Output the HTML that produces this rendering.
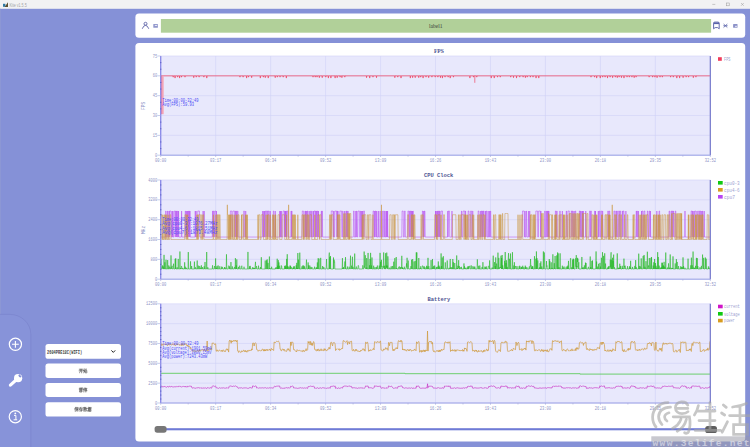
<!DOCTYPE html>
<html><head><meta charset="utf-8"><style>
html,body{margin:0;padding:0;width:750px;height:447px;overflow:hidden;background:#8591d7;}
svg{position:absolute;left:0;top:0;}
</style></head><body>
<svg width="750" height="447" viewBox="0 0 750 447">
<!-- title bar -->
<rect x="0" y="0" width="750" height="8.8" fill="#f2f2f3"/>
<rect x="3" y="3.8" width="2.4" height="3" fill="#2f78a0"/>
<path d="M4.6,6.9 L8,2.2 L8,6.9 Z" fill="#5c5030"/>
<text x="9.4" y="6.6" font-family="Liberation Sans" font-size="5" fill="#a4a4a4" textLength="17.3" lengthAdjust="spacingAndGlyphs">Kite v1.5.5</text>
<rect x="0" y="8.8" width="0.8" height="438.2" fill="#8e99d4"/>
<line x1="712.3" y1="4.4" x2="715.3" y2="4.4" stroke="#999" stroke-width="0.5"/>
<rect x="726.4" y="3" width="2.8" height="2.8" fill="none" stroke="#999" stroke-width="0.5"/>
<path d="M741,3 L743.8,5.8 M743.8,3 L741,5.8" stroke="#999" stroke-width="0.5"/>
<!-- left sidebar strip -->
<path d="M0,314.4 H10 C21,314.4 30.8,323 30.8,334 V447 H0 Z" fill="#8793d9"/>
<path d="M0,314.4 H10 C21,314.4 30.8,323 30.8,334 V447" fill="none" stroke="#7a85cd" stroke-width="0.9" stroke-opacity="0.8"/>
<!-- sidebar icons -->
<circle cx="15.4" cy="344.3" r="6.1" fill="none" stroke="#fff" stroke-width="1.2"/>
<path d="M15.4,340.9 V347.7 M12,344.3 H18.8" stroke="#fff" stroke-width="1.1"/>
<path d="M10.4,385.2 L17.2,379" stroke="#fff" stroke-width="3.1" stroke-linecap="round"/>
<circle cx="18.1" cy="378.2" r="4.1" fill="#fff"/>
<path d="M19.2,374 L21.6,376.4 L20.8,377.4 L19,377 L18.6,375.2 Z" fill="#8893d9"/>
<circle cx="15.3" cy="416.7" r="6.1" fill="none" stroke="#fff" stroke-width="1.2"/>
<circle cx="15.3" cy="413.4" r="0.9" fill="#fff"/>
<path d="M14,415.4 H15.9 V419.6 M13.6,419.8 H17.2" stroke="#fff" stroke-width="1" fill="none"/>
<!-- control panel -->
<rect x="45.5" y="344" width="75.5" height="14.8" rx="2.6" fill="#fff"/>
<text x="47" y="354.2" font-family="Liberation Mono" font-size="5.9" fill="#3c3c3c" font-weight="bold" textLength="35.2" lengthAdjust="spacingAndGlyphs">2604PRE18C(WIFI)</text>
<path d="M111.4,350.4 L113.3,352.4 L115.2,350.4" fill="none" stroke="#222" stroke-width="1"/>
<rect x="45.5" y="363.6" width="75.5" height="14.3" rx="2.6" fill="#fff"/>
<rect x="45.5" y="383.1" width="75.5" height="13.8" rx="2.6" fill="#fff"/>
<rect x="45.5" y="402.3" width="75.5" height="14.3" rx="2.6" fill="#fff"/>
<g stroke="#555" stroke-width="0.62" fill="none" stroke-linecap="round">
<path d="M 79.28 369.24 H 82.61 M 79.10 370.80 H 82.80 M 80.32 369.24 V 371.21 Q 80.21 372.44 79.47 372.85 M 81.62 369.24 V 372.85"/>
<path d="M 84.14 368.75 L 83.58 371.00 H 85.06 M 84.69 369.77 L 83.77 372.85 M 83.58 370.19 L 84.95 372.03 M 85.99 368.75 L 85.43 370.39 H 86.91 L 86.54 369.77 M 85.55 371.21 H 86.91 V 372.85 H 85.55 Z"/>
<path d="M 79.28 388.36 H 80.95 M 80.10 387.95 V 390.00 M 79.28 389.38 H 80.95 M 81.13 388.15 L 82.61 387.95 M 81.32 388.15 V 390.00 M 81.32 388.97 H 82.61 M 82.06 388.97 V 390.00 M 80.02 390.41 H 81.88 V 392.05 H 80.02 Z M 80.02 391.23 H 81.88"/>
<path d="M 84.14 387.95 L 83.40 389.80 M 83.84 389.18 V 392.05 M 85.69 387.95 V 388.36 M 84.69 388.44 H 86.91 M 85.06 388.97 H 86.54 V 389.67 H 85.06 Z M 84.69 390.20 H 86.91 V 390.74 M 85.06 390.82 H 86.54 M 85.80 390.82 V 392.05"/>
<path d="M 75.54 407.25 L 74.80 409.10 M 75.24 408.48 V 411.35 M 76.28 407.45 H 78.13 V 408.69 H 76.28 Z M 76.09 409.30 H 78.31 M 77.20 408.89 V 411.35 M 77.09 409.50 L 76.09 410.94 M 77.32 409.50 L 78.31 410.94"/>
<path d="M 79.10 408.07 H 82.80 M 80.77 407.25 L 79.47 409.71 M 80.02 409.10 V 411.35 M 80.95 408.89 H 82.24 L 81.50 409.71 V 411.35 Q 81.32 411.35 80.95 411.14 M 80.77 410.12 H 82.61"/>
<path d="M 84.32 407.25 V 408.89 M 83.58 408.07 H 85.06 M 83.70 407.45 L 84.07 407.87 M 84.95 407.45 L 84.58 407.87 M 83.58 409.30 H 85.06 M 84.51 409.10 L 83.77 411.14 M 83.77 410.12 L 84.88 411.35 M 85.69 407.25 L 85.25 408.89 M 85.43 408.27 H 86.91 M 86.54 408.27 Q 86.36 410.12 85.25 411.35 M 85.62 409.30 L 86.91 411.35"/>
<path d="M 87.70 408.48 H 88.99 M 88.44 407.25 V 411.14 Q 88.25 411.35 87.88 411.14 M 87.70 410.32 L 88.99 409.50 M 89.36 407.45 H 91.21 V 408.27 H 89.36 M 89.36 407.45 V 409.71 L 88.99 411.35 M 89.55 409.10 H 91.21 M 90.29 408.48 V 410.12 M 89.55 410.12 H 91.03 V 411.35 H 89.55 Z"/>
</g>
<!-- header card -->
<rect x="135.4" y="13.6" width="609.8" height="24.2" rx="3.6" fill="#fff"/>
<rect x="160.9" y="19" width="550.2" height="13.7" fill="#b1d099"/>
<text x="429" y="28" font-family="Liberation Serif" font-size="5.4" fill="#3a4038" textLength="13.4" lengthAdjust="spacingAndGlyphs">label1</text>
<circle cx="145.5" cy="23.8" r="1.5" fill="none" stroke="#5d62a6" stroke-width="0.9"/>
<path d="M142.4,28.4 Q143.6,25.4 145.5,25.3 Q147.4,25.4 148.6,28.4" fill="none" stroke="#5d62a6" stroke-width="0.9" stroke-linecap="round"/>
<rect x="153.3" y="24.1" width="4.6" height="3.6" rx="0.5" fill="#9096cc"/>
<rect x="154.8" y="24.9" width="2.4" height="1.1" fill="#e8e8f4"/>
<path d="M713.6,28.8 V23.3 Q713.6,22.1 714.8,22.1 H718 Q719.2,22.1 719.2,23.3 V28.8 L717.7,27.6 H715.1 Z" fill="none" stroke="#5a63aa" stroke-width="0.95" stroke-linejoin="round"/>
<rect x="713.6" y="22.5" width="5.6" height="1.6" fill="#5a63aa"/>
<path d="M723.6,24 L727.3,27.5 M727.3,24 L723.6,27.5 M723.3,25.75 H727.6" stroke="#5a63aa" stroke-width="0.8"/>
<rect x="733.1" y="24" width="4.4" height="3.7" rx="0.5" fill="#8c92c8"/>
<rect x="735.2" y="25.8" width="1.6" height="1.3" fill="#e8e8f4"/>
<!-- main card -->
<rect x="135.4" y="42.9" width="609.8" height="398.7" rx="3.6" fill="#fff"/>
<rect x="160.7" y="56" width="549.65" height="99.2" fill="#e8e8fc"/>
<line x1="160.7" y1="56" x2="710.35" y2="56" stroke="#d0d1f6" stroke-width="0.6"/>
<line x1="160.7" y1="75.84" x2="710.35" y2="75.84" stroke="#d0d1f6" stroke-width="0.6"/>
<line x1="160.7" y1="95.68" x2="710.35" y2="95.68" stroke="#d0d1f6" stroke-width="0.6"/>
<line x1="160.7" y1="115.52" x2="710.35" y2="115.52" stroke="#d0d1f6" stroke-width="0.6"/>
<line x1="160.7" y1="135.36" x2="710.35" y2="135.36" stroke="#d0d1f6" stroke-width="0.6"/>
<line x1="160.7" y1="155.2" x2="710.35" y2="155.2" stroke="#d0d1f6" stroke-width="0.6"/>
<line x1="160.7" y1="56" x2="160.7" y2="155.2" stroke="#d0d1f6" stroke-width="0.6"/>
<line x1="215.66" y1="56" x2="215.66" y2="155.2" stroke="#d0d1f6" stroke-width="0.6"/>
<line x1="270.63" y1="56" x2="270.63" y2="155.2" stroke="#d0d1f6" stroke-width="0.6"/>
<line x1="325.6" y1="56" x2="325.6" y2="155.2" stroke="#d0d1f6" stroke-width="0.6"/>
<line x1="380.56" y1="56" x2="380.56" y2="155.2" stroke="#d0d1f6" stroke-width="0.6"/>
<line x1="435.53" y1="56" x2="435.53" y2="155.2" stroke="#d0d1f6" stroke-width="0.6"/>
<line x1="490.49" y1="56" x2="490.49" y2="155.2" stroke="#d0d1f6" stroke-width="0.6"/>
<line x1="545.46" y1="56" x2="545.46" y2="155.2" stroke="#d0d1f6" stroke-width="0.6"/>
<line x1="600.42" y1="56" x2="600.42" y2="155.2" stroke="#d0d1f6" stroke-width="0.6"/>
<line x1="655.38" y1="56" x2="655.38" y2="155.2" stroke="#d0d1f6" stroke-width="0.6"/>
<line x1="710.35" y1="56" x2="710.35" y2="155.2" stroke="#d0d1f6" stroke-width="0.6"/>
<path d="M160.7,75.84 L173.06,75.84 L173.21,77.16 L173.36,75.84 L174.92,75.84 L175.07,78.09 L175.22,75.84 L177.48,75.84 L177.63,77.16 L177.78,75.84 L179.44,75.84 L179.59,78.09 L179.74,75.84 L181.35,75.84 L181.5,77.16 L181.65,75.84 L184.85,75.84 L185,77.16 L185.15,75.84 L193.59,75.84 L193.74,77.69 L193.89,75.84 L196.15,75.84 L196.3,77.16 L196.45,75.84 L198.98,75.84 L199.13,77.16 L199.28,75.84 L203.71,75.84 L203.86,77.16 L204.01,75.84 L206.63,75.84 L206.78,78.09 L206.93,75.84 L239.82,75.84 L239.97,77.16 L240.12,75.84 L242.98,75.84 L243.13,77.16 L243.28,75.84 L246.46,75.84 L246.61,78.09 L246.76,75.84 L248.33,75.84 L248.48,77.16 L248.63,75.84 L251.51,75.84 L251.66,77.69 L251.81,75.84 L260.18,75.84 L260.33,78.09 L260.48,75.84 L263.23,75.84 L263.38,77.16 L263.53,75.84 L265.14,75.84 L265.29,77.69 L265.44,75.84 L268.11,75.84 L268.26,78.09 L268.41,75.84 L275.09,75.84 L275.24,77.69 L275.39,75.84 L277.2,75.84 L277.35,77.16 L277.5,75.84 L279.89,75.84 L280.04,77.16 L280.19,75.84 L283.07,75.84 L283.22,77.16 L283.37,75.84 L286.2,75.84 L286.35,78.09 L286.5,75.84 L312.88,75.84 L313.03,77.16 L313.18,75.84 L315.1,75.84 L315.25,77.16 L315.4,75.84 L316.92,75.84 L317.07,77.16 L317.22,75.84 L319.19,75.84 L319.34,77.69 L319.49,75.84 L322.09,75.84 L322.24,77.69 L322.39,75.84 L325.6,75.84 L325.75,77.16 L325.9,75.84 L328.23,75.84 L328.38,78.09 L328.53,75.84 L330.74,75.84 L330.89,78.09 L331.04,75.84 L334.98,75.84 L335.13,78.09 L335.28,75.84 L337.07,75.84 L337.22,77.69 L337.37,75.84 L339.95,75.84 L340.1,77.16 L340.25,75.84 L341.75,75.84 L341.9,77.69 L342.05,75.84 L344.66,75.84 L344.81,77.16 L344.96,75.84 L366.41,75.84 L366.56,77.69 L366.71,75.84 L369.55,75.84 L369.7,78.09 L369.85,75.84 L372.84,75.84 L372.99,77.16 L373.14,75.84 L376.35,75.84 L376.5,77.69 L376.65,75.84 L394.69,75.84 L394.84,77.69 L394.99,75.84 L397.63,75.84 L397.78,77.16 L397.93,75.84 L400.88,75.84 L401.03,78.09 L401.18,75.84 L410.2,75.84 L410.35,78.09 L410.5,75.84 L412.47,75.84 L412.62,77.69 L412.77,75.84 L415.07,75.84 L415.22,77.69 L415.37,75.84 L418.59,75.84 L418.74,77.69 L418.89,75.84 L420.54,75.84 L420.69,77.16 L420.84,75.84 L422.94,75.84 L423.09,78.09 L423.24,75.84 L425.87,75.84 L426.02,77.16 L426.17,75.84 L428.53,75.84 L428.68,77.69 L428.83,75.84 L431.77,75.84 L431.92,77.16 L432.07,75.84 L435.07,75.84 L435.22,77.16 L435.37,75.84 L437.73,75.84 L437.88,77.16 L438.03,75.84 L440.31,75.84 L440.46,77.69 L440.61,75.84 L442.27,75.84 L442.42,78.09 L442.57,75.84 L444.9,75.84 L445.05,77.16 L445.2,75.84 L448.01,75.84 L448.16,77.16 L448.31,75.84 L450.08,75.84 L450.23,78.09 L450.38,75.84 L453.33,75.84 L453.48,77.16 L453.63,75.84 L469.75,75.84 L469.9,78.09 L470.05,75.84 L473.32,75.84 L473.47,77.16 L473.62,75.84 L476.61,75.84 L476.76,77.16 L476.91,75.84 L491.1,75.84 L491.25,78.09 L491.4,75.84 L494.1,75.84 L494.25,78.09 L494.4,75.84 L497.39,75.84 L497.54,77.16 L497.69,75.84 L500.14,75.84 L500.29,77.16 L500.44,75.84 L510.55,75.84 L510.7,77.16 L510.85,75.84 L513.35,75.84 L513.5,77.69 L513.65,75.84 L516.38,75.84 L516.53,78.09 L516.68,75.84 L519.59,75.84 L519.74,77.16 L519.89,75.84 L522.98,75.84 L523.13,77.16 L523.28,75.84 L525.23,75.84 L525.38,77.69 L525.53,75.84 L527.1,75.84 L527.25,77.16 L527.4,75.84 L530.27,75.84 L530.42,77.16 L530.57,75.84 L532.87,75.84 L533.02,77.16 L533.17,75.84 L535.91,75.84 L536.06,78.09 L536.21,75.84 L538.63,75.84 L538.78,78.09 L538.93,75.84 L590.86,75.84 L591.01,77.16 L591.16,75.84 L594.44,75.84 L594.59,77.16 L594.74,75.84 L596.53,75.84 L596.68,78.09 L596.83,75.84 L600.12,75.84 L600.27,78.09 L600.42,75.84 L602.53,75.84 L602.68,77.16 L602.83,75.84 L604.98,75.84 L605.13,77.16 L605.28,75.84 L607.38,75.84 L607.53,78.09 L607.68,75.84 L609.98,75.84 L610.13,77.16 L610.28,75.84 L612.47,75.84 L612.62,77.69 L612.77,75.84 L615.19,75.84 L615.34,77.16 L615.49,75.84 L617.14,75.84 L617.29,77.69 L617.44,75.84 L619.01,75.84 L619.16,77.16 L619.31,75.84 L621.3,75.84 L621.45,77.69 L621.6,75.84 L623.83,75.84 L623.98,78.09 L624.13,75.84 L626.89,75.84 L627.04,77.16 L627.19,75.84 L629.19,75.84 L629.34,77.16 L629.49,75.84 L631.76,75.84 L631.91,77.16 L632.06,75.84 L634.04,75.84 L634.19,77.69 L634.34,75.84 L635.99,75.84 L636.14,77.16 L636.29,75.84 L649.01,75.84 L649.16,77.16 L649.31,75.84 L652.5,75.84 L652.65,77.16 L652.8,75.84 L654.77,75.84 L654.92,77.16 L655.07,75.84 L656.94,75.84 L657.09,77.69 L657.24,75.84 L659.87,75.84 L660.02,77.16 L660.17,75.84 L662.19,75.84 L662.34,77.16 L662.49,75.84 L670.45,75.84 L670.6,77.16 L670.75,75.84 L673.18,75.84 L673.33,77.16 L673.48,75.84 L676.66,75.84 L676.81,78.09 L676.96,75.84 L679.45,75.84 L679.6,78.09 L679.75,75.84 L682.99,75.84 L683.14,77.69 L683.29,75.84 L686.03,75.84 L686.18,77.16 L686.33,75.84 L688.45,75.84 L688.6,77.16 L688.75,75.84 L693.19,75.84 L693.34,77.69 L693.49,75.84 L695.77,75.84 L695.92,77.16 L696.07,75.84 L710.35,75.84" fill="none" stroke="#f04866" stroke-width="0.75"/>
<line x1="474.8" y1="75.84" x2="474.8" y2="82.8" stroke="#f04866" stroke-width="0.7"/>
<rect x="161.3" y="75.84" width="2.4" height="38.36" fill="#f4a8ba"/>
<line x1="161.6" y1="75.84" x2="161.6" y2="114.2" stroke="#f06080" stroke-width="0.6"/>
<line x1="160.7" y1="56" x2="160.7" y2="155.2" stroke="#8686e8" stroke-width="1.25"/>
<line x1="710.35" y1="56" x2="710.35" y2="155.2" stroke="#7f82cf" stroke-width="1.3"/>
<line x1="160.7" y1="155.2" x2="710.35" y2="155.2" stroke="#9ca2e6" stroke-width="1"/>
<line x1="157.4" y1="155.2" x2="160.7" y2="155.2" stroke="#a4a8dc" stroke-width="0.6"/>
<text x="157.1" y="156.8" font-family="Liberation Mono" font-size="4.85" fill="#8d92c6" text-anchor="end" font-weight="normal" textLength="2.2" lengthAdjust="spacingAndGlyphs">0</text>
<line x1="160" y1="148.59" x2="161.4" y2="148.59" stroke="#5a5ec0" stroke-width="0.8"/>
<line x1="160" y1="141.97" x2="161.4" y2="141.97" stroke="#5a5ec0" stroke-width="0.8"/>
<line x1="157.4" y1="135.36" x2="160.7" y2="135.36" stroke="#a4a8dc" stroke-width="0.6"/>
<text x="157.1" y="136.96" font-family="Liberation Mono" font-size="4.85" fill="#8d92c6" text-anchor="end" font-weight="normal" textLength="4.4" lengthAdjust="spacingAndGlyphs">15</text>
<line x1="160" y1="128.75" x2="161.4" y2="128.75" stroke="#5a5ec0" stroke-width="0.8"/>
<line x1="160" y1="122.13" x2="161.4" y2="122.13" stroke="#5a5ec0" stroke-width="0.8"/>
<line x1="157.4" y1="115.52" x2="160.7" y2="115.52" stroke="#a4a8dc" stroke-width="0.6"/>
<text x="157.1" y="117.12" font-family="Liberation Mono" font-size="4.85" fill="#8d92c6" text-anchor="end" font-weight="normal" textLength="4.4" lengthAdjust="spacingAndGlyphs">30</text>
<line x1="160" y1="108.91" x2="161.4" y2="108.91" stroke="#5a5ec0" stroke-width="0.8"/>
<line x1="160" y1="102.29" x2="161.4" y2="102.29" stroke="#5a5ec0" stroke-width="0.8"/>
<line x1="157.4" y1="95.68" x2="160.7" y2="95.68" stroke="#a4a8dc" stroke-width="0.6"/>
<text x="157.1" y="97.28" font-family="Liberation Mono" font-size="4.85" fill="#8d92c6" text-anchor="end" font-weight="normal" textLength="4.4" lengthAdjust="spacingAndGlyphs">45</text>
<line x1="160" y1="89.07" x2="161.4" y2="89.07" stroke="#5a5ec0" stroke-width="0.8"/>
<line x1="160" y1="82.45" x2="161.4" y2="82.45" stroke="#5a5ec0" stroke-width="0.8"/>
<line x1="157.4" y1="75.84" x2="160.7" y2="75.84" stroke="#a4a8dc" stroke-width="0.6"/>
<text x="157.1" y="77.44" font-family="Liberation Mono" font-size="4.85" fill="#8d92c6" text-anchor="end" font-weight="normal" textLength="4.4" lengthAdjust="spacingAndGlyphs">60</text>
<line x1="160" y1="69.23" x2="161.4" y2="69.23" stroke="#5a5ec0" stroke-width="0.8"/>
<line x1="160" y1="62.61" x2="161.4" y2="62.61" stroke="#5a5ec0" stroke-width="0.8"/>
<line x1="157.4" y1="56" x2="160.7" y2="56" stroke="#a4a8dc" stroke-width="0.6"/>
<text x="157.1" y="57.6" font-family="Liberation Mono" font-size="4.85" fill="#8d92c6" text-anchor="end" font-weight="normal" textLength="4.4" lengthAdjust="spacingAndGlyphs">75</text>
<line x1="160.7" y1="155.2" x2="160.7" y2="157" stroke="#a4a8dc" stroke-width="0.6"/>
<line x1="188.18" y1="155.2" x2="188.18" y2="156.7" stroke="#a4a8dc" stroke-width="0.6"/>
<text x="160.7" y="161.8" font-family="Liberation Mono" font-size="4.85" fill="#8d92c6" text-anchor="middle" font-weight="normal" textLength="11.4" lengthAdjust="spacingAndGlyphs">00:00</text>
<line x1="215.66" y1="155.2" x2="215.66" y2="157" stroke="#a4a8dc" stroke-width="0.6"/>
<line x1="243.15" y1="155.2" x2="243.15" y2="156.7" stroke="#a4a8dc" stroke-width="0.6"/>
<text x="215.66" y="161.8" font-family="Liberation Mono" font-size="4.85" fill="#8d92c6" text-anchor="middle" font-weight="normal" textLength="11.4" lengthAdjust="spacingAndGlyphs">03:17</text>
<line x1="270.63" y1="155.2" x2="270.63" y2="157" stroke="#a4a8dc" stroke-width="0.6"/>
<line x1="298.11" y1="155.2" x2="298.11" y2="156.7" stroke="#a4a8dc" stroke-width="0.6"/>
<text x="270.63" y="161.8" font-family="Liberation Mono" font-size="4.85" fill="#8d92c6" text-anchor="middle" font-weight="normal" textLength="11.4" lengthAdjust="spacingAndGlyphs">06:34</text>
<line x1="325.6" y1="155.2" x2="325.6" y2="157" stroke="#a4a8dc" stroke-width="0.6"/>
<line x1="353.08" y1="155.2" x2="353.08" y2="156.7" stroke="#a4a8dc" stroke-width="0.6"/>
<text x="325.6" y="161.8" font-family="Liberation Mono" font-size="4.85" fill="#8d92c6" text-anchor="middle" font-weight="normal" textLength="11.4" lengthAdjust="spacingAndGlyphs">09:52</text>
<line x1="380.56" y1="155.2" x2="380.56" y2="157" stroke="#a4a8dc" stroke-width="0.6"/>
<line x1="408.04" y1="155.2" x2="408.04" y2="156.7" stroke="#a4a8dc" stroke-width="0.6"/>
<text x="380.56" y="161.8" font-family="Liberation Mono" font-size="4.85" fill="#8d92c6" text-anchor="middle" font-weight="normal" textLength="11.4" lengthAdjust="spacingAndGlyphs">13:09</text>
<line x1="435.53" y1="155.2" x2="435.53" y2="157" stroke="#a4a8dc" stroke-width="0.6"/>
<line x1="463.01" y1="155.2" x2="463.01" y2="156.7" stroke="#a4a8dc" stroke-width="0.6"/>
<text x="435.53" y="161.8" font-family="Liberation Mono" font-size="4.85" fill="#8d92c6" text-anchor="middle" font-weight="normal" textLength="11.4" lengthAdjust="spacingAndGlyphs">16:26</text>
<line x1="490.49" y1="155.2" x2="490.49" y2="157" stroke="#a4a8dc" stroke-width="0.6"/>
<line x1="517.97" y1="155.2" x2="517.97" y2="156.7" stroke="#a4a8dc" stroke-width="0.6"/>
<text x="490.49" y="161.8" font-family="Liberation Mono" font-size="4.85" fill="#8d92c6" text-anchor="middle" font-weight="normal" textLength="11.4" lengthAdjust="spacingAndGlyphs">19:43</text>
<line x1="545.46" y1="155.2" x2="545.46" y2="157" stroke="#a4a8dc" stroke-width="0.6"/>
<line x1="572.94" y1="155.2" x2="572.94" y2="156.7" stroke="#a4a8dc" stroke-width="0.6"/>
<text x="545.46" y="161.8" font-family="Liberation Mono" font-size="4.85" fill="#8d92c6" text-anchor="middle" font-weight="normal" textLength="11.4" lengthAdjust="spacingAndGlyphs">23:00</text>
<line x1="600.42" y1="155.2" x2="600.42" y2="157" stroke="#a4a8dc" stroke-width="0.6"/>
<line x1="627.9" y1="155.2" x2="627.9" y2="156.7" stroke="#a4a8dc" stroke-width="0.6"/>
<text x="600.42" y="161.8" font-family="Liberation Mono" font-size="4.85" fill="#8d92c6" text-anchor="middle" font-weight="normal" textLength="11.4" lengthAdjust="spacingAndGlyphs">26:18</text>
<line x1="655.38" y1="155.2" x2="655.38" y2="157" stroke="#a4a8dc" stroke-width="0.6"/>
<line x1="682.87" y1="155.2" x2="682.87" y2="156.7" stroke="#a4a8dc" stroke-width="0.6"/>
<text x="655.38" y="161.8" font-family="Liberation Mono" font-size="4.85" fill="#8d92c6" text-anchor="middle" font-weight="normal" textLength="11.4" lengthAdjust="spacingAndGlyphs">29:35</text>
<line x1="710.35" y1="155.2" x2="710.35" y2="157" stroke="#a4a8dc" stroke-width="0.6"/>
<text x="710.35" y="161.8" font-family="Liberation Mono" font-size="4.85" fill="#8d92c6" text-anchor="middle" font-weight="normal" textLength="11.4" lengthAdjust="spacingAndGlyphs">32:52</text>
<text x="162.2" y="101.6" font-family="Liberation Mono" font-size="5" fill="#4a4af4" text-anchor="start" font-weight="normal" textLength="36.4" lengthAdjust="spacingAndGlyphs">Time:00:00-32:49</text>
<text x="162.2" y="105.9" font-family="Liberation Mono" font-size="5" fill="#4a4af4" text-anchor="start" font-weight="normal" textLength="31.8" lengthAdjust="spacingAndGlyphs">Avg(FPS):59.93</text>
<rect x="160.7" y="180" width="549.65" height="99.2" fill="#e8e8fc"/>
<line x1="160.7" y1="180" x2="710.35" y2="180" stroke="#d0d1f6" stroke-width="0.6"/>
<line x1="160.7" y1="199.84" x2="710.35" y2="199.84" stroke="#d0d1f6" stroke-width="0.6"/>
<line x1="160.7" y1="219.68" x2="710.35" y2="219.68" stroke="#d0d1f6" stroke-width="0.6"/>
<line x1="160.7" y1="239.52" x2="710.35" y2="239.52" stroke="#d0d1f6" stroke-width="0.6"/>
<line x1="160.7" y1="259.36" x2="710.35" y2="259.36" stroke="#d0d1f6" stroke-width="0.6"/>
<line x1="160.7" y1="279.2" x2="710.35" y2="279.2" stroke="#d0d1f6" stroke-width="0.6"/>
<line x1="160.7" y1="180" x2="160.7" y2="279.2" stroke="#d0d1f6" stroke-width="0.6"/>
<line x1="215.66" y1="180" x2="215.66" y2="279.2" stroke="#d0d1f6" stroke-width="0.6"/>
<line x1="270.63" y1="180" x2="270.63" y2="279.2" stroke="#d0d1f6" stroke-width="0.6"/>
<line x1="325.6" y1="180" x2="325.6" y2="279.2" stroke="#d0d1f6" stroke-width="0.6"/>
<line x1="380.56" y1="180" x2="380.56" y2="279.2" stroke="#d0d1f6" stroke-width="0.6"/>
<line x1="435.53" y1="180" x2="435.53" y2="279.2" stroke="#d0d1f6" stroke-width="0.6"/>
<line x1="490.49" y1="180" x2="490.49" y2="279.2" stroke="#d0d1f6" stroke-width="0.6"/>
<line x1="545.46" y1="180" x2="545.46" y2="279.2" stroke="#d0d1f6" stroke-width="0.6"/>
<line x1="600.42" y1="180" x2="600.42" y2="279.2" stroke="#d0d1f6" stroke-width="0.6"/>
<line x1="655.38" y1="180" x2="655.38" y2="279.2" stroke="#d0d1f6" stroke-width="0.6"/>
<line x1="710.35" y1="180" x2="710.35" y2="279.2" stroke="#d0d1f6" stroke-width="0.6"/>
<path d="M160.7,237.04 L160.98,237.04 L161.26,237.04 L161.54,237.04 L161.81,237.04 L162.09,237.04 L162.37,237.04 L162.65,237.04 L162.93,237.04 L163.21,237.04 L163.49,237.04 L163.77,237.04 L164.04,237.04 L164.32,237.04 L164.6,237.04 L164.88,237.04 L165.16,237.04 L165.44,237.04 L165.72,211 L166,211 L166.27,237.04 L166.55,237.04 L166.83,237.04 L167.11,237.04 L167.39,211 L167.67,211 L167.95,237.04 L168.23,237.04 L168.5,237.04 L168.78,237.04 L169.06,211 L169.34,237.04 L169.62,211 L169.9,211 L170.18,211 L170.46,211 L170.73,211 L171.01,211 L171.29,237.04 L171.57,237.04 L171.85,237.04 L172.13,211 L172.41,237.04 L172.69,237.04 L172.96,211 L173.24,237.04 L173.52,237.04 L173.8,237.04 L174.08,237.04 L174.36,211 L174.64,211 L174.92,211 L175.19,211 L175.47,211 L175.75,237.04 L176.03,211 L176.31,237.04 L176.59,211 L176.87,211 L177.14,237.04 L177.42,237.04 L177.7,211 L177.98,211 L178.26,237.04 L178.54,211 L178.82,237.04 L179.1,237.04 L179.37,237.04 L179.65,237.04 L179.93,237.04 L180.21,237.04 L180.49,237.04 L180.77,237.04 L181.05,237.04 L181.33,237.04 L181.6,211 L181.88,237.04 L182.16,237.04 L182.44,237.04 L182.72,237.04 L183,237.04 L183.28,237.04 L183.56,237.04 L183.83,237.04 L184.11,237.04 L184.39,237.04 L184.67,237.04 L184.95,237.04 L185.23,211 L185.51,211 L185.79,237.04 L186.06,237.04 L186.34,237.04 L186.62,211 L186.9,237.04 L187.18,237.04 L187.46,211 L187.74,237.04 L188.02,237.04 L188.29,211 L188.57,211 L188.85,237.04 L189.13,211 L189.41,211 L189.69,237.04 L189.97,211 L190.25,237.04 L190.52,237.04 L190.8,237.04 L191.08,237.04 L191.36,237.04 L191.64,237.04 L191.92,237.04 L192.2,237.04 L192.47,237.04 L192.75,237.04 L193.03,237.04 L193.31,237.04 L193.59,237.04 L193.87,237.04 L194.15,237.04 L194.43,237.04 L194.7,237.04 L194.98,237.04 L195.26,211 L195.54,237.04 L195.82,237.04 L196.1,211 L196.38,237.04 L196.66,237.04 L196.93,237.04 L197.21,237.04 L197.49,237.04 L197.77,211 L198.05,211 L198.33,211 L198.61,211 L198.89,211 L199.16,211 L199.44,211 L199.72,237.04 L200,237.04 L200.28,237.04 L200.56,237.04 L200.84,237.04 L201.12,237.04 L201.39,237.04 L201.67,237.04 L201.95,237.04 L202.23,237.04 L202.51,237.04 L202.79,237.04 L203.07,211 L203.35,237.04 L203.62,237.04 L203.9,237.04 L204.18,211 L204.46,237.04 L204.74,237.04 L205.02,237.04 L205.3,237.04 L205.58,237.04 L205.85,237.04 L206.13,237.04 L206.41,237.04 L206.69,237.04 L206.97,237.04 L207.25,237.04 L207.53,237.04 L207.8,237.04 L208.08,237.04 L208.36,237.04 L208.64,237.04 L208.92,237.04 L209.2,237.04 L209.48,237.04 L209.76,237.04 L210.03,237.04 L210.31,237.04 L210.59,237.04 L210.87,237.04 L211.15,237.04 L211.43,237.04 L211.71,237.04 L211.99,237.04 L212.26,237.04 L212.54,211 L212.82,211 L213.1,237.04 L213.38,211 L213.66,211 L213.94,211 L214.22,237.04 L214.49,237.04 L214.77,211 L215.05,211 L215.33,211 L215.61,211 L215.89,211 L216.17,237.04 L216.45,211 L216.72,237.04 L217,237.04 L217.28,237.04 L217.56,237.04 L217.84,237.04 L218.12,237.04 L218.4,237.04 L218.68,237.04 L218.95,237.04 L219.23,237.04 L219.51,237.04 L219.79,237.04 L220.07,237.04 L220.35,237.04 L220.63,237.04 L220.91,237.04 L221.18,237.04 L221.46,237.04 L221.74,237.04 L222.02,237.04 L222.3,237.04 L222.58,237.04 L222.86,237.04 L223.13,237.04 L223.41,237.04 L223.69,237.04 L223.97,237.04 L224.25,237.04 L224.53,237.04 L224.81,237.04 L225.09,237.04 L225.36,237.04 L225.64,237.04 L225.92,237.04 L226.2,237.04 L226.48,237.04 L226.76,237.04 L227.04,237.04 L227.32,237.04 L227.59,237.04 L227.87,237.04 L228.15,237.04 L228.43,237.04 L228.71,237.04 L228.99,237.04 L229.27,237.04 L229.55,237.04 L229.82,237.04 L230.1,237.04 L230.38,211 L230.66,211 L230.94,211 L231.22,211 L231.5,211 L231.78,211 L232.05,237.04 L232.33,237.04 L232.61,237.04 L232.89,211 L233.17,211 L233.45,211 L233.73,211 L234.01,211 L234.28,211 L234.56,211 L234.84,237.04 L235.12,237.04 L235.4,211 L235.68,211 L235.96,237.04 L236.24,211 L236.51,211 L236.79,237.04 L237.07,237.04 L237.35,237.04 L237.63,211 L237.91,211 L238.19,237.04 L238.46,237.04 L238.74,237.04 L239.02,237.04 L239.3,237.04 L239.58,237.04 L239.86,237.04 L240.14,237.04 L240.42,237.04 L240.69,237.04 L240.97,237.04 L241.25,237.04 L241.53,237.04 L241.81,237.04 L242.09,237.04 L242.37,237.04 L242.65,237.04 L242.92,237.04 L243.2,237.04 L243.48,237.04 L243.76,211 L244.04,211 L244.32,211 L244.6,237.04 L244.88,237.04 L245.15,237.04 L245.43,237.04 L245.71,211 L245.99,237.04 L246.27,237.04 L246.55,237.04 L246.83,237.04 L247.11,237.04 L247.38,237.04 L247.66,237.04 L247.94,237.04 L248.22,237.04 L248.5,237.04 L248.78,237.04 L249.06,237.04 L249.34,237.04 L249.61,237.04 L249.89,237.04 L250.17,237.04 L250.45,237.04 L250.73,237.04 L251.01,237.04 L251.29,237.04 L251.57,237.04 L251.84,237.04 L252.12,237.04 L252.4,237.04 L252.68,237.04 L252.96,237.04 L253.24,237.04 L253.52,237.04 L253.79,237.04 L254.07,237.04 L254.35,237.04 L254.63,237.04 L254.91,237.04 L255.19,237.04 L255.47,237.04 L255.75,237.04 L256.02,237.04 L256.3,237.04 L256.58,237.04 L256.86,237.04 L257.14,237.04 L257.42,237.04 L257.7,237.04 L257.98,237.04 L258.25,237.04 L258.53,237.04 L258.81,237.04 L259.09,237.04 L259.37,237.04 L259.65,237.04 L259.93,237.04 L260.21,237.04 L260.48,237.04 L260.76,237.04 L261.04,237.04 L261.32,237.04 L261.6,237.04 L261.88,237.04 L262.16,237.04 L262.44,237.04 L262.71,211 L262.99,237.04 L263.27,237.04 L263.55,237.04 L263.83,211 L264.11,237.04 L264.39,237.04 L264.67,211 L264.94,237.04 L265.22,237.04 L265.5,211 L265.78,211 L266.06,211 L266.34,211 L266.62,211 L266.9,237.04 L267.17,211 L267.45,211 L267.73,211 L268.01,237.04 L268.29,211 L268.57,211 L268.85,211 L269.12,211 L269.4,237.04 L269.68,237.04 L269.96,237.04 L270.24,211 L270.52,237.04 L270.8,237.04 L271.08,237.04 L271.35,237.04 L271.63,237.04 L271.91,237.04 L272.19,237.04 L272.47,237.04 L272.75,237.04 L273.03,237.04 L273.31,211 L273.58,211 L273.86,211 L274.14,237.04 L274.42,237.04 L274.7,237.04 L274.98,237.04 L275.26,211 L275.54,237.04 L275.81,237.04 L276.09,237.04 L276.37,237.04 L276.65,237.04 L276.93,237.04 L277.21,237.04 L277.49,237.04 L277.77,237.04 L278.04,237.04 L278.32,237.04 L278.6,237.04 L278.88,237.04 L279.16,237.04 L279.44,237.04 L279.72,211 L280,237.04 L280.27,237.04 L280.55,211 L280.83,237.04 L281.11,237.04 L281.39,211 L281.67,237.04 L281.95,237.04 L282.23,237.04 L282.5,237.04 L282.78,237.04 L283.06,211 L283.34,211 L283.62,211 L283.9,211 L284.18,211 L284.45,211 L284.73,237.04 L285.01,211 L285.29,237.04 L285.57,211 L285.85,237.04 L286.13,211 L286.41,211 L286.68,237.04 L286.96,237.04 L287.24,211 L287.52,211 L287.8,211 L288.08,211 L288.36,237.04 L288.64,237.04 L288.91,237.04 L289.19,237.04 L289.47,237.04 L289.75,237.04 L290.03,237.04 L290.31,237.04 L290.59,237.04 L290.87,237.04 L291.14,211 L291.42,237.04 L291.7,211 L291.98,211 L292.26,237.04 L292.54,237.04 L292.82,237.04 L293.1,237.04 L293.37,237.04 L293.65,237.04 L293.93,237.04 L294.21,237.04 L294.49,237.04 L294.77,237.04 L295.05,237.04 L295.33,237.04 L295.6,237.04 L295.88,237.04 L296.16,237.04 L296.44,237.04 L296.72,237.04 L297,237.04 L297.28,237.04 L297.56,237.04 L297.83,237.04 L298.11,237.04 L298.39,237.04 L298.67,237.04 L298.95,237.04 L299.23,237.04 L299.51,237.04 L299.78,237.04 L300.06,237.04 L300.34,237.04 L300.62,237.04 L300.9,237.04 L301.18,237.04 L301.46,237.04 L301.74,237.04 L302.01,237.04 L302.29,211 L302.57,211 L302.85,211 L303.13,211 L303.41,211 L303.69,237.04 L303.97,237.04 L304.24,237.04 L304.52,237.04 L304.8,237.04 L305.08,211 L305.36,237.04 L305.64,211 L305.92,211 L306.2,237.04 L306.47,237.04 L306.75,211 L307.03,237.04 L307.31,211 L307.59,211 L307.87,211 L308.15,237.04 L308.43,237.04 L308.7,237.04 L308.98,237.04 L309.26,211 L309.54,237.04 L309.82,237.04 L310.1,237.04 L310.38,237.04 L310.66,211 L310.93,211 L311.21,237.04 L311.49,237.04 L311.77,211 L312.05,211 L312.33,237.04 L312.61,237.04 L312.89,237.04 L313.16,237.04 L313.44,211 L313.72,237.04 L314,211 L314.28,211 L314.56,211 L314.84,211 L315.11,211 L315.39,237.04 L315.67,211 L315.95,211 L316.23,237.04 L316.51,211 L316.79,211 L317.07,237.04 L317.34,211 L317.62,211 L317.9,211 L318.18,237.04 L318.46,211 L318.74,237.04 L319.02,237.04 L319.3,237.04 L319.57,237.04 L319.85,237.04 L320.13,237.04 L320.41,237.04 L320.69,237.04 L320.97,237.04 L321.25,211 L321.53,211 L321.8,237.04 L322.08,211 L322.36,211 L322.64,237.04 L322.92,237.04 L323.2,237.04 L323.48,237.04 L323.76,237.04 L324.03,237.04 L324.31,237.04 L324.59,237.04 L324.87,237.04 L325.15,237.04 L325.43,237.04 L325.71,237.04 L325.99,237.04 L326.26,237.04 L326.54,237.04 L326.82,237.04 L327.1,237.04 L327.38,237.04 L327.66,237.04 L327.94,237.04 L328.22,237.04 L328.49,237.04 L328.77,237.04 L329.05,237.04 L329.33,237.04 L329.61,237.04 L329.89,237.04 L330.17,237.04 L330.44,237.04 L330.72,237.04 L331,237.04 L331.28,211 L331.56,211 L331.84,211 L332.12,211 L332.4,211 L332.67,211 L332.95,211 L333.23,237.04 L333.51,237.04 L333.79,211 L334.07,237.04 L334.35,237.04 L334.63,237.04 L334.9,211 L335.18,211 L335.46,211 L335.74,211 L336.02,211 L336.3,211 L336.58,211 L336.86,237.04 L337.13,211 L337.41,211 L337.69,237.04 L337.97,211 L338.25,237.04 L338.53,237.04 L338.81,237.04 L339.09,237.04 L339.36,237.04 L339.64,237.04 L339.92,211 L340.2,211 L340.48,211 L340.76,211 L341.04,211 L341.32,211 L341.59,211 L341.87,237.04 L342.15,237.04 L342.43,237.04 L342.71,211 L342.99,211 L343.27,237.04 L343.55,237.04 L343.82,237.04 L344.1,237.04 L344.38,237.04 L344.66,211 L344.94,237.04 L345.22,237.04 L345.5,237.04 L345.77,237.04 L346.05,211 L346.33,211 L346.61,237.04 L346.89,211 L347.17,211 L347.45,237.04 L347.73,237.04 L348,211 L348.28,237.04 L348.56,237.04 L348.84,237.04 L349.12,237.04 L349.4,237.04 L349.68,237.04 L349.96,237.04 L350.23,237.04 L350.51,237.04 L350.79,237.04 L351.07,237.04 L351.35,237.04 L351.63,237.04 L351.91,237.04 L352.19,237.04 L352.46,237.04 L352.74,237.04 L353.02,237.04 L353.3,237.04 L353.58,211 L353.86,211 L354.14,211 L354.42,237.04 L354.69,237.04 L354.97,237.04 L355.25,237.04 L355.53,237.04 L355.81,211 L356.09,237.04 L356.37,237.04 L356.65,211 L356.92,211 L357.2,237.04 L357.48,237.04 L357.76,237.04 L358.04,211 L358.32,211 L358.6,211 L358.88,211 L359.15,211 L359.43,211 L359.71,237.04 L359.99,237.04 L360.27,237.04 L360.55,211 L360.83,211 L361.1,237.04 L361.38,237.04 L361.66,211 L361.94,237.04 L362.22,237.04 L362.5,211 L362.78,237.04 L363.06,237.04 L363.33,237.04 L363.61,211 L363.89,211 L364.17,211 L364.45,211 L364.73,237.04 L365.01,237.04 L365.29,237.04 L365.56,237.04 L365.84,237.04 L366.12,237.04 L366.4,237.04 L366.68,237.04 L366.96,237.04 L367.24,237.04 L367.52,237.04 L367.79,237.04 L368.07,237.04 L368.35,237.04 L368.63,237.04 L368.91,237.04 L369.19,237.04 L369.47,237.04 L369.75,237.04 L370.02,237.04 L370.3,237.04 L370.58,237.04 L370.86,237.04 L371.14,237.04 L371.42,237.04 L371.7,237.04 L371.98,237.04 L372.25,237.04 L372.53,237.04 L372.81,237.04 L373.09,211 L373.37,211 L373.65,211 L373.93,211 L374.21,237.04 L374.48,237.04 L374.76,211 L375.04,237.04 L375.32,211 L375.6,211 L375.88,211 L376.16,237.04 L376.43,237.04 L376.71,211 L376.99,237.04 L377.27,237.04 L377.55,237.04 L377.83,237.04 L378.11,237.04 L378.39,211 L378.66,237.04 L378.94,237.04 L379.22,237.04 L379.5,237.04 L379.78,237.04 L380.06,211 L380.34,211 L380.62,237.04 L380.89,237.04 L381.17,237.04 L381.45,237.04 L381.73,237.04 L382.01,211 L382.29,211 L382.57,237.04 L382.85,237.04 L383.12,237.04 L383.4,237.04 L383.68,211 L383.96,211 L384.24,211 L384.52,237.04 L384.8,237.04 L385.08,211 L385.35,237.04 L385.63,237.04 L385.91,237.04 L386.19,237.04 L386.47,211 L386.75,237.04 L387.03,211 L387.31,237.04 L387.58,211 L387.86,237.04 L388.14,237.04 L388.42,237.04 L388.7,237.04 L388.98,237.04 L389.26,237.04 L389.54,237.04 L389.81,237.04 L390.09,237.04 L390.37,237.04 L390.65,237.04 L390.93,237.04 L391.21,237.04 L391.49,237.04 L391.76,237.04 L392.04,237.04 L392.32,237.04 L392.6,237.04 L392.88,237.04 L393.16,237.04 L393.44,237.04 L393.72,237.04 L393.99,237.04 L394.27,237.04 L394.55,237.04 L394.83,237.04 L395.11,237.04 L395.39,237.04 L395.67,237.04 L395.95,237.04 L396.22,237.04 L396.5,237.04 L396.78,237.04 L397.06,237.04 L397.34,237.04 L397.62,237.04 L397.9,237.04 L398.18,237.04 L398.45,237.04 L398.73,237.04 L399.01,237.04 L399.29,237.04 L399.57,237.04 L399.85,237.04 L400.13,237.04 L400.41,237.04 L400.68,237.04 L400.96,237.04 L401.24,237.04 L401.52,237.04 L401.8,237.04 L402.08,211 L402.36,211 L402.64,211 L402.91,211 L403.19,211 L403.47,237.04 L403.75,237.04 L404.03,237.04 L404.31,237.04 L404.59,211 L404.87,211 L405.14,211 L405.42,237.04 L405.7,237.04 L405.98,237.04 L406.26,237.04 L406.54,237.04 L406.82,237.04 L407.09,237.04 L407.37,237.04 L407.65,237.04 L407.93,211 L408.21,211 L408.49,211 L408.77,211 L409.05,237.04 L409.32,237.04 L409.6,211 L409.88,211 L410.16,237.04 L410.44,211 L410.72,211 L411,211 L411.28,237.04 L411.55,211 L411.83,211 L412.11,237.04 L412.39,211 L412.67,237.04 L412.95,211 L413.23,211 L413.51,237.04 L413.78,237.04 L414.06,237.04 L414.34,237.04 L414.62,237.04 L414.9,237.04 L415.18,237.04 L415.46,237.04 L415.74,237.04 L416.01,237.04 L416.29,237.04 L416.57,237.04 L416.85,237.04 L417.13,237.04 L417.41,237.04 L417.69,237.04 L417.97,237.04 L418.24,237.04 L418.52,237.04 L418.8,237.04 L419.08,237.04 L419.36,237.04 L419.64,237.04 L419.92,237.04 L420.2,237.04 L420.47,237.04 L420.75,237.04 L421.03,237.04 L421.31,237.04 L421.59,237.04 L421.87,237.04 L422.15,237.04 L422.42,211 L422.7,211 L422.98,211 L423.26,237.04 L423.54,237.04 L423.82,211 L424.1,237.04 L424.38,211 L424.65,211 L424.93,211 L425.21,237.04 L425.49,237.04 L425.77,237.04 L426.05,237.04 L426.33,237.04 L426.61,237.04 L426.88,237.04 L427.16,237.04 L427.44,237.04 L427.72,237.04 L428,237.04 L428.28,237.04 L428.56,237.04 L428.84,237.04 L429.11,237.04 L429.39,237.04 L429.67,237.04 L429.95,237.04 L430.23,237.04 L430.51,237.04 L430.79,237.04 L431.07,237.04 L431.34,237.04 L431.62,237.04 L431.9,237.04 L432.18,237.04 L432.46,237.04 L432.74,237.04 L433.02,237.04 L433.3,237.04 L433.57,237.04 L433.85,237.04 L434.13,237.04 L434.41,237.04 L434.69,237.04 L434.97,237.04 L435.25,237.04 L435.53,211 L435.8,237.04 L436.08,211 L436.36,237.04 L436.64,237.04 L436.92,237.04 L437.2,211 L437.48,237.04 L437.75,211 L438.03,211 L438.31,211 L438.59,237.04 L438.87,211 L439.15,211 L439.43,237.04 L439.71,211 L439.98,211 L440.26,237.04 L440.54,237.04 L440.82,237.04 L441.1,211 L441.38,211 L441.66,211 L441.94,211 L442.21,211 L442.49,211 L442.77,237.04 L443.05,237.04 L443.33,237.04 L443.61,237.04 L443.89,237.04 L444.17,237.04 L444.44,237.04 L444.72,237.04 L445,237.04 L445.28,237.04 L445.56,237.04 L445.84,237.04 L446.12,237.04 L446.4,237.04 L446.67,237.04 L446.95,237.04 L447.23,237.04 L447.51,237.04 L447.79,211 L448.07,237.04 L448.35,211 L448.63,211 L448.9,211 L449.18,211 L449.46,211 L449.74,237.04 L450.02,237.04 L450.3,237.04 L450.58,237.04 L450.85,237.04 L451.13,237.04 L451.41,237.04 L451.69,237.04 L451.97,211 L452.25,237.04 L452.53,237.04 L452.81,237.04 L453.08,237.04 L453.36,237.04 L453.64,237.04 L453.92,237.04 L454.2,237.04 L454.48,237.04 L454.76,237.04 L455.04,237.04 L455.31,237.04 L455.59,237.04 L455.87,237.04 L456.15,237.04 L456.43,237.04 L456.71,237.04 L456.99,237.04 L457.27,237.04 L457.54,237.04 L457.82,237.04 L458.1,237.04 L458.38,237.04 L458.66,237.04 L458.94,237.04 L459.22,237.04 L459.5,237.04 L459.77,237.04 L460.05,237.04 L460.33,237.04 L460.61,237.04 L460.89,237.04 L461.17,237.04 L461.45,211 L461.73,211 L462,237.04 L462.28,237.04 L462.56,237.04 L462.84,237.04 L463.12,211 L463.4,211 L463.68,211 L463.96,211 L464.23,211 L464.51,211 L464.79,211 L465.07,237.04 L465.35,211 L465.63,211 L465.91,237.04 L466.18,237.04 L466.46,237.04 L466.74,237.04 L467.02,237.04 L467.3,237.04 L467.58,237.04 L467.86,237.04 L468.14,211 L468.41,211 L468.69,211 L468.97,211 L469.25,237.04 L469.53,237.04 L469.81,237.04 L470.09,237.04 L470.37,237.04 L470.64,211 L470.92,211 L471.2,211 L471.48,211 L471.76,237.04 L472.04,237.04 L472.32,237.04 L472.6,211 L472.87,211 L473.15,237.04 L473.43,237.04 L473.71,237.04 L473.99,237.04 L474.27,237.04 L474.55,237.04 L474.83,237.04 L475.1,237.04 L475.38,237.04 L475.66,237.04 L475.94,237.04 L476.22,237.04 L476.5,237.04 L476.78,237.04 L477.06,237.04 L477.33,237.04 L477.61,237.04 L477.89,237.04 L478.17,211 L478.45,211 L478.73,211 L479.01,211 L479.29,237.04 L479.56,237.04 L479.84,237.04 L480.12,237.04 L480.4,237.04 L480.68,211 L480.96,237.04 L481.24,237.04 L481.51,211 L481.79,211 L482.07,211 L482.35,237.04 L482.63,211 L482.91,211 L483.19,237.04 L483.47,211 L483.74,211 L484.02,211 L484.3,237.04 L484.58,237.04 L484.86,237.04 L485.14,237.04 L485.42,211 L485.7,237.04 L485.97,237.04 L486.25,211 L486.53,211 L486.81,211 L487.09,237.04 L487.37,237.04 L487.65,237.04 L487.93,237.04 L488.2,211 L488.48,237.04 L488.76,237.04 L489.04,237.04 L489.32,237.04 L489.6,211 L489.88,237.04 L490.16,237.04 L490.43,211 L490.71,211 L490.99,237.04 L491.27,237.04 L491.55,237.04 L491.83,237.04 L492.11,237.04 L492.39,237.04 L492.66,237.04 L492.94,237.04 L493.22,237.04 L493.5,237.04 L493.78,237.04 L494.06,237.04 L494.34,237.04 L494.62,237.04 L494.89,237.04 L495.17,237.04 L495.45,237.04 L495.73,237.04 L496.01,237.04 L496.29,237.04 L496.57,237.04 L496.84,237.04 L497.12,237.04 L497.4,237.04 L497.68,237.04 L497.96,237.04 L498.24,237.04 L498.52,237.04 L498.8,237.04 L499.07,237.04 L499.35,237.04 L499.63,237.04 L499.91,237.04 L500.19,237.04 L500.47,237.04 L500.75,237.04 L501.03,237.04 L501.3,237.04 L501.58,237.04 L501.86,237.04 L502.14,237.04 L502.42,237.04 L502.7,237.04 L502.98,237.04 L503.26,237.04 L503.53,237.04 L503.81,237.04 L504.09,237.04 L504.37,237.04 L504.65,237.04 L504.93,237.04 L505.21,237.04 L505.49,237.04 L505.76,237.04 L506.04,237.04 L506.32,237.04 L506.6,237.04 L506.88,237.04 L507.16,237.04 L507.44,237.04 L507.72,237.04 L507.99,237.04 L508.27,237.04 L508.55,237.04 L508.83,237.04 L509.11,237.04 L509.39,237.04 L509.67,237.04 L509.95,237.04 L510.22,237.04 L510.5,237.04 L510.78,237.04 L511.06,237.04 L511.34,237.04 L511.62,237.04 L511.9,237.04 L512.17,237.04 L512.45,237.04 L512.73,237.04 L513.01,237.04 L513.29,237.04 L513.57,237.04 L513.85,237.04 L514.13,237.04 L514.4,237.04 L514.68,237.04 L514.96,237.04 L515.24,237.04 L515.52,237.04 L515.8,237.04 L516.08,237.04 L516.36,237.04 L516.63,237.04 L516.91,237.04 L517.19,237.04 L517.47,237.04 L517.75,237.04 L518.03,237.04 L518.31,237.04 L518.59,237.04 L518.86,237.04 L519.14,237.04 L519.42,237.04 L519.7,237.04 L519.98,237.04 L520.26,237.04 L520.54,237.04 L520.82,237.04 L521.09,237.04 L521.37,237.04 L521.65,237.04 L521.93,237.04 L522.21,237.04 L522.49,211 L522.77,211 L523.05,211 L523.32,211 L523.6,211 L523.88,211 L524.16,211 L524.44,237.04 L524.72,237.04 L525,211 L525.28,237.04 L525.55,237.04 L525.83,237.04 L526.11,237.04 L526.39,211 L526.67,211 L526.95,237.04 L527.23,237.04 L527.5,237.04 L527.78,237.04 L528.06,237.04 L528.34,237.04 L528.62,211 L528.9,237.04 L529.18,237.04 L529.46,237.04 L529.73,211 L530.01,237.04 L530.29,237.04 L530.57,237.04 L530.85,237.04 L531.13,237.04 L531.41,237.04 L531.69,237.04 L531.96,237.04 L532.24,237.04 L532.52,237.04 L532.8,237.04 L533.08,237.04 L533.36,237.04 L533.64,237.04 L533.92,237.04 L534.19,237.04 L534.47,237.04 L534.75,237.04 L535.03,237.04 L535.31,237.04 L535.59,237.04 L535.87,211 L536.15,211 L536.42,211 L536.7,211 L536.98,211 L537.26,211 L537.54,211 L537.82,237.04 L538.1,237.04 L538.38,237.04 L538.65,211 L538.93,211 L539.21,211 L539.49,211 L539.77,211 L540.05,211 L540.33,211 L540.61,237.04 L540.88,211 L541.16,237.04 L541.44,237.04 L541.72,237.04 L542,237.04 L542.28,237.04 L542.56,237.04 L542.83,237.04 L543.11,237.04 L543.39,237.04 L543.67,237.04 L543.95,237.04 L544.23,237.04 L544.51,237.04 L544.79,211 L545.06,211 L545.34,237.04 L545.62,237.04 L545.9,237.04 L546.18,211 L546.46,211 L546.74,237.04 L547.02,237.04 L547.29,211 L547.57,211 L547.85,237.04 L548.13,211 L548.41,237.04 L548.69,211 L548.97,211 L549.25,237.04 L549.52,237.04 L549.8,237.04 L550.08,237.04 L550.36,237.04 L550.64,237.04 L550.92,237.04 L551.2,237.04 L551.48,237.04 L551.75,237.04 L552.03,237.04 L552.31,237.04 L552.59,237.04 L552.87,237.04 L553.15,237.04 L553.43,237.04 L553.71,237.04 L553.98,237.04 L554.26,237.04 L554.54,237.04 L554.82,237.04 L555.1,237.04 L555.38,211 L555.66,211 L555.94,211 L556.21,237.04 L556.49,237.04 L556.77,211 L557.05,211 L557.33,237.04 L557.61,237.04 L557.89,237.04 L558.16,237.04 L558.44,237.04 L558.72,237.04 L559,237.04 L559.28,237.04 L559.56,237.04 L559.84,211 L560.12,211 L560.39,237.04 L560.67,237.04 L560.95,237.04 L561.23,237.04 L561.51,237.04 L561.79,237.04 L562.07,237.04 L562.35,211 L562.62,237.04 L562.9,237.04 L563.18,237.04 L563.46,237.04 L563.74,237.04 L564.02,237.04 L564.3,237.04 L564.58,237.04 L564.85,237.04 L565.13,237.04 L565.41,237.04 L565.69,237.04 L565.97,237.04 L566.25,211 L566.53,211 L566.81,237.04 L567.08,237.04 L567.36,237.04 L567.64,237.04 L567.92,211 L568.2,211 L568.48,211 L568.76,211 L569.04,211 L569.31,211 L569.59,237.04 L569.87,237.04 L570.15,237.04 L570.43,237.04 L570.71,237.04 L570.99,237.04 L571.27,211 L571.54,211 L571.82,211 L572.1,237.04 L572.38,211 L572.66,211 L572.94,211 L573.22,237.04 L573.49,237.04 L573.77,237.04 L574.05,211 L574.33,237.04 L574.61,237.04 L574.89,237.04 L575.17,211 L575.45,211 L575.72,211 L576,237.04 L576.28,237.04 L576.56,237.04 L576.84,237.04 L577.12,237.04 L577.4,237.04 L577.68,237.04 L577.95,237.04 L578.23,237.04 L578.51,237.04 L578.79,237.04 L579.07,237.04 L579.35,211 L579.63,211 L579.91,211 L580.18,237.04 L580.46,211 L580.74,211 L581.02,237.04 L581.3,237.04 L581.58,237.04 L581.86,211 L582.14,237.04 L582.41,237.04 L582.69,211 L582.97,237.04 L583.25,211 L583.53,237.04 L583.81,237.04 L584.09,237.04 L584.37,237.04 L584.64,237.04 L584.92,237.04 L585.2,237.04 L585.48,237.04 L585.76,211 L586.04,237.04 L586.32,237.04 L586.6,237.04 L586.87,237.04 L587.15,237.04 L587.43,237.04 L587.71,237.04 L587.99,237.04 L588.27,237.04 L588.55,237.04 L588.82,237.04 L589.1,237.04 L589.38,237.04 L589.66,211 L589.94,211 L590.22,211 L590.5,237.04 L590.78,211 L591.05,211 L591.33,211 L591.61,237.04 L591.89,237.04 L592.17,237.04 L592.45,237.04 L592.73,237.04 L593.01,237.04 L593.28,237.04 L593.56,237.04 L593.84,237.04 L594.12,237.04 L594.4,237.04 L594.68,211 L594.96,211 L595.24,237.04 L595.51,211 L595.79,237.04 L596.07,237.04 L596.35,237.04 L596.63,237.04 L596.91,237.04 L597.19,237.04 L597.47,237.04 L597.74,237.04 L598.02,237.04 L598.3,211 L598.58,237.04 L598.86,237.04 L599.14,211 L599.42,211 L599.7,211 L599.97,237.04 L600.25,237.04 L600.53,237.04 L600.81,211 L601.09,211 L601.37,211 L601.65,211 L601.93,237.04 L602.2,237.04 L602.48,211 L602.76,211 L603.04,237.04 L603.32,237.04 L603.6,237.04 L603.88,237.04 L604.15,237.04 L604.43,237.04 L604.71,237.04 L604.99,237.04 L605.27,237.04 L605.55,237.04 L605.83,237.04 L606.11,237.04 L606.38,237.04 L606.66,237.04 L606.94,237.04 L607.22,237.04 L607.5,237.04 L607.78,211 L608.06,211 L608.34,211 L608.61,237.04 L608.89,237.04 L609.17,211 L609.45,211 L609.73,211 L610.01,237.04 L610.29,237.04 L610.57,237.04 L610.84,237.04 L611.12,237.04 L611.4,237.04 L611.68,237.04 L611.96,237.04 L612.24,237.04 L612.52,237.04 L612.8,237.04 L613.07,237.04 L613.35,237.04 L613.63,237.04 L613.91,211 L614.19,211 L614.47,211 L614.75,211 L615.03,237.04 L615.3,237.04 L615.58,237.04 L615.86,211 L616.14,211 L616.42,211 L616.7,237.04 L616.98,211 L617.26,211 L617.53,237.04 L617.81,237.04 L618.09,237.04 L618.37,237.04 L618.65,211 L618.93,211 L619.21,211 L619.48,211 L619.76,237.04 L620.04,211 L620.32,211 L620.6,211 L620.88,237.04 L621.16,237.04 L621.44,237.04 L621.71,237.04 L621.99,237.04 L622.27,211 L622.55,211 L622.83,237.04 L623.11,211 L623.39,211 L623.67,211 L623.94,211 L624.22,237.04 L624.5,237.04 L624.78,237.04 L625.06,237.04 L625.34,237.04 L625.62,237.04 L625.9,211 L626.17,237.04 L626.45,237.04 L626.73,237.04 L627.01,237.04 L627.29,237.04 L627.57,237.04 L627.85,237.04 L628.13,237.04 L628.4,237.04 L628.68,237.04 L628.96,237.04 L629.24,237.04 L629.52,237.04 L629.8,237.04 L630.08,237.04 L630.36,237.04 L630.63,237.04 L630.91,237.04 L631.19,237.04 L631.47,237.04 L631.75,237.04 L632.03,237.04 L632.31,237.04 L632.59,237.04 L632.86,237.04 L633.14,237.04 L633.42,237.04 L633.7,237.04 L633.98,237.04 L634.26,237.04 L634.54,237.04 L634.81,237.04 L635.09,237.04 L635.37,237.04 L635.65,237.04 L635.93,237.04 L636.21,211 L636.49,211 L636.77,237.04 L637.04,211 L637.32,211 L637.6,237.04 L637.88,237.04 L638.16,237.04 L638.44,211 L638.72,237.04 L639,237.04 L639.27,237.04 L639.55,237.04 L639.83,237.04 L640.11,237.04 L640.39,237.04 L640.67,237.04 L640.95,237.04 L641.23,237.04 L641.5,211 L641.78,237.04 L642.06,211 L642.34,211 L642.62,211 L642.9,211 L643.18,237.04 L643.46,237.04 L643.73,237.04 L644.01,211 L644.29,211 L644.57,211 L644.85,211 L645.13,237.04 L645.41,237.04 L645.69,237.04 L645.96,237.04 L646.24,237.04 L646.52,237.04 L646.8,237.04 L647.08,237.04 L647.36,211 L647.64,211 L647.92,211 L648.19,237.04 L648.47,237.04 L648.75,237.04 L649.03,237.04 L649.31,211 L649.59,211 L649.87,211 L650.14,237.04 L650.42,211 L650.7,237.04 L650.98,237.04 L651.26,237.04 L651.54,237.04 L651.82,237.04 L652.1,237.04 L652.37,237.04 L652.65,237.04 L652.93,237.04 L653.21,237.04 L653.49,237.04 L653.77,237.04 L654.05,237.04 L654.33,237.04 L654.6,237.04 L654.88,237.04 L655.16,237.04 L655.44,237.04 L655.72,237.04 L656,237.04 L656.28,237.04 L656.56,237.04 L656.83,211 L657.11,237.04 L657.39,237.04 L657.67,237.04 L657.95,237.04 L658.23,237.04 L658.51,237.04 L658.79,237.04 L659.06,211 L659.34,211 L659.62,211 L659.9,237.04 L660.18,237.04 L660.46,237.04 L660.74,237.04 L661.02,237.04 L661.29,237.04 L661.57,237.04 L661.85,237.04 L662.13,237.04 L662.41,237.04 L662.69,237.04 L662.97,237.04 L663.25,237.04 L663.52,237.04 L663.8,237.04 L664.08,237.04 L664.36,237.04 L664.64,237.04 L664.92,237.04 L665.2,237.04 L665.47,237.04 L665.75,237.04 L666.03,237.04 L666.31,237.04 L666.59,237.04 L666.87,237.04 L667.15,237.04 L667.43,237.04 L667.7,237.04 L667.98,237.04 L668.26,237.04 L668.54,237.04 L668.82,237.04 L669.1,211 L669.38,211 L669.66,211 L669.93,237.04 L670.21,237.04 L670.49,237.04 L670.77,237.04 L671.05,211 L671.33,211 L671.61,211 L671.89,237.04 L672.16,211 L672.44,211 L672.72,211 L673,237.04 L673.28,211 L673.56,211 L673.84,237.04 L674.12,237.04 L674.39,237.04 L674.67,237.04 L674.95,237.04 L675.23,211 L675.51,211 L675.79,211 L676.07,237.04 L676.35,237.04 L676.62,237.04 L676.9,237.04 L677.18,237.04 L677.46,237.04 L677.74,237.04 L678.02,237.04 L678.3,237.04 L678.58,237.04 L678.85,237.04 L679.13,237.04 L679.41,237.04 L679.69,237.04 L679.97,237.04 L680.25,237.04 L680.53,237.04 L680.8,237.04 L681.08,237.04 L681.36,237.04 L681.64,237.04 L681.92,237.04 L682.2,237.04 L682.48,237.04 L682.76,237.04 L683.03,237.04 L683.31,237.04 L683.59,237.04 L683.87,237.04 L684.15,237.04 L684.43,237.04 L684.71,237.04 L684.99,211 L685.26,237.04 L685.54,237.04 L685.82,237.04 L686.1,237.04 L686.38,237.04 L686.66,237.04 L686.94,237.04 L687.22,237.04 L687.49,237.04 L687.77,237.04 L688.05,237.04 L688.33,237.04 L688.61,237.04 L688.89,237.04 L689.17,237.04 L689.45,237.04 L689.72,237.04 L690,237.04 L690.28,237.04 L690.56,237.04 L690.84,237.04 L691.12,211 L691.4,211 L691.68,211 L691.95,211 L692.23,237.04 L692.51,211 L692.79,211 L693.07,237.04 L693.35,237.04 L693.63,237.04 L693.91,211 L694.18,237.04 L694.46,237.04 L694.74,211 L695.02,211 L695.3,211 L695.58,211 L695.86,211 L696.13,237.04 L696.41,237.04 L696.69,237.04 L696.97,211 L697.25,211 L697.53,237.04 L697.81,237.04 L698.09,237.04 L698.36,237.04 L698.64,211 L698.92,211 L699.2,211 L699.48,211 L699.76,237.04 L700.04,211 L700.32,211 L700.59,211 L700.87,237.04 L701.15,237.04 L701.43,237.04 L701.71,211 L701.99,237.04 L702.27,237.04 L702.55,211 L702.82,211 L703.1,237.04 L703.38,237.04 L703.66,237.04 L703.94,237.04 L704.22,211 L704.5,237.04 L704.78,237.04 L705.05,237.04 L705.33,237.04 L705.61,237.04 L705.89,237.04 L706.17,237.04 L706.45,237.04 L706.73,237.04 L707.01,237.04 L707.28,237.04 L707.56,237.04 L707.84,237.04 L708.12,237.04 L708.4,237.04 L708.68,237.04 L708.96,237.04 L709.24,237.04 L709.51,237.04 L709.79,237.04 L710.07,237.04" fill="none" stroke="#b84ff0" stroke-width="0.55"/>
<path d="M160.7,239.52 L160.98,239.52 L161.26,214.72 L161.54,214.72 L161.81,214.72 L162.09,214.72 L162.37,239.52 L162.65,239.52 L162.93,214.72 L163.21,239.52 L163.49,239.52 L163.77,239.52 L164.04,239.52 L164.32,214.72 L164.6,214.72 L164.88,239.52 L165.16,239.52 L165.44,214.72 L165.72,239.52 L166,239.52 L166.27,239.52 L166.55,214.72 L166.83,214.72 L167.11,239.52 L167.39,239.52 L167.67,239.52 L167.95,239.52 L168.23,214.72 L168.5,239.52 L168.78,239.52 L169.06,239.52 L169.34,239.52 L169.62,239.52 L169.9,214.72 L170.18,214.72 L170.46,214.72 L170.73,214.72 L171.01,239.52 L171.29,239.52 L171.57,239.52 L171.85,239.52 L172.13,239.52 L172.41,239.52 L172.69,239.52 L172.96,239.52 L173.24,239.52 L173.52,239.52 L173.8,239.52 L174.08,239.52 L174.36,239.52 L174.64,239.52 L174.92,239.52 L175.19,239.52 L175.47,239.52 L175.75,239.52 L176.03,239.52 L176.31,239.52 L176.59,239.52 L176.87,239.52 L177.14,239.52 L177.42,239.52 L177.7,239.52 L177.98,239.52 L178.26,239.52 L178.54,239.52 L178.82,239.52 L179.1,239.52 L179.37,239.52 L179.65,239.52 L179.93,239.52 L180.21,239.52 L180.49,239.52 L180.77,239.52 L181.05,239.52 L181.33,239.52 L181.6,239.52 L181.88,239.52 L182.16,239.52 L182.44,239.52 L182.72,239.52 L183,239.52 L183.28,239.52 L183.56,239.52 L183.83,239.52 L184.11,239.52 L184.39,239.52 L184.67,239.52 L184.95,214.72 L185.23,214.72 L185.51,214.72 L185.79,214.72 L186.06,239.52 L186.34,239.52 L186.62,214.72 L186.9,214.72 L187.18,239.52 L187.46,239.52 L187.74,214.72 L188.02,239.52 L188.29,239.52 L188.57,239.52 L188.85,239.52 L189.13,239.52 L189.41,239.52 L189.69,239.52 L189.97,239.52 L190.25,239.52 L190.52,239.52 L190.8,239.52 L191.08,239.52 L191.36,239.52 L191.64,239.52 L191.92,239.52 L192.2,239.52 L192.47,239.52 L192.75,239.52 L193.03,239.52 L193.31,239.52 L193.59,239.52 L193.87,239.52 L194.15,239.52 L194.43,239.52 L194.7,239.52 L194.98,239.52 L195.26,239.52 L195.54,239.52 L195.82,239.52 L196.1,239.52 L196.38,239.52 L196.66,239.52 L196.93,214.72 L197.21,239.52 L197.49,239.52 L197.77,214.72 L198.05,214.72 L198.33,239.52 L198.61,214.72 L198.89,214.72 L199.16,214.72 L199.44,214.72 L199.72,214.72 L200,214.72 L200.28,214.72 L200.56,214.72 L200.84,239.52 L201.12,239.52 L201.39,239.52 L201.67,214.72 L201.95,214.72 L202.23,214.72 L202.51,239.52 L202.79,239.52 L203.07,214.72 L203.35,214.72 L203.62,214.72 L203.9,239.52 L204.18,239.52 L204.46,239.52 L204.74,239.52 L205.02,239.52 L205.3,239.52 L205.58,239.52 L205.85,239.52 L206.13,239.52 L206.41,239.52 L206.69,239.52 L206.97,239.52 L207.25,239.52 L207.53,239.52 L207.8,239.52 L208.08,239.52 L208.36,239.52 L208.64,239.52 L208.92,239.52 L209.2,239.52 L209.48,239.52 L209.76,239.52 L210.03,239.52 L210.31,239.52 L210.59,239.52 L210.87,239.52 L211.15,239.52 L211.43,239.52 L211.71,239.52 L211.99,239.52 L212.26,239.52 L212.54,239.52 L212.82,239.52 L213.1,239.52 L213.38,214.72 L213.66,239.52 L213.94,239.52 L214.22,239.52 L214.49,239.52 L214.77,239.52 L215.05,239.52 L215.33,239.52 L215.61,239.52 L215.89,214.72 L216.17,239.52 L216.45,239.52 L216.72,239.52 L217,214.72 L217.28,214.72 L217.56,214.72 L217.84,239.52 L218.12,214.72 L218.4,214.72 L218.68,214.72 L218.95,239.52 L219.23,239.52 L219.51,214.72 L219.79,214.72 L220.07,214.72 L220.35,239.52 L220.63,239.52 L220.91,239.52 L221.18,239.52 L221.46,239.52 L221.74,239.52 L222.02,239.52 L222.3,239.52 L222.58,239.52 L222.86,239.52 L223.13,239.52 L223.41,239.52 L223.69,239.52 L223.97,239.52 L224.25,239.52 L224.53,239.52 L224.81,239.52 L225.09,239.52 L225.36,239.52 L225.64,239.52 L225.92,239.52 L226.2,239.52 L226.48,239.52 L226.76,239.52 L227.04,239.52 L227.32,204.8 L227.59,214.72 L227.87,214.72 L228.15,239.52 L228.43,239.52 L228.71,214.72 L228.99,239.52 L229.27,239.52 L229.55,214.72 L229.82,239.52 L230.1,239.52 L230.38,214.72 L230.66,239.52 L230.94,214.72 L231.22,214.72 L231.5,214.72 L231.78,239.52 L232.05,239.52 L232.33,239.52 L232.61,214.72 L232.89,214.72 L233.17,239.52 L233.45,239.52 L233.73,239.52 L234.01,239.52 L234.28,214.72 L234.56,239.52 L234.84,239.52 L235.12,239.52 L235.4,239.52 L235.68,239.52 L235.96,239.52 L236.24,214.72 L236.51,239.52 L236.79,239.52 L237.07,214.72 L237.35,239.52 L237.63,239.52 L237.91,239.52 L238.19,214.72 L238.46,214.72 L238.74,214.72 L239.02,214.72 L239.3,239.52 L239.58,239.52 L239.86,239.52 L240.14,239.52 L240.42,239.52 L240.69,239.52 L240.97,239.52 L241.25,239.52 L241.53,214.72 L241.81,239.52 L242.09,214.72 L242.37,214.72 L242.65,214.72 L242.92,214.72 L243.2,214.72 L243.48,239.52 L243.76,239.52 L244.04,239.52 L244.32,239.52 L244.6,239.52 L244.88,239.52 L245.15,239.52 L245.43,214.72 L245.71,239.52 L245.99,239.52 L246.27,239.52 L246.55,214.72 L246.83,239.52 L247.11,239.52 L247.38,214.72 L247.66,239.52 L247.94,239.52 L248.22,239.52 L248.5,239.52 L248.78,239.52 L249.06,239.52 L249.34,239.52 L249.61,239.52 L249.89,239.52 L250.17,239.52 L250.45,239.52 L250.73,239.52 L251.01,239.52 L251.29,239.52 L251.57,239.52 L251.84,239.52 L252.12,239.52 L252.4,239.52 L252.68,239.52 L252.96,239.52 L253.24,239.52 L253.52,239.52 L253.79,239.52 L254.07,239.52 L254.35,239.52 L254.63,239.52 L254.91,239.52 L255.19,239.52 L255.47,239.52 L255.75,239.52 L256.02,239.52 L256.3,239.52 L256.58,239.52 L256.86,239.52 L257.14,239.52 L257.42,239.52 L257.7,239.52 L257.98,214.72 L258.25,239.52 L258.53,239.52 L258.81,214.72 L259.09,214.72 L259.37,214.72 L259.65,214.72 L259.93,214.72 L260.21,239.52 L260.48,239.52 L260.76,239.52 L261.04,239.52 L261.32,214.72 L261.6,214.72 L261.88,214.72 L262.16,214.72 L262.44,214.72 L262.71,214.72 L262.99,214.72 L263.27,214.72 L263.55,239.52 L263.83,239.52 L264.11,239.52 L264.39,239.52 L264.67,239.52 L264.94,239.52 L265.22,239.52 L265.5,239.52 L265.78,239.52 L266.06,214.72 L266.34,239.52 L266.62,239.52 L266.9,239.52 L267.17,239.52 L267.45,214.72 L267.73,239.52 L268.01,214.72 L268.29,214.72 L268.57,214.72 L268.85,214.72 L269.12,239.52 L269.4,239.52 L269.68,239.52 L269.96,239.52 L270.24,214.72 L270.52,239.52 L270.8,239.52 L271.08,239.52 L271.35,239.52 L271.63,239.52 L271.91,239.52 L272.19,239.52 L272.47,214.72 L272.75,214.72 L273.03,239.52 L273.31,239.52 L273.58,214.72 L273.86,239.52 L274.14,239.52 L274.42,239.52 L274.7,239.52 L274.98,214.72 L275.26,239.52 L275.54,214.72 L275.81,214.72 L276.09,239.52 L276.37,239.52 L276.65,239.52 L276.93,239.52 L277.21,239.52 L277.49,239.52 L277.77,239.52 L278.04,214.72 L278.32,214.72 L278.6,214.72 L278.88,214.72 L279.16,214.72 L279.44,214.72 L279.72,239.52 L280,239.52 L280.27,239.52 L280.55,239.52 L280.83,239.52 L281.11,239.52 L281.39,239.52 L281.67,239.52 L281.95,239.52 L282.23,214.72 L282.5,214.72 L282.78,214.72 L283.06,214.72 L283.34,214.72 L283.62,214.72 L283.9,214.72 L284.18,214.72 L284.45,214.72 L284.73,239.52 L285.01,239.52 L285.29,239.52 L285.57,239.52 L285.85,239.52 L286.13,239.52 L286.41,239.52 L286.68,214.72 L286.96,239.52 L287.24,239.52 L287.52,239.52 L287.8,239.52 L288.08,239.52 L288.36,239.52 L288.64,204.8 L288.91,239.52 L289.19,239.52 L289.47,239.52 L289.75,239.52 L290.03,239.52 L290.31,239.52 L290.59,239.52 L290.87,239.52 L291.14,239.52 L291.42,239.52 L291.7,239.52 L291.98,239.52 L292.26,214.72 L292.54,214.72 L292.82,239.52 L293.1,239.52 L293.37,214.72 L293.65,214.72 L293.93,239.52 L294.21,214.72 L294.49,214.72 L294.77,239.52 L295.05,239.52 L295.33,214.72 L295.6,239.52 L295.88,239.52 L296.16,239.52 L296.44,239.52 L296.72,239.52 L297,239.52 L297.28,239.52 L297.56,239.52 L297.83,214.72 L298.11,239.52 L298.39,239.52 L298.67,239.52 L298.95,239.52 L299.23,239.52 L299.51,239.52 L299.78,239.52 L300.06,239.52 L300.34,239.52 L300.62,239.52 L300.9,239.52 L301.18,239.52 L301.46,239.52 L301.74,239.52 L302.01,214.72 L302.29,214.72 L302.57,214.72 L302.85,214.72 L303.13,239.52 L303.41,239.52 L303.69,214.72 L303.97,239.52 L304.24,239.52 L304.52,214.72 L304.8,214.72 L305.08,214.72 L305.36,214.72 L305.64,214.72 L305.92,239.52 L306.2,239.52 L306.47,239.52 L306.75,214.72 L307.03,214.72 L307.31,214.72 L307.59,214.72 L307.87,239.52 L308.15,214.72 L308.43,214.72 L308.7,239.52 L308.98,239.52 L309.26,239.52 L309.54,239.52 L309.82,214.72 L310.1,214.72 L310.38,214.72 L310.66,214.72 L310.93,214.72 L311.21,214.72 L311.49,214.72 L311.77,239.52 L312.05,239.52 L312.33,239.52 L312.61,239.52 L312.89,239.52 L313.16,239.52 L313.44,239.52 L313.72,239.52 L314,239.52 L314.28,239.52 L314.56,239.52 L314.84,214.72 L315.11,239.52 L315.39,239.52 L315.67,239.52 L315.95,239.52 L316.23,239.52 L316.51,239.52 L316.79,239.52 L317.07,239.52 L317.34,239.52 L317.62,239.52 L317.9,214.72 L318.18,214.72 L318.46,214.72 L318.74,214.72 L319.02,214.72 L319.3,214.72 L319.57,239.52 L319.85,214.72 L320.13,214.72 L320.41,214.72 L320.69,214.72 L320.97,214.72 L321.25,239.52 L321.53,239.52 L321.8,239.52 L322.08,239.52 L322.36,239.52 L322.64,239.52 L322.92,239.52 L323.2,239.52 L323.48,239.52 L323.76,239.52 L324.03,239.52 L324.31,239.52 L324.59,239.52 L324.87,239.52 L325.15,239.52 L325.43,239.52 L325.71,239.52 L325.99,239.52 L326.26,239.52 L326.54,239.52 L326.82,239.52 L327.1,239.52 L327.38,239.52 L327.66,239.52 L327.94,239.52 L328.22,239.52 L328.49,239.52 L328.77,239.52 L329.05,239.52 L329.33,239.52 L329.61,214.72 L329.89,214.72 L330.17,239.52 L330.44,239.52 L330.72,214.72 L331,214.72 L331.28,239.52 L331.56,214.72 L331.84,214.72 L332.12,214.72 L332.4,214.72 L332.67,214.72 L332.95,214.72 L333.23,239.52 L333.51,239.52 L333.79,239.52 L334.07,239.52 L334.35,239.52 L334.63,239.52 L334.9,239.52 L335.18,239.52 L335.46,239.52 L335.74,239.52 L336.02,239.52 L336.3,239.52 L336.58,239.52 L336.86,239.52 L337.13,239.52 L337.41,214.72 L337.69,214.72 L337.97,239.52 L338.25,214.72 L338.53,214.72 L338.81,214.72 L339.09,239.52 L339.36,214.72 L339.64,214.72 L339.92,214.72 L340.2,239.52 L340.48,239.52 L340.76,239.52 L341.04,239.52 L341.32,239.52 L341.59,239.52 L341.87,239.52 L342.15,239.52 L342.43,239.52 L342.71,239.52 L342.99,239.52 L343.27,239.52 L343.55,239.52 L343.82,213.48 L344.1,239.52 L344.38,239.52 L344.66,239.52 L344.94,213.48 L345.22,213.48 L345.5,239.52 L345.77,239.52 L346.05,239.52 L346.33,239.52 L346.61,239.52 L346.89,239.52 L347.17,213.48 L347.45,213.48 L347.73,213.48 L348,239.52 L348.28,239.52 L348.56,213.48 L348.84,213.48 L349.12,239.52 L349.4,213.48 L349.68,239.52 L349.96,213.48 L350.23,213.48 L350.51,213.48 L350.79,213.48 L351.07,239.52 L351.35,239.52 L351.63,239.52 L351.91,239.52 L352.19,239.52 L352.46,239.52 L352.74,239.52 L353.02,239.52 L353.3,239.52 L353.58,239.52 L353.86,239.52 L354.14,239.52 L354.42,239.52 L354.69,239.52 L354.97,239.52 L355.25,239.52 L355.53,239.52 L355.81,239.52 L356.09,239.52 L356.37,239.52 L356.65,239.52 L356.92,239.52 L357.2,239.52 L357.48,239.52 L357.76,239.52 L358.04,239.52 L358.32,239.52 L358.6,239.52 L358.88,239.52 L359.15,239.52 L359.43,239.52 L359.71,239.52 L359.99,239.52 L360.27,239.52 L360.55,239.52 L360.83,239.52 L361.1,239.52 L361.38,239.52 L361.66,239.52 L361.94,239.52 L362.22,214.72 L362.5,239.52 L362.78,239.52 L363.06,214.72 L363.33,214.72 L363.61,214.72 L363.89,239.52 L364.17,214.72 L364.45,214.72 L364.73,214.72 L365.01,214.72 L365.29,214.72 L365.56,214.72 L365.84,214.72 L366.12,239.52 L366.4,239.52 L366.68,239.52 L366.96,239.52 L367.24,239.52 L367.52,214.72 L367.79,214.72 L368.07,214.72 L368.35,214.72 L368.63,239.52 L368.91,239.52 L369.19,214.72 L369.47,214.72 L369.75,214.72 L370.02,214.72 L370.3,214.72 L370.58,214.72 L370.86,214.72 L371.14,239.52 L371.42,239.52 L371.7,239.52 L371.98,239.52 L372.25,239.52 L372.53,239.52 L372.81,214.72 L373.09,214.72 L373.37,239.52 L373.65,239.52 L373.93,239.52 L374.21,239.52 L374.48,239.52 L374.76,239.52 L375.04,239.52 L375.32,239.52 L375.6,239.52 L375.88,239.52 L376.16,239.52 L376.43,239.52 L376.71,239.52 L376.99,239.52 L377.27,239.52 L377.55,239.52 L377.83,239.52 L378.11,239.52 L378.39,239.52 L378.66,239.52 L378.94,239.52 L379.22,239.52 L379.5,239.52 L379.78,239.52 L380.06,239.52 L380.34,239.52 L380.62,239.52 L380.89,239.52 L381.17,239.52 L381.45,204.8 L381.73,239.52 L382.01,239.52 L382.29,239.52 L382.57,239.52 L382.85,239.52 L383.12,239.52 L383.4,239.52 L383.68,239.52 L383.96,239.52 L384.24,239.52 L384.52,239.52 L384.8,239.52 L385.08,239.52 L385.35,239.52 L385.63,239.52 L385.91,239.52 L386.19,239.52 L386.47,239.52 L386.75,239.52 L387.03,239.52 L387.31,239.52 L387.58,239.52 L387.86,239.52 L388.14,239.52 L388.42,239.52 L388.7,239.52 L388.98,239.52 L389.26,239.52 L389.54,239.52 L389.81,214.72 L390.09,214.72 L390.37,214.72 L390.65,214.72 L390.93,214.72 L391.21,214.72 L391.49,239.52 L391.76,239.52 L392.04,239.52 L392.32,239.52 L392.6,214.72 L392.88,214.72 L393.16,214.72 L393.44,214.72 L393.72,214.72 L393.99,239.52 L394.27,214.72 L394.55,214.72 L394.83,239.52 L395.11,239.52 L395.39,214.72 L395.67,214.72 L395.95,214.72 L396.22,214.72 L396.5,214.72 L396.78,214.72 L397.06,214.72 L397.34,214.72 L397.62,214.72 L397.9,214.72 L398.18,239.52 L398.45,239.52 L398.73,239.52 L399.01,239.52 L399.29,239.52 L399.57,239.52 L399.85,239.52 L400.13,239.52 L400.41,239.52 L400.68,239.52 L400.96,239.52 L401.24,239.52 L401.52,239.52 L401.8,239.52 L402.08,239.52 L402.36,239.52 L402.64,239.52 L402.91,239.52 L403.19,239.52 L403.47,239.52 L403.75,239.52 L404.03,239.52 L404.31,239.52 L404.59,239.52 L404.87,239.52 L405.14,239.52 L405.42,239.52 L405.7,239.52 L405.98,239.52 L406.26,239.52 L406.54,239.52 L406.82,239.52 L407.09,239.52 L407.37,239.52 L407.65,214.72 L407.93,214.72 L408.21,214.72 L408.49,214.72 L408.77,239.52 L409.05,239.52 L409.32,239.52 L409.6,239.52 L409.88,239.52 L410.16,239.52 L410.44,239.52 L410.72,239.52 L411,239.52 L411.28,214.72 L411.55,214.72 L411.83,239.52 L412.11,239.52 L412.39,214.72 L412.67,214.72 L412.95,214.72 L413.23,239.52 L413.51,239.52 L413.78,214.72 L414.06,239.52 L414.34,214.72 L414.62,214.72 L414.9,214.72 L415.18,239.52 L415.46,239.52 L415.74,239.52 L416.01,239.52 L416.29,239.52 L416.57,239.52 L416.85,239.52 L417.13,239.52 L417.41,239.52 L417.69,239.52 L417.97,239.52 L418.24,239.52 L418.52,239.52 L418.8,239.52 L419.08,239.52 L419.36,239.52 L419.64,239.52 L419.92,239.52 L420.2,239.52 L420.47,239.52 L420.75,239.52 L421.03,214.72 L421.31,214.72 L421.59,239.52 L421.87,239.52 L422.15,239.52 L422.42,214.72 L422.7,214.72 L422.98,214.72 L423.26,214.72 L423.54,239.52 L423.82,239.52 L424.1,239.52 L424.38,239.52 L424.65,239.52 L424.93,239.52 L425.21,239.52 L425.49,239.52 L425.77,239.52 L426.05,239.52 L426.33,239.52 L426.61,239.52 L426.88,239.52 L427.16,239.52 L427.44,239.52 L427.72,239.52 L428,239.52 L428.28,239.52 L428.56,239.52 L428.84,239.52 L429.11,239.52 L429.39,239.52 L429.67,239.52 L429.95,239.52 L430.23,239.52 L430.51,239.52 L430.79,239.52 L431.07,239.52 L431.34,239.52 L431.62,239.52 L431.9,239.52 L432.18,239.52 L432.46,239.52 L432.74,239.52 L433.02,239.52 L433.3,239.52 L433.57,239.52 L433.85,239.52 L434.13,239.52 L434.41,239.52 L434.69,214.72 L434.97,214.72 L435.25,214.72 L435.53,214.72 L435.8,214.72 L436.08,214.72 L436.36,239.52 L436.64,214.72 L436.92,214.72 L437.2,239.52 L437.48,239.52 L437.75,239.52 L438.03,214.72 L438.31,214.72 L438.59,214.72 L438.87,214.72 L439.15,214.72 L439.43,214.72 L439.71,214.72 L439.98,214.72 L440.26,239.52 L440.54,239.52 L440.82,239.52 L441.1,214.72 L441.38,239.52 L441.66,239.52 L441.94,239.52 L442.21,239.52 L442.49,239.52 L442.77,239.52 L443.05,239.52 L443.33,239.52 L443.61,214.72 L443.89,214.72 L444.17,214.72 L444.44,214.72 L444.72,239.52 L445,239.52 L445.28,239.52 L445.56,239.52 L445.84,239.52 L446.12,239.52 L446.4,239.52 L446.67,239.52 L446.95,239.52 L447.23,239.52 L447.51,239.52 L447.79,239.52 L448.07,239.52 L448.35,239.52 L448.63,239.52 L448.9,239.52 L449.18,239.52 L449.46,239.52 L449.74,239.52 L450.02,239.52 L450.3,239.52 L450.58,239.52 L450.85,239.52 L451.13,239.52 L451.41,239.52 L451.69,239.52 L451.97,239.52 L452.25,239.52 L452.53,214.72 L452.81,214.72 L453.08,214.72 L453.36,214.72 L453.64,214.72 L453.92,214.72 L454.2,214.72 L454.48,214.72 L454.76,214.72 L455.04,214.72 L455.31,214.72 L455.59,214.72 L455.87,214.72 L456.15,239.52 L456.43,239.52 L456.71,239.52 L456.99,239.52 L457.27,239.52 L457.54,239.52 L457.82,239.52 L458.1,239.52 L458.38,214.72 L458.66,214.72 L458.94,239.52 L459.22,239.52 L459.5,239.52 L459.77,214.72 L460.05,214.72 L460.33,214.72 L460.61,239.52 L460.89,239.52 L461.17,239.52 L461.45,214.72 L461.73,214.72 L462,214.72 L462.28,214.72 L462.56,214.72 L462.84,214.72 L463.12,214.72 L463.4,214.72 L463.68,214.72 L463.96,239.52 L464.23,239.52 L464.51,214.72 L464.79,214.72 L465.07,214.72 L465.35,239.52 L465.63,214.72 L465.91,239.52 L466.18,214.72 L466.46,239.52 L466.74,239.52 L467.02,239.52 L467.3,239.52 L467.58,214.72 L467.86,239.52 L468.14,239.52 L468.41,239.52 L468.69,239.52 L468.97,214.72 L469.25,214.72 L469.53,214.72 L469.81,214.72 L470.09,214.72 L470.37,214.72 L470.64,214.72 L470.92,239.52 L471.2,239.52 L471.48,239.52 L471.76,239.52 L472.04,239.52 L472.32,214.72 L472.6,214.72 L472.87,239.52 L473.15,239.52 L473.43,239.52 L473.71,214.72 L473.99,239.52 L474.27,239.52 L474.55,239.52 L474.83,239.52 L475.1,239.52 L475.38,239.52 L475.66,239.52 L475.94,239.52 L476.22,239.52 L476.5,239.52 L476.78,239.52 L477.06,239.52 L477.33,239.52 L477.61,239.52 L477.89,214.72 L478.17,239.52 L478.45,239.52 L478.73,239.52 L479.01,214.72 L479.29,214.72 L479.56,214.72 L479.84,239.52 L480.12,239.52 L480.4,239.52 L480.68,214.72 L480.96,214.72 L481.24,214.72 L481.51,214.72 L481.79,239.52 L482.07,239.52 L482.35,239.52 L482.63,239.52 L482.91,214.72 L483.19,214.72 L483.47,214.72 L483.74,214.72 L484.02,214.72 L484.3,239.52 L484.58,239.52 L484.86,214.72 L485.14,214.72 L485.42,239.52 L485.7,239.52 L485.97,239.52 L486.25,239.52 L486.53,239.52 L486.81,239.52 L487.09,239.52 L487.37,239.52 L487.65,239.52 L487.93,239.52 L488.2,239.52 L488.48,239.52 L488.76,239.52 L489.04,239.52 L489.32,239.52 L489.6,239.52 L489.88,239.52 L490.16,239.52 L490.43,239.52 L490.71,239.52 L490.99,239.52 L491.27,239.52 L491.55,239.52 L491.83,239.52 L492.11,239.52 L492.39,239.52 L492.66,239.52 L492.94,239.52 L493.22,239.52 L493.5,214.72 L493.78,214.72 L494.06,239.52 L494.34,239.52 L494.62,239.52 L494.89,214.72 L495.17,214.72 L495.45,214.72 L495.73,214.72 L496.01,239.52 L496.29,239.52 L496.57,239.52 L496.84,239.52 L497.12,239.52 L497.4,239.52 L497.68,239.52 L497.96,239.52 L498.24,239.52 L498.52,239.52 L498.8,214.72 L499.07,214.72 L499.35,214.72 L499.63,239.52 L499.91,214.72 L500.19,214.72 L500.47,239.52 L500.75,214.72 L501.03,214.72 L501.3,239.52 L501.58,239.52 L501.86,239.52 L502.14,239.52 L502.42,213.48 L502.7,213.48 L502.98,239.52 L503.26,239.52 L503.53,239.52 L503.81,239.52 L504.09,239.52 L504.37,239.52 L504.65,239.52 L504.93,213.48 L505.21,213.48 L505.49,213.48 L505.76,213.48 L506.04,213.48 L506.32,213.48 L506.6,213.48 L506.88,213.48 L507.16,213.48 L507.44,213.48 L507.72,213.48 L507.99,213.48 L508.27,239.52 L508.55,239.52 L508.83,239.52 L509.11,239.52 L509.39,239.52 L509.67,239.52 L509.95,239.52 L510.22,239.52 L510.5,239.52 L510.78,239.52 L511.06,239.52 L511.34,239.52 L511.62,239.52 L511.9,239.52 L512.17,239.52 L512.45,239.52 L512.73,239.52 L513.01,239.52 L513.29,239.52 L513.57,239.52 L513.85,239.52 L514.13,239.52 L514.4,239.52 L514.68,239.52 L514.96,239.52 L515.24,239.52 L515.52,239.52 L515.8,239.52 L516.08,239.52 L516.36,239.52 L516.63,239.52 L516.91,239.52 L517.19,239.52 L517.47,239.52 L517.75,239.52 L518.03,214.72 L518.31,239.52 L518.59,239.52 L518.86,239.52 L519.14,239.52 L519.42,239.52 L519.7,239.52 L519.98,214.72 L520.26,239.52 L520.54,239.52 L520.82,239.52 L521.09,239.52 L521.37,239.52 L521.65,214.72 L521.93,214.72 L522.21,214.72 L522.49,214.72 L522.77,239.52 L523.05,239.52 L523.32,239.52 L523.6,239.52 L523.88,239.52 L524.16,239.52 L524.44,239.52 L524.72,239.52 L525,239.52 L525.28,239.52 L525.55,239.52 L525.83,239.52 L526.11,239.52 L526.39,239.52 L526.67,239.52 L526.95,239.52 L527.23,239.52 L527.5,239.52 L527.78,239.52 L528.06,239.52 L528.34,239.52 L528.62,239.52 L528.9,239.52 L529.18,239.52 L529.46,239.52 L529.73,239.52 L530.01,239.52 L530.29,214.72 L530.57,214.72 L530.85,239.52 L531.13,214.72 L531.41,214.72 L531.69,214.72 L531.96,214.72 L532.24,239.52 L532.52,239.52 L532.8,239.52 L533.08,214.72 L533.36,214.72 L533.64,239.52 L533.92,239.52 L534.19,214.72 L534.47,239.52 L534.75,214.72 L535.03,214.72 L535.31,214.72 L535.59,239.52 L535.87,239.52 L536.15,239.52 L536.42,239.52 L536.7,239.52 L536.98,239.52 L537.26,239.52 L537.54,239.52 L537.82,239.52 L538.1,239.52 L538.38,239.52 L538.65,239.52 L538.93,239.52 L539.21,239.52 L539.49,239.52 L539.77,239.52 L540.05,239.52 L540.33,239.52 L540.61,239.52 L540.88,239.52 L541.16,239.52 L541.44,213.48 L541.72,213.48 L542,239.52 L542.28,239.52 L542.56,213.48 L542.83,213.48 L543.11,213.48 L543.39,213.48 L543.67,239.52 L543.95,239.52 L544.23,239.52 L544.51,239.52 L544.79,239.52 L545.06,239.52 L545.34,239.52 L545.62,239.52 L545.9,239.52 L546.18,239.52 L546.46,239.52 L546.74,239.52 L547.02,239.52 L547.29,239.52 L547.57,239.52 L547.85,239.52 L548.13,239.52 L548.41,213.48 L548.69,213.48 L548.97,239.52 L549.25,239.52 L549.52,214.72 L549.8,214.72 L550.08,214.72 L550.36,214.72 L550.64,214.72 L550.92,214.72 L551.2,214.72 L551.48,214.72 L551.75,239.52 L552.03,239.52 L552.31,214.72 L552.59,214.72 L552.87,239.52 L553.15,239.52 L553.43,239.52 L553.71,239.52 L553.98,239.52 L554.26,239.52 L554.54,239.52 L554.82,214.72 L555.1,239.52 L555.38,239.52 L555.66,214.72 L555.94,239.52 L556.21,214.72 L556.49,214.72 L556.77,214.72 L557.05,239.52 L557.33,239.52 L557.61,239.52 L557.89,239.52 L558.16,239.52 L558.44,239.52 L558.72,239.52 L559,214.72 L559.28,214.72 L559.56,239.52 L559.84,239.52 L560.12,239.52 L560.39,214.72 L560.67,214.72 L560.95,214.72 L561.23,214.72 L561.51,214.72 L561.79,214.72 L562.07,239.52 L562.35,239.52 L562.62,239.52 L562.9,239.52 L563.18,239.52 L563.46,214.72 L563.74,239.52 L564.02,214.72 L564.3,239.52 L564.58,239.52 L564.85,214.72 L565.13,239.52 L565.41,239.52 L565.69,239.52 L565.97,239.52 L566.25,239.52 L566.53,239.52 L566.81,239.52 L567.08,214.72 L567.36,239.52 L567.64,239.52 L567.92,239.52 L568.2,239.52 L568.48,239.52 L568.76,239.52 L569.04,214.72 L569.31,213.48 L569.59,213.48 L569.87,239.52 L570.15,213.48 L570.43,213.48 L570.71,213.48 L570.99,213.48 L571.27,213.48 L571.54,239.52 L571.82,239.52 L572.1,239.52 L572.38,239.52 L572.66,239.52 L572.94,213.48 L573.22,239.52 L573.49,239.52 L573.77,239.52 L574.05,213.48 L574.33,213.48 L574.61,239.52 L574.89,239.52 L575.17,239.52 L575.45,239.52 L575.72,213.48 L576,239.52 L576.28,239.52 L576.56,239.52 L576.84,213.48 L577.12,213.48 L577.4,213.48 L577.68,213.48 L577.95,239.52 L578.23,213.48 L578.51,239.52 L578.79,239.52 L579.07,239.52 L579.35,213.48 L579.63,213.48 L579.91,239.52 L580.18,239.52 L580.46,239.52 L580.74,239.52 L581.02,239.52 L581.3,239.52 L581.58,239.52 L581.86,239.52 L582.14,239.52 L582.41,213.48 L582.69,213.48 L582.97,239.52 L583.25,239.52 L583.53,213.48 L583.81,213.48 L584.09,213.48 L584.37,213.48 L584.64,213.48 L584.92,213.48 L585.2,213.48 L585.48,213.48 L585.76,213.48 L586.04,213.48 L586.32,239.52 L586.6,239.52 L586.87,239.52 L587.15,213.48 L587.43,213.48 L587.71,213.48 L587.99,213.48 L588.27,239.52 L588.55,239.52 L588.82,239.52 L589.1,239.52 L589.38,239.52 L589.66,239.52 L589.94,239.52 L590.22,239.52 L590.5,239.52 L590.78,239.52 L591.05,239.52 L591.33,239.52 L591.61,239.52 L591.89,214.72 L592.17,214.72 L592.45,214.72 L592.73,214.72 L593.01,239.52 L593.28,239.52 L593.56,239.52 L593.84,214.72 L594.12,239.52 L594.4,239.52 L594.68,239.52 L594.96,214.72 L595.24,239.52 L595.51,239.52 L595.79,239.52 L596.07,239.52 L596.35,214.72 L596.63,239.52 L596.91,214.72 L597.19,239.52 L597.47,239.52 L597.74,239.52 L598.02,239.52 L598.3,239.52 L598.58,239.52 L598.86,239.52 L599.14,239.52 L599.42,239.52 L599.7,239.52 L599.97,239.52 L600.25,239.52 L600.53,239.52 L600.81,239.52 L601.09,239.52 L601.37,239.52 L601.65,214.72 L601.93,239.52 L602.2,214.72 L602.48,214.72 L602.76,239.52 L603.04,239.52 L603.32,239.52 L603.6,239.52 L603.88,239.52 L604.15,239.52 L604.43,239.52 L604.71,239.52 L604.99,214.72 L605.27,214.72 L605.55,214.72 L605.83,214.72 L606.11,239.52 L606.38,214.72 L606.66,214.72 L606.94,214.72 L607.22,214.72 L607.5,214.72 L607.78,214.72 L608.06,239.52 L608.34,239.52 L608.61,214.72 L608.89,239.52 L609.17,239.52 L609.45,214.72 L609.73,239.52 L610.01,214.72 L610.29,239.52 L610.57,239.52 L610.84,239.52 L611.12,239.52 L611.4,239.52 L611.68,239.52 L611.96,239.52 L612.24,204.8 L612.52,239.52 L612.8,239.52 L613.07,239.52 L613.35,239.52 L613.63,239.52 L613.91,239.52 L614.19,239.52 L614.47,214.72 L614.75,214.72 L615.03,214.72 L615.3,214.72 L615.58,239.52 L615.86,214.72 L616.14,214.72 L616.42,214.72 L616.7,239.52 L616.98,239.52 L617.26,239.52 L617.53,239.52 L617.81,239.52 L618.09,239.52 L618.37,239.52 L618.65,239.52 L618.93,214.72 L619.21,214.72 L619.48,214.72 L619.76,214.72 L620.04,239.52 L620.32,239.52 L620.6,239.52 L620.88,214.72 L621.16,214.72 L621.44,214.72 L621.71,239.52 L621.99,239.52 L622.27,239.52 L622.55,239.52 L622.83,239.52 L623.11,239.52 L623.39,239.52 L623.67,239.52 L623.94,239.52 L624.22,239.52 L624.5,214.72 L624.78,214.72 L625.06,239.52 L625.34,239.52 L625.62,239.52 L625.9,239.52 L626.17,239.52 L626.45,239.52 L626.73,239.52 L627.01,239.52 L627.29,214.72 L627.57,214.72 L627.85,214.72 L628.13,239.52 L628.4,239.52 L628.68,239.52 L628.96,239.52 L629.24,239.52 L629.52,239.52 L629.8,239.52 L630.08,239.52 L630.36,239.52 L630.63,239.52 L630.91,239.52 L631.19,239.52 L631.47,239.52 L631.75,239.52 L632.03,239.52 L632.31,239.52 L632.59,239.52 L632.86,239.52 L633.14,214.72 L633.42,239.52 L633.7,214.72 L633.98,214.72 L634.26,214.72 L634.54,214.72 L634.81,239.52 L635.09,239.52 L635.37,239.52 L635.65,239.52 L635.93,239.52 L636.21,239.52 L636.49,239.52 L636.77,239.52 L637.04,239.52 L637.32,239.52 L637.6,239.52 L637.88,239.52 L638.16,239.52 L638.44,239.52 L638.72,239.52 L639,214.72 L639.27,239.52 L639.55,239.52 L639.83,239.52 L640.11,239.52 L640.39,214.72 L640.67,239.52 L640.95,239.52 L641.23,239.52 L641.5,214.72 L641.78,214.72 L642.06,214.72 L642.34,239.52 L642.62,239.52 L642.9,239.52 L643.18,214.72 L643.46,214.72 L643.73,239.52 L644.01,239.52 L644.29,239.52 L644.57,214.72 L644.85,239.52 L645.13,239.52 L645.41,239.52 L645.69,214.72 L645.96,214.72 L646.24,239.52 L646.52,214.72 L646.8,214.72 L647.08,214.72 L647.36,214.72 L647.64,214.72 L647.92,214.72 L648.19,214.72 L648.47,239.52 L648.75,239.52 L649.03,239.52 L649.31,239.52 L649.59,239.52 L649.87,239.52 L650.14,239.52 L650.42,239.52 L650.7,239.52 L650.98,239.52 L651.26,239.52 L651.54,239.52 L651.82,239.52 L652.1,239.52 L652.37,239.52 L652.65,239.52 L652.93,239.52 L653.21,239.52 L653.49,214.72 L653.77,239.52 L654.05,239.52 L654.33,214.72 L654.6,214.72 L654.88,214.72 L655.16,239.52 L655.44,239.52 L655.72,239.52 L656,214.72 L656.28,239.52 L656.56,239.52 L656.83,214.72 L657.11,214.72 L657.39,239.52 L657.67,239.52 L657.95,239.52 L658.23,239.52 L658.51,214.72 L658.79,239.52 L659.06,214.72 L659.34,214.72 L659.62,239.52 L659.9,239.52 L660.18,214.72 L660.46,239.52 L660.74,239.52 L661.02,239.52 L661.29,239.52 L661.57,239.52 L661.85,214.72 L662.13,214.72 L662.41,214.72 L662.69,214.72 L662.97,239.52 L663.25,239.52 L663.52,239.52 L663.8,239.52 L664.08,214.72 L664.36,214.72 L664.64,214.72 L664.92,214.72 L665.2,214.72 L665.47,214.72 L665.75,239.52 L666.03,239.52 L666.31,239.52 L666.59,239.52 L666.87,239.52 L667.15,214.72 L667.43,214.72 L667.7,214.72 L667.98,239.52 L668.26,239.52 L668.54,214.72 L668.82,214.72 L669.1,214.72 L669.38,214.72 L669.66,214.72 L669.93,239.52 L670.21,239.52 L670.49,239.52 L670.77,239.52 L671.05,239.52 L671.33,239.52 L671.61,213.48 L671.89,239.52 L672.16,239.52 L672.44,239.52 L672.72,213.48 L673,213.48 L673.28,213.48 L673.56,213.48 L673.84,213.48 L674.12,213.48 L674.39,213.48 L674.67,213.48 L674.95,239.52 L675.23,239.52 L675.51,239.52 L675.79,239.52 L676.07,213.48 L676.35,239.52 L676.62,239.52 L676.9,239.52 L677.18,213.48 L677.46,213.48 L677.74,239.52 L678.02,239.52 L678.3,239.52 L678.58,213.48 L678.85,213.48 L679.13,213.48 L679.41,239.52 L679.69,213.48 L679.97,213.48 L680.25,213.48 L680.53,213.48 L680.8,239.52 L681.08,213.48 L681.36,239.52 L681.64,213.48 L681.92,239.52 L682.2,239.52 L682.48,239.52 L682.76,239.52 L683.03,239.52 L683.31,239.52 L683.59,239.52 L683.87,239.52 L684.15,239.52 L684.43,239.52 L684.71,239.52 L684.99,239.52 L685.26,239.52 L685.54,239.52 L685.82,239.52 L686.1,239.52 L686.38,239.52 L686.66,239.52 L686.94,239.52 L687.22,239.52 L687.49,239.52 L687.77,239.52 L688.05,239.52 L688.33,214.72 L688.61,239.52 L688.89,214.72 L689.17,239.52 L689.45,239.52 L689.72,239.52 L690,239.52 L690.28,239.52 L690.56,239.52 L690.84,214.72 L691.12,214.72 L691.4,214.72 L691.68,239.52 L691.95,239.52 L692.23,214.72 L692.51,214.72 L692.79,214.72 L693.07,239.52 L693.35,239.52 L693.63,214.72 L693.91,239.52 L694.18,239.52 L694.46,239.52 L694.74,239.52 L695.02,239.52 L695.3,239.52 L695.58,214.72 L695.86,239.52 L696.13,214.72 L696.41,239.52 L696.69,239.52 L696.97,214.72 L697.25,214.72 L697.53,214.72 L697.81,214.72 L698.09,239.52 L698.36,239.52 L698.64,214.72 L698.92,214.72 L699.2,239.52 L699.48,239.52 L699.76,214.72 L700.04,239.52 L700.32,239.52 L700.59,239.52 L700.87,214.72 L701.15,239.52 L701.43,239.52 L701.71,239.52 L701.99,214.72 L702.27,239.52 L702.55,214.72 L702.82,214.72 L703.1,214.72 L703.38,239.52 L703.66,239.52 L703.94,239.52 L704.22,239.52 L704.5,239.52 L704.78,239.52 L705.05,239.52 L705.33,239.52 L705.61,239.52 L705.89,239.52 L706.17,239.52 L706.45,239.52 L706.73,239.52 L707.01,239.52 L707.28,214.72 L707.56,214.72 L707.84,214.72 L708.12,214.72 L708.4,214.72 L708.68,239.52 L708.96,239.52 L709.24,239.52 L709.51,239.52 L709.79,239.52 L710.07,214.72" fill="none" stroke="#c99236" stroke-width="0.5"/>
<path d="M160.7,267.87 L160.98,258.77 L161.26,269.03 L161.54,269.03 L161.81,269.03 L162.09,266.81 L162.37,267.57 L162.65,265.35 L162.93,269.03 L163.21,266.47 L163.49,269.03 L163.77,269.03 L164.04,254.86 L164.32,269.03 L164.6,269.03 L164.88,262.29 L165.16,269.03 L165.44,269.03 L165.72,269.03 L166,259.73 L166.27,269.03 L166.55,269.03 L166.83,269.03 L167.11,269.03 L167.39,269.03 L167.67,260.06 L167.95,269.03 L168.23,269.03 L168.5,269.03 L168.78,265.45 L169.06,269.03 L169.34,269.03 L169.62,266.82 L169.9,266.87 L170.18,268.04 L170.46,269.03 L170.73,269.03 L171.01,255.35 L171.29,269.03 L171.57,267.02 L171.85,266.71 L172.13,265.83 L172.41,269.03 L172.69,269.03 L172.96,269.03 L173.24,267.84 L173.52,263.71 L173.8,269.03 L174.08,269.03 L174.36,269.03 L174.64,269.03 L174.92,269.03 L175.19,258.86 L175.47,269.03 L175.75,258.3 L176.03,269.03 L176.31,269.03 L176.59,269.03 L176.87,269.03 L177.14,267.26 L177.42,269.03 L177.7,269.03 L177.98,269.03 L178.26,258.91 L178.54,269.03 L178.82,269.03 L179.1,269.03 L179.37,269.03 L179.65,269.03 L179.93,251.51 L180.21,269.03 L180.49,269.03 L180.77,268 L181.05,269.03 L181.33,266.45 L181.6,265.96 L181.88,269.03 L182.16,269.03 L182.44,269.03 L182.72,267.86 L183,269.03 L183.28,269.03 L183.56,269.03 L183.83,269.03 L184.11,269.03 L184.39,269.03 L184.67,262.29 L184.95,269.03 L185.23,266.7 L185.51,269.03 L185.79,269.03 L186.06,269.03 L186.34,267.79 L186.62,269.03 L186.9,269.03 L187.18,269.03 L187.46,269.03 L187.74,269.03 L188.02,269.03 L188.29,252.08 L188.57,269.03 L188.85,269.03 L189.13,269.03 L189.41,269.03 L189.69,269.03 L189.97,269.03 L190.25,269.03 L190.52,261.37 L190.8,269.03 L191.08,269.03 L191.36,269.03 L191.64,266 L191.92,269.03 L192.2,269.03 L192.47,269.03 L192.75,269.03 L193.03,269.03 L193.31,269.03 L193.59,269.03 L193.87,269.03 L194.15,269.03 L194.43,261.61 L194.7,269.03 L194.98,269.03 L195.26,269.03 L195.54,267.27 L195.82,269.03 L196.1,269.03 L196.38,269.03 L196.66,269.03 L196.93,267.45 L197.21,260.5 L197.49,269.03 L197.77,269.03 L198.05,269.03 L198.33,265.61 L198.61,269.03 L198.89,269.03 L199.16,269.03 L199.44,269.03 L199.72,265.99 L200,269.03 L200.28,269.03 L200.56,267.79 L200.84,267.97 L201.12,269.03 L201.39,265.33 L201.67,269.03 L201.95,269.03 L202.23,269.03 L202.51,267.16 L202.79,269.03 L203.07,269.03 L203.35,269.03 L203.62,269.03 L203.9,269.03 L204.18,266.33 L204.46,269.03 L204.74,269.03 L205.02,261.97 L205.3,269.03 L205.58,269.03 L205.85,269.03 L206.13,269.03 L206.41,269.03 L206.69,252 L206.97,269.03 L207.25,269.03 L207.53,269.03 L207.8,267.26 L208.08,269.03 L208.36,269.03 L208.64,269.03 L208.92,269.03 L209.2,269.03 L209.48,269.03 L209.76,269.03 L210.03,269.03 L210.31,269.03 L210.59,269.03 L210.87,269.03 L211.15,269.03 L211.43,269.03 L211.71,269.03 L211.99,269.03 L212.26,269.03 L212.54,265.32 L212.82,269.03 L213.1,269.03 L213.38,269.03 L213.66,269.03 L213.94,269.03 L214.22,269.03 L214.49,266.06 L214.77,267.21 L215.05,269.03 L215.33,269.03 L215.61,258.41 L215.89,269.03 L216.17,269.03 L216.45,267.82 L216.72,269.03 L217,266.13 L217.28,269.03 L217.56,269.03 L217.84,269.03 L218.12,265.44 L218.4,269.03 L218.68,269.03 L218.95,269.03 L219.23,269.03 L219.51,269.03 L219.79,266.25 L220.07,269.03 L220.35,269.03 L220.63,269.03 L220.91,269.03 L221.18,269.03 L221.46,269.03 L221.74,266.59 L222.02,269.03 L222.3,267.19 L222.58,267.33 L222.86,269.03 L223.13,269.03 L223.41,269.03 L223.69,269.03 L223.97,269.03 L224.25,269.03 L224.53,267.11 L224.81,269.03 L225.09,267.56 L225.36,269.03 L225.64,269.03 L225.92,269.03 L226.2,269.03 L226.48,254.34 L226.76,269.03 L227.04,269.03 L227.32,269.03 L227.59,269.03 L227.87,269.03 L228.15,269.03 L228.43,266.49 L228.71,265.65 L228.99,265.95 L229.27,269.03 L229.55,266.45 L229.82,269.03 L230.1,269.03 L230.38,269.03 L230.66,269.03 L230.94,262.07 L231.22,269.03 L231.5,269.03 L231.78,269.03 L232.05,269.03 L232.33,266.43 L232.61,269.03 L232.89,269.03 L233.17,269.03 L233.45,269.03 L233.73,269.03 L234.01,269.03 L234.28,267.65 L234.56,266.93 L234.84,269.03 L235.12,269.03 L235.4,258.15 L235.68,269.03 L235.96,269.03 L236.24,265.34 L236.51,269.03 L236.79,259.36 L237.07,269.03 L237.35,269.03 L237.63,269.03 L237.91,269.03 L238.19,269.03 L238.46,266.86 L238.74,269.03 L239.02,269.03 L239.3,269.03 L239.58,265.73 L239.86,266.11 L240.14,269.03 L240.42,269.03 L240.69,269.03 L240.97,269.03 L241.25,269.03 L241.53,267.26 L241.81,265.71 L242.09,269.03 L242.37,269.03 L242.65,269.03 L242.92,269.03 L243.2,269.03 L243.48,269.03 L243.76,269.03 L244.04,266.73 L244.32,269.03 L244.6,269.03 L244.88,269.03 L245.15,269.03 L245.43,269.03 L245.71,269.03 L245.99,269.03 L246.27,269.03 L246.55,269.03 L246.83,269.03 L247.11,269.03 L247.38,269.03 L247.66,269.03 L247.94,251.93 L248.22,269.03 L248.5,269.03 L248.78,269.03 L249.06,269.03 L249.34,269.03 L249.61,266.32 L249.89,269.03 L250.17,265.88 L250.45,269.03 L250.73,269.03 L251.01,269.03 L251.29,269.03 L251.57,269.03 L251.84,269.03 L252.12,269.03 L252.4,269.03 L252.68,267.19 L252.96,269.03 L253.24,269.03 L253.52,267.82 L253.79,269.03 L254.07,269.03 L254.35,267.97 L254.63,269.03 L254.91,269.03 L255.19,265.53 L255.47,261.83 L255.75,269.03 L256.02,269.03 L256.3,267.18 L256.58,266.08 L256.86,269.03 L257.14,269.03 L257.42,269.03 L257.7,269.03 L257.98,269.03 L258.25,269.03 L258.53,265.67 L258.81,269.03 L259.09,269.03 L259.37,269.03 L259.65,269.03 L259.93,269.03 L260.21,269.03 L260.48,267.13 L260.76,269.03 L261.04,269.03 L261.32,257.22 L261.6,269.03 L261.88,269.03 L262.16,269.03 L262.44,269.03 L262.71,269.03 L262.99,269.03 L263.27,269.03 L263.55,269.03 L263.83,269.03 L264.11,269.03 L264.39,269.03 L264.67,269.03 L264.94,269.03 L265.22,260.53 L265.5,269.03 L265.78,269.03 L266.06,269.03 L266.34,269.03 L266.62,260.31 L266.9,269.03 L267.17,259.36 L267.45,269.03 L267.73,269.03 L268.01,262.9 L268.29,269.03 L268.57,269.03 L268.85,269.03 L269.12,269.03 L269.4,256.52 L269.68,269.03 L269.96,267.99 L270.24,269.03 L270.52,269.03 L270.8,269.03 L271.08,269.03 L271.35,269.03 L271.63,266.72 L271.91,269.03 L272.19,269.03 L272.47,269.03 L272.75,269.03 L273.03,269.03 L273.31,269.03 L273.58,269.03 L273.86,269.03 L274.14,269.03 L274.42,269.03 L274.7,269.03 L274.98,269.03 L275.26,269.03 L275.54,267.59 L275.81,269.03 L276.09,269.03 L276.37,267.54 L276.65,267.49 L276.93,269.03 L277.21,258.73 L277.49,269.03 L277.77,265.72 L278.04,269.03 L278.32,260.18 L278.6,269.03 L278.88,262.41 L279.16,269.03 L279.44,266.74 L279.72,265.75 L280,269.03 L280.27,269.03 L280.55,269.03 L280.83,269.03 L281.11,269.03 L281.39,265.5 L281.67,266.09 L281.95,269.03 L282.23,269.03 L282.5,269.03 L282.78,269.03 L283.06,269.03 L283.34,269.03 L283.62,269.03 L283.9,269.03 L284.18,269.03 L284.45,269.03 L284.73,265.96 L285.01,269.03 L285.29,265.49 L285.57,269.03 L285.85,266.67 L286.13,269.03 L286.41,269.03 L286.68,258.92 L286.96,269.03 L287.24,254.24 L287.52,269.03 L287.8,266.1 L288.08,269.03 L288.36,269.03 L288.64,269.03 L288.91,266.84 L289.19,269.03 L289.47,269.03 L289.75,269.03 L290.03,265.56 L290.31,269.03 L290.59,265.88 L290.87,269.03 L291.14,269.03 L291.42,267.38 L291.7,267.14 L291.98,269.03 L292.26,269.03 L292.54,269.03 L292.82,269.03 L293.1,267.84 L293.37,269.03 L293.65,266.4 L293.93,269.03 L294.21,269.03 L294.49,266.43 L294.77,269.03 L295.05,269.03 L295.33,269.03 L295.6,269.03 L295.88,269.03 L296.16,265.37 L296.44,269.03 L296.72,262.85 L297,269.03 L297.28,268.02 L297.56,269.03 L297.83,253.05 L298.11,269.03 L298.39,259.6 L298.67,266.07 L298.95,269.03 L299.23,269.03 L299.51,269.03 L299.78,252.65 L300.06,269.03 L300.34,269.03 L300.62,269.03 L300.9,269.03 L301.18,269.03 L301.46,269.03 L301.74,267.24 L302.01,266.35 L302.29,269.03 L302.57,269.03 L302.85,265.44 L303.13,269.03 L303.41,269.03 L303.69,265.59 L303.97,269.03 L304.24,269.03 L304.52,266.42 L304.8,269.03 L305.08,269.03 L305.36,269.03 L305.64,269.03 L305.92,269.03 L306.2,265.32 L306.47,259.6 L306.75,269.03 L307.03,269.03 L307.31,269.03 L307.59,269.03 L307.87,269.03 L308.15,262.44 L308.43,269.03 L308.7,265.34 L308.98,269.03 L309.26,269.03 L309.54,269.03 L309.82,265.54 L310.1,269.03 L310.38,269.03 L310.66,269.03 L310.93,266.88 L311.21,269.03 L311.49,269.03 L311.77,267.64 L312.05,267.19 L312.33,269.03 L312.61,269.03 L312.89,269.03 L313.16,269.03 L313.44,269.03 L313.72,269.03 L314,269.03 L314.28,269.03 L314.56,266.69 L314.84,269.03 L315.11,269.03 L315.39,269.03 L315.67,269.03 L315.95,269.03 L316.23,267.38 L316.51,269.03 L316.79,267.66 L317.07,269.03 L317.34,262.43 L317.62,269.03 L317.9,265.73 L318.18,258.22 L318.46,269.03 L318.74,269.03 L319.02,258.6 L319.3,269.03 L319.57,269.03 L319.85,269.03 L320.13,269.03 L320.41,269.03 L320.69,257.85 L320.97,269.03 L321.25,269.03 L321.53,269.03 L321.8,269.03 L322.08,269.03 L322.36,269.03 L322.64,266.02 L322.92,269.03 L323.2,269.03 L323.48,269.03 L323.76,266.97 L324.03,267.88 L324.31,269.03 L324.59,269.03 L324.87,269.03 L325.15,269.03 L325.43,269.03 L325.71,269.03 L325.99,269.03 L326.26,267.22 L326.54,259.05 L326.82,266.8 L327.1,269.03 L327.38,269.03 L327.66,269.03 L327.94,269.03 L328.22,269.03 L328.49,269.03 L328.77,269.03 L329.05,255.8 L329.33,252.6 L329.61,269.03 L329.89,257.13 L330.17,269.03 L330.44,255.99 L330.72,269.03 L331,269.03 L331.28,269.03 L331.56,269.03 L331.84,269.03 L332.12,269.03 L332.4,269.03 L332.67,269.03 L332.95,269.03 L333.23,269.03 L333.51,257.52 L333.79,269.03 L334.07,259.68 L334.35,262.21 L334.63,261.87 L334.9,269.03 L335.18,269.03 L335.46,269.03 L335.74,269.03 L336.02,269.03 L336.3,269.03 L336.58,269.03 L336.86,269.03 L337.13,269.03 L337.41,269.03 L337.69,269.03 L337.97,269.03 L338.25,269.03 L338.53,269.03 L338.81,269.03 L339.09,269.03 L339.36,269.03 L339.64,269.03 L339.92,269.03 L340.2,269.03 L340.48,269.03 L340.76,269.03 L341.04,269.03 L341.32,269.03 L341.59,269.03 L341.87,269.03 L342.15,269.03 L342.43,258.09 L342.71,269.03 L342.99,267.85 L343.27,269.03 L343.55,267.23 L343.82,269.03 L344.1,269.03 L344.38,266.85 L344.66,266.03 L344.94,261.44 L345.22,269.03 L345.5,257.16 L345.77,269.03 L346.05,269.03 L346.33,269.03 L346.61,269.03 L346.89,269.03 L347.17,269.03 L347.45,266.54 L347.73,269.03 L348,269.03 L348.28,269.03 L348.56,269.03 L348.84,269.03 L349.12,266.72 L349.4,267.58 L349.68,269.03 L349.96,269.03 L350.23,265.46 L350.51,255.66 L350.79,269.03 L351.07,269.03 L351.35,267.97 L351.63,265.68 L351.91,269.03 L352.19,267.01 L352.46,256.78 L352.74,269.03 L353.02,266.83 L353.3,269.03 L353.58,269.03 L353.86,269.03 L354.14,269.03 L354.42,269.03 L354.69,253.57 L354.97,269.03 L355.25,269.03 L355.53,269.03 L355.81,269.03 L356.09,267.58 L356.37,266.56 L356.65,269.03 L356.92,269.03 L357.2,269.03 L357.48,269.03 L357.76,269.03 L358.04,266.86 L358.32,265.36 L358.6,266.17 L358.88,269.03 L359.15,269.03 L359.43,269.03 L359.71,269.03 L359.99,269.03 L360.27,269.03 L360.55,269.03 L360.83,269.03 L361.1,269.03 L361.38,269.03 L361.66,269.03 L361.94,269.03 L362.22,269.03 L362.5,269.03 L362.78,265.32 L363.06,266.98 L363.33,269.03 L363.61,269.03 L363.89,269.03 L364.17,251.55 L364.45,267.7 L364.73,265.72 L365.01,265.34 L365.29,255.21 L365.56,267.91 L365.84,269.03 L366.12,267.38 L366.4,269.03 L366.68,258.09 L366.96,269.03 L367.24,269.03 L367.52,269.03 L367.79,266.56 L368.07,252.93 L368.35,269.03 L368.63,269.03 L368.91,269.03 L369.19,269.03 L369.47,265.33 L369.75,269.03 L370.02,258.94 L370.3,269.03 L370.58,252.87 L370.86,261.14 L371.14,269.03 L371.42,265.51 L371.7,269.03 L371.98,257.5 L372.25,269.03 L372.53,269.03 L372.81,269.03 L373.09,269.03 L373.37,269.03 L373.65,265.69 L373.93,269.03 L374.21,269.03 L374.48,269.03 L374.76,269.03 L375.04,267.04 L375.32,269.03 L375.6,269.03 L375.88,269.03 L376.16,269.03 L376.43,269.03 L376.71,266.99 L376.99,269.03 L377.27,265.62 L377.55,265.71 L377.83,269.03 L378.11,269.03 L378.39,269.03 L378.66,269.03 L378.94,269.03 L379.22,265.63 L379.5,266.52 L379.78,269.03 L380.06,252.89 L380.34,269.03 L380.62,261.78 L380.89,265.53 L381.17,267.15 L381.45,259.82 L381.73,269.03 L382.01,269.03 L382.29,269.03 L382.57,269.03 L382.85,266.09 L383.12,266.09 L383.4,267.65 L383.68,252.45 L383.96,263.65 L384.24,269.03 L384.52,265.81 L384.8,269.03 L385.08,269.03 L385.35,269.03 L385.63,253.21 L385.91,269.03 L386.19,265.55 L386.47,267.43 L386.75,252.6 L387.03,267.83 L387.31,265.61 L387.58,269.03 L387.86,256.34 L388.14,261.76 L388.42,269.03 L388.7,269.03 L388.98,269.03 L389.26,269.03 L389.54,269.03 L389.81,267.61 L390.09,269.03 L390.37,269.03 L390.65,269.03 L390.93,269.03 L391.21,266.31 L391.49,269.03 L391.76,269.03 L392.04,269.03 L392.32,269.03 L392.6,265.97 L392.88,269.03 L393.16,269.03 L393.44,269.03 L393.72,261.69 L393.99,269.03 L394.27,269.03 L394.55,269.03 L394.83,258.08 L395.11,267.97 L395.39,269.03 L395.67,269.03 L395.95,265.66 L396.22,257.04 L396.5,269.03 L396.78,267.94 L397.06,269.03 L397.34,269.03 L397.62,269.03 L397.9,269.03 L398.18,269.03 L398.45,269.03 L398.73,267.34 L399.01,267.91 L399.29,266.39 L399.57,269.03 L399.85,269.03 L400.13,269.03 L400.41,269.03 L400.68,267.11 L400.96,269.03 L401.24,266.92 L401.52,267.55 L401.8,255.82 L402.08,269.03 L402.36,267.31 L402.64,269.03 L402.91,267.98 L403.19,269.03 L403.47,269.03 L403.75,269.03 L404.03,269.03 L404.31,266.68 L404.59,269.03 L404.87,269.03 L405.14,269.03 L405.42,269.03 L405.7,269.03 L405.98,269.03 L406.26,266.54 L406.54,263.37 L406.82,267.44 L407.09,257.79 L407.37,269.03 L407.65,269.03 L407.93,269.03 L408.21,260.57 L408.49,267.3 L408.77,269.03 L409.05,269.03 L409.32,269.03 L409.6,269.03 L409.88,269.03 L410.16,269.03 L410.44,269.03 L410.72,269.03 L411,266.17 L411.28,269.03 L411.55,259.67 L411.83,266.44 L412.11,269.03 L412.39,269.03 L412.67,259.06 L412.95,269.03 L413.23,269.03 L413.51,269.03 L413.78,269.03 L414.06,261.51 L414.34,269.03 L414.62,269.03 L414.9,269.03 L415.18,260.9 L415.46,269.03 L415.74,269.03 L416.01,269.03 L416.29,252.36 L416.57,269.03 L416.85,252.48 L417.13,269.03 L417.41,269.03 L417.69,269.03 L417.97,269.03 L418.24,269.03 L418.52,269.03 L418.8,257.99 L419.08,269.03 L419.36,269.03 L419.64,269.03 L419.92,269.03 L420.2,267.91 L420.47,269.03 L420.75,266.23 L421.03,267.93 L421.31,269.03 L421.59,269.03 L421.87,269.03 L422.15,269.03 L422.42,265.75 L422.7,265.68 L422.98,266.66 L423.26,267.36 L423.54,267.39 L423.82,269.03 L424.1,266.13 L424.38,269.03 L424.65,269.03 L424.93,267.21 L425.21,269.03 L425.49,269.03 L425.77,269.03 L426.05,269.03 L426.33,269.03 L426.61,265.81 L426.88,269.03 L427.16,266.43 L427.44,269.03 L427.72,269.03 L428,257.85 L428.28,269.03 L428.56,269.03 L428.84,266.15 L429.11,269.03 L429.39,269.03 L429.67,269.03 L429.95,269.03 L430.23,269.03 L430.51,269.03 L430.79,269.03 L431.07,260.1 L431.34,269.03 L431.62,269.03 L431.9,269.03 L432.18,269.03 L432.46,258.97 L432.74,269.03 L433.02,267.29 L433.3,269.03 L433.57,266.04 L433.85,266.08 L434.13,269.03 L434.41,269.03 L434.69,265.53 L434.97,269.03 L435.25,269.03 L435.53,269.03 L435.8,269.03 L436.08,269.03 L436.36,266.91 L436.64,269.03 L436.92,269.03 L437.2,267.57 L437.48,266.77 L437.75,269.03 L438.03,269.03 L438.31,261.46 L438.59,269.03 L438.87,265.51 L439.15,269.03 L439.43,269.03 L439.71,266.54 L439.98,269.03 L440.26,269.03 L440.54,269.03 L440.82,269.03 L441.1,253.41 L441.38,269.03 L441.66,266.01 L441.94,269.03 L442.21,257.52 L442.49,266.22 L442.77,269.03 L443.05,269.03 L443.33,256.22 L443.61,269.03 L443.89,269.03 L444.17,269.03 L444.44,269.03 L444.72,269.03 L445,269.03 L445.28,262.37 L445.56,266.66 L445.84,269.03 L446.12,269.03 L446.4,269.03 L446.67,269.03 L446.95,269.03 L447.23,260.51 L447.51,266.91 L447.79,269.03 L448.07,269.03 L448.35,269.03 L448.63,269.03 L448.9,269.03 L449.18,267.85 L449.46,269.03 L449.74,269.03 L450.02,260.53 L450.3,258.98 L450.58,269.03 L450.85,267.29 L451.13,269.03 L451.41,269.03 L451.69,267.49 L451.97,267.4 L452.25,269.03 L452.53,269.03 L452.81,259.01 L453.08,269.03 L453.36,262.29 L453.64,269.03 L453.92,269.03 L454.2,269.03 L454.48,269.03 L454.76,263 L455.04,269.03 L455.31,269.03 L455.59,269.03 L455.87,269.03 L456.15,269.03 L456.43,269.03 L456.71,255.46 L456.99,269.03 L457.27,267.91 L457.54,269.03 L457.82,265.77 L458.1,266.52 L458.38,267.77 L458.66,260.2 L458.94,269.03 L459.22,265.99 L459.5,269.03 L459.77,269.03 L460.05,269.03 L460.33,267.7 L460.61,267.33 L460.89,269.03 L461.17,269.03 L461.45,266.84 L461.73,269.03 L462,269.03 L462.28,269.03 L462.56,269.03 L462.84,269.03 L463.12,269.03 L463.4,269.03 L463.68,269.03 L463.96,263.42 L464.23,269.03 L464.51,266.22 L464.79,269.03 L465.07,269.03 L465.35,267.78 L465.63,269.03 L465.91,269.03 L466.18,269.03 L466.46,269.03 L466.74,269.03 L467.02,267.61 L467.3,269.03 L467.58,269.03 L467.86,266.41 L468.14,269.03 L468.41,266.27 L468.69,269.03 L468.97,269.03 L469.25,267.05 L469.53,267.03 L469.81,265.85 L470.09,267.97 L470.37,269.03 L470.64,269.03 L470.92,269.03 L471.2,265.38 L471.48,267.19 L471.76,269.03 L472.04,269.03 L472.32,269.03 L472.6,267.71 L472.87,266.24 L473.15,268 L473.43,269.03 L473.71,269.03 L473.99,266.69 L474.27,269.03 L474.55,269.03 L474.83,266.6 L475.1,269.03 L475.38,269.03 L475.66,269.03 L475.94,269.03 L476.22,269.03 L476.5,269.03 L476.78,269.03 L477.06,269.03 L477.33,259.34 L477.61,265.72 L477.89,269.03 L478.17,269.03 L478.45,269.03 L478.73,265.82 L479.01,269.03 L479.29,269.03 L479.56,269.03 L479.84,265.52 L480.12,269.03 L480.4,269.03 L480.68,269.03 L480.96,269.03 L481.24,269.03 L481.51,269.03 L481.79,269.03 L482.07,266.95 L482.35,269.03 L482.63,269.03 L482.91,262.16 L483.19,269.03 L483.47,269.03 L483.74,269.03 L484.02,269.03 L484.3,269.03 L484.58,269.03 L484.86,266.64 L485.14,269.03 L485.42,269.03 L485.7,267.2 L485.97,269.03 L486.25,266.41 L486.53,269.03 L486.81,269.03 L487.09,269.03 L487.37,269.03 L487.65,269.03 L487.93,269.03 L488.2,266.64 L488.48,265.97 L488.76,265.91 L489.04,266.98 L489.32,269.03 L489.6,260.42 L489.88,269.03 L490.16,269.03 L490.43,269.03 L490.71,269.03 L490.99,269.03 L491.27,269.03 L491.55,269.03 L491.83,269.03 L492.11,267.55 L492.39,269.03 L492.66,269.03 L492.94,266.43 L493.22,255.67 L493.5,269.03 L493.78,269.03 L494.06,267.8 L494.34,266 L494.62,262.12 L494.89,269.03 L495.17,266.07 L495.45,269.03 L495.73,257.45 L496.01,269.03 L496.29,269.03 L496.57,263.57 L496.84,265.55 L497.12,269.03 L497.4,269.03 L497.68,269.03 L497.96,252.62 L498.24,269.03 L498.52,269.03 L498.8,257.89 L499.07,267.48 L499.35,269.03 L499.63,267.41 L499.91,267.49 L500.19,266.98 L500.47,267.98 L500.75,259.64 L501.03,255.7 L501.3,269.03 L501.58,257.98 L501.86,269.03 L502.14,254.99 L502.42,269.03 L502.7,265.36 L502.98,269.03 L503.26,269.03 L503.53,269.03 L503.81,269.03 L504.09,269.03 L504.37,266.43 L504.65,260.82 L504.93,269.03 L505.21,252.02 L505.49,266.21 L505.76,269.03 L506.04,263.09 L506.32,269.03 L506.6,260.23 L506.88,269.03 L507.16,266.89 L507.44,269.03 L507.72,269.03 L507.99,269.03 L508.27,258.12 L508.55,253.12 L508.83,269.03 L509.11,269.03 L509.39,258.81 L509.67,261.66 L509.95,269.03 L510.22,269.03 L510.5,253.56 L510.78,269.03 L511.06,269.03 L511.34,269.03 L511.62,269.03 L511.9,269.03 L512.17,269.03 L512.45,252.19 L512.73,269.03 L513.01,269.03 L513.29,269.03 L513.57,269.03 L513.85,265.51 L514.13,269.03 L514.4,262.23 L514.68,269.03 L514.96,269.03 L515.24,267.24 L515.52,266.09 L515.8,267.38 L516.08,269.03 L516.36,269.03 L516.63,269.03 L516.91,266.1 L517.19,267.03 L517.47,269.03 L517.75,269.03 L518.03,269.03 L518.31,269.03 L518.59,269.03 L518.86,269.03 L519.14,266.24 L519.42,269.03 L519.7,265.74 L519.98,266.27 L520.26,266.79 L520.54,269.03 L520.82,269.03 L521.09,269.03 L521.37,267.15 L521.65,269.03 L521.93,266.71 L522.21,269.03 L522.49,267.82 L522.77,265.73 L523.05,269.03 L523.32,269.03 L523.6,269.03 L523.88,267.17 L524.16,269.03 L524.44,269.03 L524.72,269.03 L525,269.03 L525.28,265.65 L525.55,269.03 L525.83,266.8 L526.11,269.03 L526.39,269.03 L526.67,269.03 L526.95,267.28 L527.23,269.03 L527.5,269.03 L527.78,269.03 L528.06,269.03 L528.34,269.03 L528.62,269.03 L528.9,269.03 L529.18,266.71 L529.46,266.35 L529.73,269.03 L530.01,269.03 L530.29,266.03 L530.57,258.97 L530.85,266.43 L531.13,265.46 L531.41,269.03 L531.69,267.41 L531.96,269.03 L532.24,266.21 L532.52,269.03 L532.8,266.38 L533.08,269.03 L533.36,269.03 L533.64,269.03 L533.92,269.03 L534.19,269.03 L534.47,256.2 L534.75,269.03 L535.03,269.03 L535.31,269.03 L535.59,267.93 L535.87,258.78 L536.15,269.03 L536.42,251.45 L536.7,269.03 L536.98,258.19 L537.26,269.03 L537.54,266 L537.82,260.44 L538.1,269.03 L538.38,269.03 L538.65,269.03 L538.93,269.03 L539.21,269.03 L539.49,267.41 L539.77,269.03 L540.05,263.18 L540.33,266.14 L540.61,269.03 L540.88,261.38 L541.16,269.03 L541.44,269.03 L541.72,266.51 L542,269.03 L542.28,269.03 L542.56,269.03 L542.83,269.03 L543.11,265.33 L543.39,251.45 L543.67,269.03 L543.95,269.03 L544.23,252.44 L544.51,254.45 L544.79,269.03 L545.06,269.03 L545.34,269.03 L545.62,269.03 L545.9,269.03 L546.18,269.03 L546.46,261.07 L546.74,266.56 L547.02,265.65 L547.29,269.03 L547.57,269.03 L547.85,269.03 L548.13,269.03 L548.41,269.03 L548.69,269.03 L548.97,269.03 L549.25,259.07 L549.52,269.03 L549.8,260.86 L550.08,269.03 L550.36,269.03 L550.64,269.03 L550.92,269.03 L551.2,262.31 L551.48,269.03 L551.75,269.03 L552.03,267.84 L552.31,269.03 L552.59,269.03 L552.87,254.3 L553.15,269.03 L553.43,269.03 L553.71,269.03 L553.98,269.03 L554.26,263.21 L554.54,269.03 L554.82,266.38 L555.1,256.02 L555.38,269.03 L555.66,269.03 L555.94,269.03 L556.21,269.03 L556.49,267.34 L556.77,255.42 L557.05,269.03 L557.33,269.03 L557.61,252.43 L557.89,269.03 L558.16,253.4 L558.44,269.03 L558.72,269.03 L559,267.21 L559.28,269.03 L559.56,269.03 L559.84,269.03 L560.12,253.34 L560.39,269.03 L560.67,269.03 L560.95,269.03 L561.23,269.03 L561.51,269.03 L561.79,269.03 L562.07,269.03 L562.35,265.7 L562.62,269.03 L562.9,269.03 L563.18,267.39 L563.46,269.03 L563.74,269.03 L564.02,266.47 L564.3,267.65 L564.58,269.03 L564.85,269.03 L565.13,269.03 L565.41,269.03 L565.69,269.03 L565.97,267.51 L566.25,266.64 L566.53,269.03 L566.81,269.03 L567.08,269.03 L567.36,266.58 L567.64,269.03 L567.92,265.57 L568.2,269.03 L568.48,260.89 L568.76,269.03 L569.04,269.03 L569.31,269.03 L569.59,269.03 L569.87,269.03 L570.15,269.03 L570.43,258.12 L570.71,258.43 L570.99,269.03 L571.27,269.03 L571.54,269.03 L571.82,267.32 L572.1,269.03 L572.38,269.03 L572.66,259.67 L572.94,269.03 L573.22,258.61 L573.49,269.03 L573.77,259.23 L574.05,269.03 L574.33,269.03 L574.61,269.03 L574.89,269.03 L575.17,269.03 L575.45,259.5 L575.72,258.29 L576,266.73 L576.28,255.12 L576.56,269.03 L576.84,265.95 L577.12,267.25 L577.4,257.84 L577.68,261.99 L577.95,258.62 L578.23,269.03 L578.51,266.21 L578.79,262.19 L579.07,269.03 L579.35,269.03 L579.63,269.03 L579.91,269.03 L580.18,269.03 L580.46,269.03 L580.74,269.03 L581.02,269.03 L581.3,269.03 L581.58,265.69 L581.86,256.98 L582.14,269.03 L582.41,267.64 L582.69,269.03 L582.97,269.03 L583.25,267.26 L583.53,269.03 L583.81,269.03 L584.09,269.03 L584.37,265.38 L584.64,269.03 L584.92,269.03 L585.2,266.85 L585.48,262.61 L585.76,269.03 L586.04,262.98 L586.32,269.03 L586.6,269.03 L586.87,269.03 L587.15,269.03 L587.43,269.03 L587.71,269.03 L587.99,269.03 L588.27,267.01 L588.55,266.83 L588.82,269.03 L589.1,269.03 L589.38,269.03 L589.66,269.03 L589.94,269.03 L590.22,256.51 L590.5,269.03 L590.78,267.07 L591.05,269.03 L591.33,269.03 L591.61,269.03 L591.89,260.93 L592.17,269.03 L592.45,260.41 L592.73,269.03 L593.01,269.03 L593.28,269.03 L593.56,269.03 L593.84,269.03 L594.12,269.03 L594.4,269.03 L594.68,269.03 L594.96,269.03 L595.24,269.03 L595.51,269.03 L595.79,267.79 L596.07,251.44 L596.35,269.03 L596.63,261.54 L596.91,269.03 L597.19,269.03 L597.47,269.03 L597.74,266.61 L598.02,269.03 L598.3,269.03 L598.58,263.79 L598.86,269.03 L599.14,269.03 L599.42,269.03 L599.7,269.03 L599.97,262.88 L600.25,269.03 L600.53,266.58 L600.81,269.03 L601.09,269.03 L601.37,257.78 L601.65,259.99 L601.93,269.03 L602.2,269.03 L602.48,252.19 L602.76,260.18 L603.04,269.03 L603.32,269.03 L603.6,255.86 L603.88,269.03 L604.15,269.03 L604.43,269.03 L604.71,253.3 L604.99,269.03 L605.27,268.01 L605.55,263.57 L605.83,269.03 L606.11,269.03 L606.38,269.03 L606.66,269.03 L606.94,269.03 L607.22,269.03 L607.5,269.03 L607.78,267.49 L608.06,269.03 L608.34,266.66 L608.61,269.03 L608.89,265.98 L609.17,266.73 L609.45,266.69 L609.73,267.08 L610.01,269.03 L610.29,259.66 L610.57,267.4 L610.84,255.45 L611.12,252.28 L611.4,269.03 L611.68,259.74 L611.96,269.03 L612.24,269.03 L612.52,257.78 L612.8,269.03 L613.07,261.06 L613.35,267.34 L613.63,254.64 L613.91,269.03 L614.19,267.05 L614.47,269.03 L614.75,269.03 L615.03,269.03 L615.3,269.03 L615.58,269.03 L615.86,269.03 L616.14,269.03 L616.42,269.03 L616.7,269.03 L616.98,269.03 L617.26,253.39 L617.53,269.03 L617.81,269.03 L618.09,269.03 L618.37,269.03 L618.65,267.76 L618.93,269.03 L619.21,267.82 L619.48,269.03 L619.76,263.73 L620.04,266.09 L620.32,269.03 L620.6,266.04 L620.88,269.03 L621.16,269.03 L621.44,269.03 L621.71,269.03 L621.99,269.03 L622.27,265.82 L622.55,269.03 L622.83,267.76 L623.11,269.03 L623.39,269.03 L623.67,267.4 L623.94,258.63 L624.22,267.05 L624.5,266.33 L624.78,269.03 L625.06,265.65 L625.34,267.19 L625.62,269.03 L625.9,269.03 L626.17,269.03 L626.45,269.03 L626.73,269.03 L627.01,269.03 L627.29,269.03 L627.57,266.2 L627.85,269.03 L628.13,269.03 L628.4,269.03 L628.68,269.03 L628.96,269.03 L629.24,269.03 L629.52,266.28 L629.8,269.03 L630.08,267.22 L630.36,269.03 L630.63,260.81 L630.91,269.03 L631.19,269.03 L631.47,269.03 L631.75,269.03 L632.03,269.03 L632.31,269.03 L632.59,266.88 L632.86,269.03 L633.14,269.03 L633.42,269.03 L633.7,269.03 L633.98,269.03 L634.26,269.03 L634.54,269.03 L634.81,265.92 L635.09,269.03 L635.37,269.03 L635.65,260.08 L635.93,269.03 L636.21,267.22 L636.49,269.03 L636.77,269.03 L637.04,269.03 L637.32,269.03 L637.6,269.03 L637.88,269.03 L638.16,269.03 L638.44,269.03 L638.72,253.67 L639,269.03 L639.27,265.92 L639.55,269.03 L639.83,269.03 L640.11,269.03 L640.39,266.48 L640.67,267.12 L640.95,269.03 L641.23,258.42 L641.5,269.03 L641.78,269.03 L642.06,269.03 L642.34,269.03 L642.62,269.03 L642.9,266.85 L643.18,255.98 L643.46,266.7 L643.73,269.03 L644.01,254.97 L644.29,256.12 L644.57,269.03 L644.85,266.72 L645.13,267.54 L645.41,269.03 L645.69,269.03 L645.96,261.19 L646.24,269.03 L646.52,269.03 L646.8,269.03 L647.08,269.03 L647.36,251.72 L647.64,267.93 L647.92,269.03 L648.19,266.66 L648.47,266.98 L648.75,265.34 L649.03,269.03 L649.31,257.98 L649.59,265.42 L649.87,269.03 L650.14,269.03 L650.42,269.03 L650.7,261.95 L650.98,257.79 L651.26,269.03 L651.54,256.99 L651.82,267.42 L652.1,269.03 L652.37,269.03 L652.65,269.03 L652.93,269.03 L653.21,265.52 L653.49,269.03 L653.77,262.31 L654.05,265.67 L654.33,269.03 L654.6,258.98 L654.88,269.03 L655.16,269.03 L655.44,263.02 L655.72,269.03 L656,265.79 L656.28,269.03 L656.56,269.03 L656.83,267.72 L657.11,269.03 L657.39,269.03 L657.67,252.16 L657.95,269.03 L658.23,257.02 L658.51,269.03 L658.79,269.03 L659.06,265.6 L659.34,266.23 L659.62,269.03 L659.9,269.03 L660.18,269.03 L660.46,267.77 L660.74,269.03 L661.02,269.03 L661.29,267.24 L661.57,269.03 L661.85,262.73 L662.13,269.03 L662.41,262.79 L662.69,269.03 L662.97,265.84 L663.25,269.03 L663.52,265.47 L663.8,269.03 L664.08,261.85 L664.36,269.03 L664.64,266.76 L664.92,266.81 L665.2,269.03 L665.47,269.03 L665.75,252.55 L666.03,269.03 L666.31,269.03 L666.59,269.03 L666.87,269.03 L667.15,269.03 L667.43,269.03 L667.7,267.47 L667.98,269.03 L668.26,269.03 L668.54,263.36 L668.82,269.03 L669.1,269.03 L669.38,269.03 L669.66,267.68 L669.93,269.03 L670.21,254.47 L670.49,269.03 L670.77,269.03 L671.05,269.03 L671.33,269.03 L671.61,267.87 L671.89,269.03 L672.16,269.03 L672.44,268.02 L672.72,269.03 L673,256.36 L673.28,269.03 L673.56,269.03 L673.84,269.03 L674.12,269.03 L674.39,269.03 L674.67,269.03 L674.95,269.03 L675.23,263.42 L675.51,269.03 L675.79,269.03 L676.07,269.03 L676.35,259.1 L676.62,267.73 L676.9,269.03 L677.18,261.98 L677.46,269.03 L677.74,269.03 L678.02,269.03 L678.3,269.03 L678.58,266.09 L678.85,269.03 L679.13,269.03 L679.41,269.03 L679.69,269.03 L679.97,269.03 L680.25,269.03 L680.53,269.03 L680.8,266.2 L681.08,269.03 L681.36,267 L681.64,269.03 L681.92,269.03 L682.2,269.03 L682.48,267.31 L682.76,269.03 L683.03,257.39 L683.31,269.03 L683.59,266.19 L683.87,269.03 L684.15,269.03 L684.43,269.03 L684.71,269.03 L684.99,267.72 L685.26,269.03 L685.54,269.03 L685.82,269.03 L686.1,269.03 L686.38,269.03 L686.66,269.03 L686.94,269.03 L687.22,269.03 L687.49,269.03 L687.77,269.03 L688.05,258.64 L688.33,269.03 L688.61,269.03 L688.89,269.03 L689.17,269.03 L689.45,269.03 L689.72,269.03 L690,269.03 L690.28,269.03 L690.56,269.03 L690.84,265.33 L691.12,269.03 L691.4,257.67 L691.68,269.03 L691.95,269.03 L692.23,265.32 L692.51,269.03 L692.79,267.58 L693.07,251.56 L693.35,269.03 L693.63,269.03 L693.91,267.41 L694.18,269.03 L694.46,267.96 L694.74,269.03 L695.02,269.03 L695.3,269.03 L695.58,265.84 L695.86,269.03 L696.13,266.63 L696.41,257.86 L696.69,269.03 L696.97,269.03 L697.25,258.09 L697.53,269.03 L697.81,266.13 L698.09,269.03 L698.36,269.03 L698.64,269.03 L698.92,269.03 L699.2,269.03 L699.48,269.03 L699.76,269.03 L700.04,267.19 L700.32,269.03 L700.59,269.03 L700.87,269.03 L701.15,269.03 L701.43,265.89 L701.71,269.03 L701.99,269.03 L702.27,267.73 L702.55,254.59 L702.82,265.6 L703.1,265.63 L703.38,269.03 L703.66,257.87 L703.94,269.03 L704.22,269.03 L704.5,269.03 L704.78,269.03 L705.05,269.03 L705.33,257.49 L705.61,265.35 L705.89,269.03 L706.17,258.69 L706.45,269.03 L706.73,269.03 L707.01,269.03 L707.28,269.03 L707.56,269.03 L707.84,269.03 L708.12,269.03 L708.4,266.42 L708.68,269.03 L708.96,267.99 L709.24,269.03 L709.51,269.03 L709.79,269.03 L710.07,266.45" fill="none" stroke="#1fb81f" stroke-width="0.55"/>
<line x1="160.7" y1="180" x2="160.7" y2="279.2" stroke="#8686e8" stroke-width="1.25"/>
<line x1="710.35" y1="180" x2="710.35" y2="279.2" stroke="#7f82cf" stroke-width="1.3"/>
<line x1="160.7" y1="279.2" x2="710.35" y2="279.2" stroke="#9ca2e6" stroke-width="1"/>
<line x1="157.4" y1="279.2" x2="160.7" y2="279.2" stroke="#a4a8dc" stroke-width="0.6"/>
<text x="157.1" y="280.8" font-family="Liberation Mono" font-size="4.85" fill="#8d92c6" text-anchor="end" font-weight="normal" textLength="2.2" lengthAdjust="spacingAndGlyphs">0</text>
<line x1="160" y1="274.24" x2="161.4" y2="274.24" stroke="#5a5ec0" stroke-width="0.8"/>
<line x1="160" y1="269.28" x2="161.4" y2="269.28" stroke="#5a5ec0" stroke-width="0.8"/>
<line x1="160" y1="264.32" x2="161.4" y2="264.32" stroke="#5a5ec0" stroke-width="0.8"/>
<line x1="157.4" y1="259.36" x2="160.7" y2="259.36" stroke="#a4a8dc" stroke-width="0.6"/>
<text x="157.1" y="260.96" font-family="Liberation Mono" font-size="4.85" fill="#8d92c6" text-anchor="end" font-weight="normal" textLength="6.6" lengthAdjust="spacingAndGlyphs">800</text>
<line x1="160" y1="254.4" x2="161.4" y2="254.4" stroke="#5a5ec0" stroke-width="0.8"/>
<line x1="160" y1="249.44" x2="161.4" y2="249.44" stroke="#5a5ec0" stroke-width="0.8"/>
<line x1="160" y1="244.48" x2="161.4" y2="244.48" stroke="#5a5ec0" stroke-width="0.8"/>
<line x1="157.4" y1="239.52" x2="160.7" y2="239.52" stroke="#a4a8dc" stroke-width="0.6"/>
<text x="157.1" y="241.12" font-family="Liberation Mono" font-size="4.85" fill="#8d92c6" text-anchor="end" font-weight="normal" textLength="8.8" lengthAdjust="spacingAndGlyphs">1600</text>
<line x1="160" y1="234.56" x2="161.4" y2="234.56" stroke="#5a5ec0" stroke-width="0.8"/>
<line x1="160" y1="229.6" x2="161.4" y2="229.6" stroke="#5a5ec0" stroke-width="0.8"/>
<line x1="160" y1="224.64" x2="161.4" y2="224.64" stroke="#5a5ec0" stroke-width="0.8"/>
<line x1="157.4" y1="219.68" x2="160.7" y2="219.68" stroke="#a4a8dc" stroke-width="0.6"/>
<text x="157.1" y="221.28" font-family="Liberation Mono" font-size="4.85" fill="#8d92c6" text-anchor="end" font-weight="normal" textLength="8.8" lengthAdjust="spacingAndGlyphs">2400</text>
<line x1="160" y1="214.72" x2="161.4" y2="214.72" stroke="#5a5ec0" stroke-width="0.8"/>
<line x1="160" y1="209.76" x2="161.4" y2="209.76" stroke="#5a5ec0" stroke-width="0.8"/>
<line x1="160" y1="204.8" x2="161.4" y2="204.8" stroke="#5a5ec0" stroke-width="0.8"/>
<line x1="157.4" y1="199.84" x2="160.7" y2="199.84" stroke="#a4a8dc" stroke-width="0.6"/>
<text x="157.1" y="201.44" font-family="Liberation Mono" font-size="4.85" fill="#8d92c6" text-anchor="end" font-weight="normal" textLength="8.8" lengthAdjust="spacingAndGlyphs">3200</text>
<line x1="160" y1="194.88" x2="161.4" y2="194.88" stroke="#5a5ec0" stroke-width="0.8"/>
<line x1="160" y1="189.92" x2="161.4" y2="189.92" stroke="#5a5ec0" stroke-width="0.8"/>
<line x1="160" y1="184.96" x2="161.4" y2="184.96" stroke="#5a5ec0" stroke-width="0.8"/>
<line x1="157.4" y1="180" x2="160.7" y2="180" stroke="#a4a8dc" stroke-width="0.6"/>
<text x="157.1" y="181.6" font-family="Liberation Mono" font-size="4.85" fill="#8d92c6" text-anchor="end" font-weight="normal" textLength="8.8" lengthAdjust="spacingAndGlyphs">4000</text>
<line x1="160.7" y1="279.2" x2="160.7" y2="281" stroke="#a4a8dc" stroke-width="0.6"/>
<line x1="188.18" y1="279.2" x2="188.18" y2="280.7" stroke="#a4a8dc" stroke-width="0.6"/>
<text x="160.7" y="285.8" font-family="Liberation Mono" font-size="4.85" fill="#8d92c6" text-anchor="middle" font-weight="normal" textLength="11.4" lengthAdjust="spacingAndGlyphs">00:00</text>
<line x1="215.66" y1="279.2" x2="215.66" y2="281" stroke="#a4a8dc" stroke-width="0.6"/>
<line x1="243.15" y1="279.2" x2="243.15" y2="280.7" stroke="#a4a8dc" stroke-width="0.6"/>
<text x="215.66" y="285.8" font-family="Liberation Mono" font-size="4.85" fill="#8d92c6" text-anchor="middle" font-weight="normal" textLength="11.4" lengthAdjust="spacingAndGlyphs">03:17</text>
<line x1="270.63" y1="279.2" x2="270.63" y2="281" stroke="#a4a8dc" stroke-width="0.6"/>
<line x1="298.11" y1="279.2" x2="298.11" y2="280.7" stroke="#a4a8dc" stroke-width="0.6"/>
<text x="270.63" y="285.8" font-family="Liberation Mono" font-size="4.85" fill="#8d92c6" text-anchor="middle" font-weight="normal" textLength="11.4" lengthAdjust="spacingAndGlyphs">06:34</text>
<line x1="325.6" y1="279.2" x2="325.6" y2="281" stroke="#a4a8dc" stroke-width="0.6"/>
<line x1="353.08" y1="279.2" x2="353.08" y2="280.7" stroke="#a4a8dc" stroke-width="0.6"/>
<text x="325.6" y="285.8" font-family="Liberation Mono" font-size="4.85" fill="#8d92c6" text-anchor="middle" font-weight="normal" textLength="11.4" lengthAdjust="spacingAndGlyphs">09:52</text>
<line x1="380.56" y1="279.2" x2="380.56" y2="281" stroke="#a4a8dc" stroke-width="0.6"/>
<line x1="408.04" y1="279.2" x2="408.04" y2="280.7" stroke="#a4a8dc" stroke-width="0.6"/>
<text x="380.56" y="285.8" font-family="Liberation Mono" font-size="4.85" fill="#8d92c6" text-anchor="middle" font-weight="normal" textLength="11.4" lengthAdjust="spacingAndGlyphs">13:09</text>
<line x1="435.53" y1="279.2" x2="435.53" y2="281" stroke="#a4a8dc" stroke-width="0.6"/>
<line x1="463.01" y1="279.2" x2="463.01" y2="280.7" stroke="#a4a8dc" stroke-width="0.6"/>
<text x="435.53" y="285.8" font-family="Liberation Mono" font-size="4.85" fill="#8d92c6" text-anchor="middle" font-weight="normal" textLength="11.4" lengthAdjust="spacingAndGlyphs">16:26</text>
<line x1="490.49" y1="279.2" x2="490.49" y2="281" stroke="#a4a8dc" stroke-width="0.6"/>
<line x1="517.97" y1="279.2" x2="517.97" y2="280.7" stroke="#a4a8dc" stroke-width="0.6"/>
<text x="490.49" y="285.8" font-family="Liberation Mono" font-size="4.85" fill="#8d92c6" text-anchor="middle" font-weight="normal" textLength="11.4" lengthAdjust="spacingAndGlyphs">19:43</text>
<line x1="545.46" y1="279.2" x2="545.46" y2="281" stroke="#a4a8dc" stroke-width="0.6"/>
<line x1="572.94" y1="279.2" x2="572.94" y2="280.7" stroke="#a4a8dc" stroke-width="0.6"/>
<text x="545.46" y="285.8" font-family="Liberation Mono" font-size="4.85" fill="#8d92c6" text-anchor="middle" font-weight="normal" textLength="11.4" lengthAdjust="spacingAndGlyphs">23:00</text>
<line x1="600.42" y1="279.2" x2="600.42" y2="281" stroke="#a4a8dc" stroke-width="0.6"/>
<line x1="627.9" y1="279.2" x2="627.9" y2="280.7" stroke="#a4a8dc" stroke-width="0.6"/>
<text x="600.42" y="285.8" font-family="Liberation Mono" font-size="4.85" fill="#8d92c6" text-anchor="middle" font-weight="normal" textLength="11.4" lengthAdjust="spacingAndGlyphs">26:18</text>
<line x1="655.38" y1="279.2" x2="655.38" y2="281" stroke="#a4a8dc" stroke-width="0.6"/>
<line x1="682.87" y1="279.2" x2="682.87" y2="280.7" stroke="#a4a8dc" stroke-width="0.6"/>
<text x="655.38" y="285.8" font-family="Liberation Mono" font-size="4.85" fill="#8d92c6" text-anchor="middle" font-weight="normal" textLength="11.4" lengthAdjust="spacingAndGlyphs">29:35</text>
<line x1="710.35" y1="279.2" x2="710.35" y2="281" stroke="#a4a8dc" stroke-width="0.6"/>
<text x="710.35" y="285.8" font-family="Liberation Mono" font-size="4.85" fill="#8d92c6" text-anchor="middle" font-weight="normal" textLength="11.4" lengthAdjust="spacingAndGlyphs">32:52</text>
<text x="162.2" y="220.9" font-family="Liberation Mono" font-size="5" fill="#4a4af4" text-anchor="start" font-weight="normal" textLength="36.4" lengthAdjust="spacingAndGlyphs">Time:00:00-32:49</text>
<text x="162.2" y="225.2" font-family="Liberation Mono" font-size="5" fill="#4a4af4" text-anchor="start" font-weight="normal" textLength="55.4" lengthAdjust="spacingAndGlyphs">Avg(cpu0-3):1076.27MHz</text>
<text x="162.2" y="229.5" font-family="Liberation Mono" font-size="5" fill="#4a4af4" text-anchor="start" font-weight="normal" textLength="55.4" lengthAdjust="spacingAndGlyphs">Avg(cpu4-6):1815.51MHz</text>
<text x="162.2" y="233.8" font-family="Liberation Mono" font-size="5" fill="#4a4af4" text-anchor="start" font-weight="normal" textLength="55.4" lengthAdjust="spacingAndGlyphs">Avg(cpu7):1873.48MHz</text>
<rect x="160.7" y="303.8" width="549.65" height="99.2" fill="#e8e8fc"/>
<line x1="160.7" y1="303.8" x2="710.35" y2="303.8" stroke="#d0d1f6" stroke-width="0.6"/>
<line x1="160.7" y1="323.64" x2="710.35" y2="323.64" stroke="#d0d1f6" stroke-width="0.6"/>
<line x1="160.7" y1="343.48" x2="710.35" y2="343.48" stroke="#d0d1f6" stroke-width="0.6"/>
<line x1="160.7" y1="363.32" x2="710.35" y2="363.32" stroke="#d0d1f6" stroke-width="0.6"/>
<line x1="160.7" y1="383.16" x2="710.35" y2="383.16" stroke="#d0d1f6" stroke-width="0.6"/>
<line x1="160.7" y1="403" x2="710.35" y2="403" stroke="#d0d1f6" stroke-width="0.6"/>
<line x1="160.7" y1="303.8" x2="160.7" y2="403" stroke="#d0d1f6" stroke-width="0.6"/>
<line x1="215.66" y1="303.8" x2="215.66" y2="403" stroke="#d0d1f6" stroke-width="0.6"/>
<line x1="270.63" y1="303.8" x2="270.63" y2="403" stroke="#d0d1f6" stroke-width="0.6"/>
<line x1="325.6" y1="303.8" x2="325.6" y2="403" stroke="#d0d1f6" stroke-width="0.6"/>
<line x1="380.56" y1="303.8" x2="380.56" y2="403" stroke="#d0d1f6" stroke-width="0.6"/>
<line x1="435.53" y1="303.8" x2="435.53" y2="403" stroke="#d0d1f6" stroke-width="0.6"/>
<line x1="490.49" y1="303.8" x2="490.49" y2="403" stroke="#d0d1f6" stroke-width="0.6"/>
<line x1="545.46" y1="303.8" x2="545.46" y2="403" stroke="#d0d1f6" stroke-width="0.6"/>
<line x1="600.42" y1="303.8" x2="600.42" y2="403" stroke="#d0d1f6" stroke-width="0.6"/>
<line x1="655.38" y1="303.8" x2="655.38" y2="403" stroke="#d0d1f6" stroke-width="0.6"/>
<line x1="710.35" y1="303.8" x2="710.35" y2="403" stroke="#d0d1f6" stroke-width="0.6"/>
<path d="M160.7,344.19 L161.2,343.72 L161.7,345.61 L162.2,343.83 L162.7,344.88 L163.2,345.42 L163.7,344.58 L164.2,343.75 L164.7,344.62 L165.2,344.62 L165.7,343.87 L166.2,343.78 L166.7,344.38 L167.2,345.69 L167.7,345.58 L168.2,344.81 L168.69,343.48 L169.19,344.82 L169.69,345.1 L170.19,344.18 L170.69,344.47 L171.19,344.8 L171.69,345.07 L172.19,343.86 L172.69,343.84 L173.19,344.6 L173.69,345.17 L174.19,343.46 L174.69,345.04 L175.19,345.68 L175.69,345.56 L176.19,344.79 L176.69,343.73 L177.19,344.92 L177.69,344.54 L178.19,343.78 L178.69,344.43 L179.19,345.29 L179.69,345.19 L180.19,344.44 L180.69,344.92 L181.19,345.61 L181.69,343.5 L182.19,345.49 L182.69,343.59 L183.19,344.41 L183.69,345.4 L184.19,344.78 L184.68,343.55 L185.18,343.44 L185.68,344.43 L186.18,343.92 L186.68,345.65 L187.18,346.23 L187.68,345.04 L188.18,346.69 L188.68,345.7 L189.18,346.35 L189.68,346.34 L190.18,348.74 L190.68,347.7 L191.18,348.61 L191.68,349.68 L192.18,351.08 L192.68,351.37 L193.18,350.77 L193.68,350.69 L194.18,351.43 L194.68,350.62 L195.18,350.62 L195.68,351.66 L196.18,351.56 L196.68,351.04 L197.18,350.54 L197.68,351 L198.18,350.46 L198.68,351.49 L199.18,349.84 L199.68,350.67 L200.17,350.19 L200.67,351.23 L201.17,350.29 L201.67,349.95 L202.17,349.3 L202.67,349.15 L203.17,350.73 L203.67,349.93 L204.17,350.74 L204.67,349.33 L205.17,351.07 L205.67,350.99 L206.17,350.54 L206.67,350.34 L207.17,341 L207.67,351.04 L208.17,350.79 L208.67,349.47 L209.17,348.99 L209.67,348.39 L210.17,349.18 L210.67,349.87 L211.17,348.89 L211.67,349.52 L212.17,342.9 L212.67,343.23 L213.17,342.81 L213.67,343.23 L214.17,344.15 L214.67,344.57 L215.17,343.58 L215.66,344 L216.16,351.22 L216.66,351.15 L217.16,349.79 L217.66,350.88 L218.16,351.51 L218.66,350.8 L219.16,350.02 L219.66,349.95 L220.16,350.69 L220.66,351.26 L221.16,350.88 L221.66,350.21 L222.16,351.81 L222.66,350.16 L223.16,349.9 L223.66,350.02 L224.16,351.48 L224.66,350.89 L225.16,351.82 L225.66,350.57 L226.16,349.18 L226.66,348.83 L227.16,350.26 L227.66,348.87 L228.16,349.93 L228.66,352.1 L229.16,341.17 L229.66,340.19 L230.16,341.44 L230.66,340.59 L231.16,343.28 L231.65,340.67 L232.15,341.99 L232.65,341.07 L233.15,341.29 L233.65,340.34 L234.15,341.32 L234.65,340.49 L235.15,341.15 L235.65,340.17 L236.15,341.21 L236.65,341.97 L237.15,340.21 L237.65,350.94 L238.15,351.15 L238.65,352.5 L239.15,350.69 L239.65,351.28 L240.15,351.77 L240.65,352.54 L241.15,352.26 L241.65,350.74 L242.15,351.64 L242.65,351.48 L243.15,350.5 L243.65,350.08 L244.15,351.67 L244.65,351.56 L245.15,350.21 L245.65,351.77 L246.15,350.84 L246.65,352.11 L247.14,352.15 L247.64,350.38 L248.14,351.18 L248.64,351.05 L249.14,349.93 L249.64,350.65 L250.14,350.55 L250.64,350.23 L251.14,350.77 L251.64,348.85 L252.14,350 L252.64,343.15 L253.14,343 L253.64,343.03 L254.14,346.04 L254.64,343.32 L255.14,342.94 L255.64,343.01 L256.14,343.42 L256.64,349.45 L257.14,349.42 L257.64,350.16 L258.14,351.32 L258.64,350.43 L259.14,350.19 L259.64,350.37 L260.14,351.08 L260.64,350.82 L261.14,350.32 L261.64,350.78 L262.14,349.17 L262.64,348.97 L263.13,349.79 L263.63,351.11 L264.13,349.25 L264.63,351.07 L265.13,349.73 L265.63,351.03 L266.13,349.41 L266.63,350.31 L267.13,349.22 L267.63,350.64 L268.13,349.71 L268.63,350.24 L269.13,350.11 L269.63,348.96 L270.13,349.8 L270.63,351.06 L271.13,348.42 L271.63,348.65 L272.13,349.86 L272.63,349.52 L273.13,349.63 L273.63,350.52 L274.13,341.9 L274.63,342.36 L275.13,343.03 L275.63,342.27 L276.13,341.65 L276.63,341.29 L277.13,341.47 L277.63,341.53 L278.13,341.18 L278.62,341.2 L279.12,342.6 L279.62,343.06 L280.12,349.2 L280.62,349.1 L281.12,350.86 L281.62,350.75 L282.12,349.3 L282.62,349.04 L283.12,349.01 L283.62,350.39 L284.12,349.1 L284.62,350.69 L285.12,351.37 L285.62,350.67 L286.12,351.2 L286.62,351.43 L287.12,349.54 L287.62,348.69 L288.12,350.29 L288.62,348.67 L289.12,350.02 L289.62,350.22 L290.12,351.54 L290.62,341.94 L291.12,345.56 L291.62,342.1 L292.12,342.24 L292.62,342 L293.12,343.17 L293.62,349.67 L294.12,349.77 L294.61,349.66 L295.11,350.62 L295.61,351.25 L296.11,351.01 L296.61,351.94 L297.11,349.67 L297.61,350.31 L298.11,350.48 L298.61,350.56 L299.11,350.21 L299.61,350.46 L300.11,350.57 L300.61,351.22 L301.11,350.57 L301.61,351.15 L302.11,351.88 L302.61,351.55 L303.11,349.96 L303.61,351.13 L304.11,351.83 L304.61,351.47 L305.11,350.03 L305.61,350.38 L306.11,348.62 L306.61,350.56 L307.11,350.46 L307.61,349.81 L308.11,341.42 L308.61,343.16 L309.11,341.64 L309.61,341.86 L310.1,345.03 L310.6,341.39 L311.1,342.69 L311.6,345.29 L312.1,342.94 L312.6,345.49 L313.1,343.12 L313.6,341.54 L314.1,342.47 L314.6,349.27 L315.1,349.12 L315.6,350.41 L316.1,350.76 L316.6,350.93 L317.1,349.11 L317.6,350.77 L318.1,348.92 L318.6,349.3 L319.1,351.18 L319.6,349.99 L320.1,349.58 L320.6,350.51 L321.1,348.77 L321.6,350.57 L322.1,349.9 L322.6,349.9 L323.1,350.85 L323.6,350.63 L324.1,348.69 L324.6,350.4 L325.1,348.75 L325.6,350.24 L326.09,349.84 L326.59,350.73 L327.09,350.65 L327.59,349.23 L328.09,349.12 L328.59,349.19 L329.09,347.15 L329.59,348.88 L330.09,349.03 L330.59,342.85 L331.09,342.08 L331.59,342.23 L332.09,344.58 L332.59,345.89 L333.09,342.74 L333.59,342.65 L334.09,342.42 L334.59,342.72 L335.09,343.91 L335.59,350.57 L336.09,349.15 L336.59,349.21 L337.09,349.29 L337.59,348.78 L338.09,349.28 L338.59,349.55 L339.09,348.61 L339.59,350.4 L340.09,349.21 L340.59,349.52 L341.09,348.76 L341.58,348.93 L342.08,347.98 L342.58,348.56 L343.08,340.75 L343.58,340.49 L344.08,341.65 L344.58,341.36 L345.08,341.74 L345.58,342.23 L346.08,342.2 L346.58,341.23 L347.08,340.64 L347.58,344.6 L348.08,342.15 L348.58,341.95 L349.08,342.1 L349.58,344.06 L350.08,341.4 L350.58,341.92 L351.08,341.33 L351.58,341.19 L352.08,350.17 L352.58,350.89 L353.08,350.92 L353.58,349.3 L354.08,350.72 L354.58,350.97 L355.08,351.32 L355.58,349.36 L356.08,350.65 L356.58,349.41 L357.07,351.06 L357.57,351.12 L358.07,350.96 L358.57,350.94 L359.07,351.72 L359.57,351.05 L360.07,351.73 L360.57,350.38 L361.07,351.06 L361.57,350.16 L362.07,349.86 L362.57,349.95 L363.07,348.5 L363.57,349.66 L364.07,350.39 L364.57,349.39 L365.07,351.21 L365.57,342.15 L366.07,342.54 L366.57,343.45 L367.07,342.07 L367.57,342.22 L368.07,344.42 L368.57,351.22 L369.07,351.22 L369.57,349.92 L370.07,350.84 L370.57,349.72 L371.07,349.75 L371.57,350.41 L372.07,350.19 L372.57,349.61 L373.06,348.55 L373.56,348.43 L374.06,349.96 L374.56,341.69 L375.06,341.77 L375.56,342.15 L376.06,342.6 L376.56,342.91 L377.06,341.58 L377.56,341.58 L378.06,342.47 L378.56,342.06 L379.06,342.43 L379.56,342.49 L380.06,341.18 L380.56,340.98 L381.06,350.08 L381.56,349.91 L382.06,350.59 L382.56,351.09 L383.06,350.94 L383.56,348.87 L384.06,349.92 L384.56,349.59 L385.06,349.14 L385.56,347.61 L386.06,349.39 L386.56,348.61 L387.06,347.8 L387.56,348.86 L388.06,350.38 L388.55,342.42 L389.05,343.11 L389.55,345.72 L390.05,342.24 L390.55,342.41 L391.05,342.56 L391.55,342.39 L392.05,342.3 L392.55,349.71 L393.05,350.74 L393.55,349.33 L394.05,350.81 L394.55,349.07 L395.05,349.05 L395.55,349.22 L396.05,347.68 L396.55,348.56 L397.05,347.66 L397.55,348.89 L398.05,342.04 L398.55,340.57 L399.05,341.5 L399.55,341.36 L400.05,341.73 L400.55,340.46 L401.05,342.14 L401.55,340.48 L402.05,341.35 L402.55,349.88 L403.05,348.92 L403.55,349.89 L404.05,349.97 L404.54,349.11 L405.04,350.42 L405.54,349.7 L406.04,350.6 L406.54,351.19 L407.04,349.58 L407.54,349.6 L408.04,349.79 L408.54,350.82 L409.04,349.49 L409.54,350.71 L410.04,349.31 L410.54,349.63 L411.04,349.79 L411.54,351.18 L412.04,350.84 L412.54,350.24 L413.04,350.76 L413.54,350.19 L414.04,350.48 L414.54,348.95 L415.04,349.97 L415.54,350.02 L416.04,350.76 L416.54,341.8 L417.04,343.08 L417.54,343.38 L418.04,342.06 L418.54,341.55 L419.04,341.75 L419.54,352.17 L420.03,352.02 L420.53,350.87 L421.03,350.19 L421.53,352.28 L422.03,350.38 L422.53,351.66 L423.03,350.3 L423.53,349.97 L424.03,351.73 L424.53,350.15 L425.03,351.93 L425.53,349.88 L426.03,350.74 L426.53,350 L427.03,350.74 L427.53,331 L428.03,351.12 L428.53,342.42 L429.03,342.05 L429.53,341.98 L430.03,341.04 L430.53,341.97 L431.03,342.33 L431.53,341.49 L432.03,344.09 L432.53,342.48 L433.03,350.33 L433.53,351.56 L434.03,350.64 L434.53,351.92 L435.03,351.65 L435.53,351.87 L436.02,351.47 L436.52,351.25 L437.02,350.22 L437.52,351.19 L438.02,351.16 L438.52,352.01 L439.02,349.92 L439.52,351.61 L440.02,350.03 L440.52,351.5 L441.02,350.08 L441.52,349.1 L442.02,350.64 L442.52,350.13 L443.02,349.2 L443.52,349.4 L444.02,349.69 L444.52,343.26 L445.02,341.86 L445.52,341.89 L446.02,342.13 L446.52,342.99 L447.02,342.35 L447.52,342.31 L448.02,343.35 L448.52,341.97 L449.02,342.32 L449.52,342.61 L450.02,341.67 L450.52,351.51 L451.02,350.07 L451.51,350.44 L452.01,350.84 L452.51,349.61 L453.01,351.1 L453.51,350.26 L454.01,350.15 L454.51,349.76 L455.01,351.42 L455.51,349.82 L456.01,351.35 L456.51,349.95 L457.01,349.51 L457.51,349.77 L458.01,350.47 L458.51,349.83 L459.01,350.58 L459.51,350.62 L460.01,350.02 L460.51,350.74 L461.01,350.41 L461.51,350.51 L462.01,350.81 L462.51,349.54 L463.01,351.34 L463.51,350.08 L464.01,351.22 L464.51,347.93 L465.01,349.04 L465.51,348.23 L466.01,349.16 L466.51,348.97 L467,351.33 L467.5,342.16 L468,341.84 L468.5,341.77 L469,342.6 L469.5,342.84 L470,342.27 L470.5,341.81 L471,341.59 L471.5,342.25 L472,342.67 L472.5,350.88 L473,351.15 L473.5,350.39 L474,350.34 L474.5,351.7 L475,350.07 L475.5,350.31 L476,351.29 L476.5,350.03 L477,352 L477.5,351.98 L478,351.98 L478.5,350.41 L479,351.7 L479.5,350.97 L480,351.34 L480.5,351 L481,351.11 L481.5,350.54 L482,352.05 L482.5,351.86 L482.99,352.33 L483.49,350.35 L483.99,351.87 L484.49,350.04 L484.99,350.42 L485.49,351.24 L485.99,350.56 L486.49,349.11 L486.99,349.14 L487.49,351.08 L487.99,350.07 L488.49,350.24 L488.99,340.43 L489.49,342.17 L489.99,340.37 L490.49,341.1 L490.99,341.86 L491.49,341.37 L491.99,341.62 L492.49,340.59 L492.99,340.56 L493.49,343.8 L493.99,340.92 L494.49,340.32 L494.99,341.59 L495.49,350.03 L495.99,351.47 L496.49,352 L496.99,352.22 L497.49,352.3 L497.99,351.01 L498.48,350.3 L498.98,349.57 L499.48,350.5 L499.98,350.49 L500.48,351.57 L500.98,342.93 L501.48,342.62 L501.98,341.89 L502.48,342.9 L502.98,342.6 L503.48,342.77 L503.98,342.78 L504.48,342.82 L504.98,341.36 L505.48,341.24 L505.98,342.66 L506.48,341.7 L506.98,341.98 L507.48,350.61 L507.98,351.46 L508.48,350.8 L508.98,351.37 L509.48,350.87 L509.98,350.8 L510.48,350.43 L510.98,350.71 L511.48,349.37 L511.98,349.9 L512.48,351.04 L512.98,349.68 L513.48,348.09 L513.98,348.65 L514.47,349.03 L514.97,349.52 L515.47,349.67 L515.97,341.97 L516.47,343.32 L516.97,345.57 L517.47,343.31 L517.97,343.22 L518.47,342.22 L518.97,343.53 L519.47,349.88 L519.97,349.86 L520.47,349.32 L520.97,348.85 L521.47,348.71 L521.97,350.69 L522.47,349.99 L522.97,348.75 L523.47,349.53 L523.97,349.13 L524.47,348.05 L524.97,349.15 L525.47,348.25 L525.97,350.12 L526.47,340.81 L526.97,342.07 L527.47,341.29 L527.97,341.79 L528.47,340.89 L528.97,342.29 L529.47,340.95 L529.96,340.51 L530.46,340.82 L530.96,340.97 L531.46,340.79 L531.96,343.69 L532.46,340.72 L532.96,341.7 L533.46,341.6 L533.96,344.28 L534.46,350.73 L534.96,351.2 L535.46,350.76 L535.96,349.5 L536.46,350.12 L536.96,350.7 L537.46,350.55 L537.96,350.71 L538.46,349.98 L538.96,349.31 L539.46,349.7 L539.96,350.49 L540.46,351.43 L540.96,351.14 L541.46,349.45 L541.96,351.17 L542.46,351.14 L542.96,349.59 L543.46,351.71 L543.96,350.48 L544.46,351.19 L544.96,349.79 L545.46,351.07 L545.95,349.84 L546.45,350.32 L546.95,351.66 L547.45,349.69 L547.95,351.67 L548.45,351.67 L548.95,351.61 L549.45,350.37 L549.95,348.71 L550.45,348.94 L550.95,348.7 L551.45,348.78 L551.95,350.37 L552.45,340.86 L552.95,340.55 L553.45,341.95 L553.95,341.23 L554.45,340.81 L554.95,341.09 L555.45,340.55 L555.95,341.62 L556.45,341.15 L556.95,341.32 L557.45,341.88 L557.95,340.65 L558.45,341.15 L558.95,341.72 L559.45,343.02 L559.95,341.46 L560.45,341.75 L560.95,341.61 L561.44,340.75 L561.94,350.05 L562.44,350.87 L562.94,350.74 L563.44,349.42 L563.94,349.27 L564.44,350.23 L564.94,350.76 L565.44,350.16 L565.94,351.39 L566.44,349.96 L566.94,349.21 L567.44,349.03 L567.94,349.45 L568.44,350.87 L568.94,350.54 L569.44,350.91 L569.94,350.4 L570.44,349.95 L570.94,351.08 L571.44,349.58 L571.94,348.77 L572.44,350.65 L572.94,349.74 L573.44,350.3 L573.94,350.11 L574.44,349.95 L574.94,350.55 L575.44,348.64 L575.94,350.65 L576.44,347.67 L576.93,349.23 L577.43,347.65 L577.93,349.37 L578.43,348.93 L578.93,348.79 L579.43,342.57 L579.93,342.09 L580.43,341.95 L580.93,342.22 L581.43,342.86 L581.93,343.21 L582.43,342.52 L582.93,342.96 L583.43,345.43 L583.93,343.04 L584.43,343.25 L584.93,342.69 L585.43,342.08 L585.93,342.02 L586.43,348.95 L586.93,349.74 L587.43,348.43 L587.93,349.7 L588.43,349.69 L588.93,350.03 L589.43,350.61 L589.93,348.6 L590.43,349.55 L590.93,349.03 L591.43,350.07 L591.93,349.38 L592.43,350.5 L592.92,349.33 L593.42,349.66 L593.92,350.64 L594.42,349.34 L594.92,349.02 L595.42,349.74 L595.92,349.47 L596.42,350.15 L596.92,348.94 L597.42,347.5 L597.92,348.11 L598.42,348.12 L598.92,347.56 L599.42,348.92 L599.92,345.59 L600.42,342.56 L600.92,343.29 L601.42,342.32 L601.92,344.79 L602.42,342.02 L602.92,343.7 L603.42,342.16 L603.92,343.45 L604.42,344.64 L604.92,351.02 L605.42,350.06 L605.92,351.07 L606.42,351.02 L606.92,351.46 L607.42,351.25 L607.92,349.65 L608.41,350.72 L608.91,351.63 L609.41,350.88 L609.91,349.82 L610.41,351.05 L610.91,349.86 L611.41,351.7 L611.91,350.6 L612.41,351.19 L612.91,348.69 L613.41,349.91 L613.91,349.96 L614.41,349.98 L614.91,350.07 L615.41,350.89 L615.91,341.67 L616.41,342.78 L616.91,342.58 L617.41,341.42 L617.91,341.38 L618.41,341.9 L618.91,341.13 L619.41,342.15 L619.91,342.03 L620.41,342.47 L620.91,342.76 L621.41,341.61 L621.91,342.04 L622.41,350.57 L622.91,349.79 L623.41,351.74 L623.91,350.21 L624.4,349.54 L624.9,351.7 L625.4,351.13 L625.9,351.57 L626.4,351.33 L626.9,350.52 L627.4,349.56 L627.9,348.68 L628.4,350.38 L628.9,348.03 L629.4,349.84 L629.9,349.33 L630.4,349.28 L630.9,342.05 L631.4,342.46 L631.9,341.05 L632.4,341.79 L632.9,341.99 L633.4,342.74 L633.9,342.64 L634.4,341.35 L634.9,342.14 L635.4,349.56 L635.9,350.31 L636.4,349.75 L636.9,349.71 L637.4,350.79 L637.9,349.43 L638.4,349.92 L638.9,350.51 L639.4,349.13 L639.89,350.16 L640.39,350.39 L640.89,349.48 L641.39,349.67 L641.89,348.77 L642.39,348.79 L642.89,349.48 L643.39,349.84 L643.89,349.93 L644.39,348.03 L644.89,348.1 L645.39,349.16 L645.89,349.26 L646.39,348.7 L646.89,349.06 L647.39,343.71 L647.89,343.86 L648.39,343.03 L648.89,343.86 L649.39,342.62 L649.89,342.74 L650.39,343.55 L650.89,342.98 L651.39,345.87 L651.89,342.65 L652.39,342.63 L652.89,342.35 L653.39,342.61 L653.89,343.27 L654.39,350.01 L654.89,350.51 L655.39,349.61 L655.88,342 L656.38,349.52 L656.88,350.38 L657.38,350.13 L657.88,351.26 L658.38,351.21 L658.88,350.24 L659.38,349.3 L659.88,348.14 L660.38,350.12 L660.88,348.35 L661.38,348.41 L661.88,351.37 L662.38,346.72 L662.88,343.29 L663.38,342.81 L663.88,344.42 L664.38,343.6 L664.88,344.19 L665.38,343.34 L665.88,343.61 L666.38,343.05 L666.88,344.42 L667.38,344.17 L667.88,343.52 L668.38,344.06 L668.88,343.17 L669.38,343.25 L669.88,343.09 L670.38,343.29 L670.88,342.99 L671.37,343.79 L671.87,344.2 L672.37,343.39 L672.87,344.38 L673.37,350.95 L673.87,351.95 L674.37,352.08 L674.87,351.52 L675.37,350.44 L675.87,350.07 L676.37,350.31 L676.87,352.22 L677.37,351.45 L677.87,350.61 L678.37,350.21 L678.87,350.44 L679.37,349.39 L679.87,350.99 L680.37,352.48 L680.87,341.81 L681.37,342.51 L681.87,342.88 L682.37,342.29 L682.87,341.67 L683.37,343.03 L683.87,343 L684.37,342.87 L684.87,341.86 L685.37,342.24 L685.87,342.31 L686.37,350.77 L686.86,350.31 L687.36,350.98 L687.86,350.11 L688.36,350.36 L688.86,350.62 L689.36,348.99 L689.86,350.05 L690.36,348.73 L690.86,350.62 L691.36,351.47 L691.86,343.6 L692.36,343.4 L692.86,345.64 L693.36,342.23 L693.86,341.99 L694.36,342.32 L694.86,342.37 L695.36,342.76 L695.86,342.47 L696.36,342.7 L696.86,342.43 L697.36,342.54 L697.86,343.1 L698.36,343.38 L698.86,343.31 L699.36,342.02 L699.86,342.15 L700.36,351.62 L700.86,350.84 L701.36,351.38 L701.86,351.52 L702.36,350.91 L702.85,349.85 L703.35,349.94 L703.85,349.34 L704.35,351.36 L704.85,351.12 L705.35,350.18 L705.85,350.14 L706.35,350.33 L706.85,349.16 L707.35,350.2 L707.85,347.86 L708.35,350.13 L708.85,350.11 L709.35,349.4 L709.85,341.43" fill="none" stroke="#cf9a3c" stroke-width="0.7"/>
<path d="M160.7,373.3 H405 V373.7 H580 V374.1 H710.35" fill="none" stroke="#5fcc5f" stroke-width="0.9"/>
<path d="M160.7,386.96 L161.2,386.45 L161.7,386.08 L162.2,386.28 L162.7,387.1 L163.2,386.76 L163.7,386.87 L164.2,386.27 L164.7,386.54 L165.2,387.09 L165.7,386.73 L166.2,387.12 L166.7,387.19 L167.2,386.74 L167.7,386.24 L168.2,387.16 L168.69,387.06 L169.19,386.31 L169.69,386.18 L170.19,386.78 L170.69,387.08 L171.19,386.39 L171.69,386.49 L172.19,386.77 L172.69,386.86 L173.19,387.05 L173.69,386.87 L174.19,386.97 L174.69,386.63 L175.19,386.86 L175.69,386.68 L176.19,386.37 L176.69,386.96 L177.19,386.94 L177.69,386.45 L178.19,386.1 L178.69,386.74 L179.19,386.56 L179.69,386.06 L180.19,386.12 L180.69,386.79 L181.19,386.97 L181.69,386.88 L182.19,386.52 L182.69,386.62 L183.19,386.49 L183.69,386.29 L184.19,386.79 L184.68,386.73 L185.18,386.07 L185.68,386.94 L186.18,386.56 L186.68,386.95 L187.18,387.18 L187.68,386.19 L188.18,386.17 L188.68,386.6 L189.18,386.2 L189.68,386.19 L190.18,386.32 L190.68,386.1 L191.18,386.02 L191.68,386.99 L192.18,388.1 L192.68,388.07 L193.18,387.66 L193.68,387.91 L194.18,388.32 L194.68,387.94 L195.18,388.28 L195.68,388.15 L196.18,388.31 L196.68,387.68 L197.18,387.81 L197.68,387.83 L198.18,387.79 L198.68,387.65 L199.18,388.16 L199.68,387.8 L200.17,388.27 L200.67,387.76 L201.17,387.96 L201.67,388.14 L202.17,387.72 L202.67,388.38 L203.17,388.11 L203.67,387.98 L204.17,388.35 L204.67,387.97 L205.17,388.05 L205.67,387.76 L206.17,388.38 L206.67,388.33 L207.17,387.76 L207.67,387.7 L208.17,388.24 L208.67,387.68 L209.17,388.09 L209.67,388.24 L210.17,387.63 L210.67,387.85 L211.17,388.23 L211.67,388.12 L212.17,386.56 L212.67,385.87 L213.17,385.88 L213.67,386.08 L214.17,386.5 L214.67,386.27 L215.17,385.84 L215.66,386.27 L216.16,387.87 L216.66,387.8 L217.16,387.74 L217.66,388.17 L218.16,388.24 L218.66,388.38 L219.16,388 L219.66,387.68 L220.16,388.13 L220.66,388.13 L221.16,388.1 L221.66,387.92 L222.16,388.12 L222.66,387.89 L223.16,388.25 L223.66,387.67 L224.16,387.7 L224.66,388.33 L225.16,388.06 L225.66,388.21 L226.16,387.7 L226.66,388.07 L227.16,387.68 L227.66,388.18 L228.16,388.12 L228.66,388.1 L229.16,386.53 L229.66,385.94 L230.16,385.9 L230.66,386.02 L231.16,386.05 L231.65,386.32 L232.15,386.34 L232.65,386.58 L233.15,386 L233.65,386.04 L234.15,386.27 L234.65,386.31 L235.15,385.83 L235.65,386.02 L236.15,386.48 L236.65,386.58 L237.15,386.57 L237.65,387.61 L238.15,388.28 L238.65,388.05 L239.15,388.33 L239.65,387.63 L240.15,387.93 L240.65,387.93 L241.15,387.87 L241.65,387.76 L242.15,388.01 L242.65,388.32 L243.15,388.18 L243.65,387.95 L244.15,388.19 L244.65,387.78 L245.15,387.83 L245.65,387.87 L246.15,387.71 L246.65,388.08 L247.14,388.39 L247.64,388.25 L248.14,388.2 L248.64,388.36 L249.14,387.68 L249.64,387.77 L250.14,387.62 L250.64,387.67 L251.14,387.67 L251.64,388.26 L252.14,388.12 L252.64,385.92 L253.14,386.1 L253.64,386.11 L254.14,386.56 L254.64,386.47 L255.14,385.98 L255.64,385.91 L256.14,386.13 L256.64,387.87 L257.14,388.19 L257.64,387.7 L258.14,387.8 L258.64,388.35 L259.14,388.04 L259.64,387.79 L260.14,388.12 L260.64,387.92 L261.14,388.24 L261.64,387.82 L262.14,387.86 L262.64,387.78 L263.13,387.86 L263.63,388.09 L264.13,388.19 L264.63,387.71 L265.13,387.62 L265.63,387.78 L266.13,388.14 L266.63,388.24 L267.13,388.05 L267.63,387.89 L268.13,387.81 L268.63,388.27 L269.13,387.73 L269.63,387.88 L270.13,387.86 L270.63,387.94 L271.13,387.69 L271.63,387.94 L272.13,388.27 L272.63,387.9 L273.13,388.38 L273.63,387.61 L274.13,386.46 L274.63,386 L275.13,386.55 L275.63,386.59 L276.13,386.15 L276.63,386.26 L277.13,385.98 L277.63,386.19 L278.13,385.99 L278.62,386.14 L279.12,386.36 L279.62,385.9 L280.12,387.63 L280.62,388.38 L281.12,388.13 L281.62,387.97 L282.12,388.35 L282.62,388.25 L283.12,388.23 L283.62,388.27 L284.12,388.34 L284.62,388.34 L285.12,387.65 L285.62,388.17 L286.12,387.78 L286.62,387.61 L287.12,388.18 L287.62,387.87 L288.12,387.81 L288.62,387.72 L289.12,387.69 L289.62,388.29 L290.12,387.79 L290.62,386.28 L291.12,386.39 L291.62,386.57 L292.12,386.09 L292.62,385.93 L293.12,386.44 L293.62,387.95 L294.12,387.7 L294.61,387.99 L295.11,388.06 L295.61,388.05 L296.11,387.85 L296.61,388.21 L297.11,388.4 L297.61,388.32 L298.11,387.98 L298.61,388.28 L299.11,388 L299.61,387.99 L300.11,388.2 L300.61,387.6 L301.11,387.62 L301.61,388.27 L302.11,387.95 L302.61,387.88 L303.11,388.11 L303.61,388.19 L304.11,387.87 L304.61,387.96 L305.11,388.22 L305.61,388.09 L306.11,387.83 L306.61,387.98 L307.11,388.3 L307.61,388.36 L308.11,386.56 L308.61,386.5 L309.11,386.34 L309.61,386.48 L310.1,386.14 L310.6,386.08 L311.1,386.15 L311.6,386.43 L312.1,386.32 L312.6,386.48 L313.1,386.58 L313.6,386.09 L314.1,386.45 L314.6,388.24 L315.1,387.76 L315.6,388.34 L316.1,388.07 L316.6,388.25 L317.1,387.93 L317.6,387.67 L318.1,388.3 L318.6,388.37 L319.1,388.11 L319.6,388.12 L320.1,387.81 L320.6,387.88 L321.1,388.29 L321.6,388.25 L322.1,388.06 L322.6,387.66 L323.1,388.06 L323.6,387.76 L324.1,388.16 L324.6,388.05 L325.1,387.74 L325.6,388.24 L326.09,388.17 L326.59,388.39 L327.09,388 L327.59,388.01 L328.09,387.79 L328.59,388.13 L329.09,388.06 L329.59,387.77 L330.09,388.3 L330.59,386.42 L331.09,386.26 L331.59,386.43 L332.09,386.32 L332.59,386.28 L333.09,385.81 L333.59,386.13 L334.09,386.58 L334.59,386.32 L335.09,385.86 L335.59,388.38 L336.09,388.08 L336.59,387.84 L337.09,388.36 L337.59,388.4 L338.09,387.82 L338.59,387.96 L339.09,388.25 L339.59,388.36 L340.09,388.07 L340.59,388.07 L341.09,387.8 L341.58,387.69 L342.08,388.22 L342.58,387.93 L343.08,386.37 L343.58,386.46 L344.08,386.47 L344.58,386.02 L345.08,386.44 L345.58,386.04 L346.08,386.52 L346.58,386.13 L347.08,386.52 L347.58,386.42 L348.08,386.36 L348.58,385.83 L349.08,386.45 L349.58,385.83 L350.08,385.95 L350.58,386.52 L351.08,386.18 L351.58,386.58 L352.08,388.19 L352.58,387.85 L353.08,388.01 L353.58,387.71 L354.08,387.68 L354.58,387.77 L355.08,387.74 L355.58,388.07 L356.08,388.17 L356.58,388.01 L357.07,388.28 L357.57,388.36 L358.07,388.09 L358.57,387.93 L359.07,388.29 L359.57,387.98 L360.07,387.87 L360.57,387.83 L361.07,387.62 L361.57,387.96 L362.07,388.21 L362.57,388.05 L363.07,387.72 L363.57,388.27 L364.07,388.28 L364.57,388.09 L365.07,387.66 L365.57,385.91 L366.07,385.87 L366.57,386.27 L367.07,386.51 L367.57,386.03 L368.07,385.96 L368.57,387.97 L369.07,387.66 L369.57,387.77 L370.07,387.63 L370.57,387.78 L371.07,387.61 L371.57,387.91 L372.07,388.29 L372.57,388.28 L373.06,388.04 L373.56,388.17 L374.06,387.62 L374.56,385.81 L375.06,385.96 L375.56,386.15 L376.06,386.4 L376.56,386.1 L377.06,386.34 L377.56,386.48 L378.06,385.91 L378.56,386.53 L379.06,386.51 L379.56,386.33 L380.06,385.81 L380.56,386.42 L381.06,388.06 L381.56,388.39 L382.06,387.71 L382.56,387.84 L383.06,388.06 L383.56,387.89 L384.06,388.32 L384.56,388.19 L385.06,387.76 L385.56,388.31 L386.06,387.65 L386.56,388.12 L387.06,387.69 L387.56,388.28 L388.06,387.76 L388.55,385.9 L389.05,385.98 L389.55,386.38 L390.05,386.47 L390.55,386.58 L391.05,386.51 L391.55,386.24 L392.05,386.57 L392.55,387.63 L393.05,387.87 L393.55,388.3 L394.05,388.28 L394.55,388.23 L395.05,387.61 L395.55,387.93 L396.05,387.62 L396.55,388 L397.05,388.07 L397.55,388.22 L398.05,386.39 L398.55,386.44 L399.05,386.57 L399.55,386.38 L400.05,386.29 L400.55,386.09 L401.05,386.1 L401.55,385.9 L402.05,386.05 L402.55,387.66 L403.05,387.87 L403.55,387.79 L404.05,388.03 L404.54,388.22 L405.04,387.99 L405.54,387.86 L406.04,388.25 L406.54,387.93 L407.04,388.32 L407.54,388.19 L408.04,387.71 L408.54,388.12 L409.04,388.38 L409.54,387.98 L410.04,388.22 L410.54,388.28 L411.04,388.01 L411.54,387.73 L412.04,388.29 L412.54,388.3 L413.04,387.93 L413.54,388.23 L414.04,387.8 L414.54,388.34 L415.04,388.11 L415.54,388.05 L416.04,388.35 L416.54,385.85 L417.04,386.58 L417.54,385.98 L418.04,386.17 L418.54,386.05 L419.04,386.3 L419.54,387.79 L420.03,387.88 L420.53,388.25 L421.03,388.29 L421.53,388.24 L422.03,388.23 L422.53,388.08 L423.03,387.73 L423.53,388.11 L424.03,388.32 L424.53,388.2 L425.03,388.22 L425.53,388.09 L426.03,388.27 L426.53,387.61 L427.03,388.23 L427.53,383.8 L428.03,387.66 L428.53,386.36 L429.03,385.86 L429.53,386.34 L430.03,386.01 L430.53,386.18 L431.03,386.24 L431.53,386.22 L432.03,386.59 L432.53,386.5 L433.03,387.81 L433.53,388.05 L434.03,388.16 L434.53,388.06 L435.03,388.38 L435.53,388.09 L436.02,388.1 L436.52,388.31 L437.02,388.12 L437.52,387.82 L438.02,388.18 L438.52,387.63 L439.02,388.09 L439.52,388.2 L440.02,388.39 L440.52,388.16 L441.02,388.03 L441.52,388.21 L442.02,388.3 L442.52,387.86 L443.02,387.65 L443.52,388.38 L444.02,388.01 L444.52,386.09 L445.02,386.54 L445.52,386.01 L446.02,386.03 L446.52,386.16 L447.02,386.07 L447.52,386.37 L448.02,385.82 L448.52,386.59 L449.02,385.85 L449.52,386.36 L450.02,385.87 L450.52,388.25 L451.02,387.8 L451.51,388.28 L452.01,388.38 L452.51,388.23 L453.01,388.03 L453.51,388.21 L454.01,388.02 L454.51,387.7 L455.01,388.27 L455.51,388.32 L456.01,388.31 L456.51,387.98 L457.01,387.95 L457.51,387.78 L458.01,388.03 L458.51,388.05 L459.01,387.87 L459.51,388.18 L460.01,387.8 L460.51,388.26 L461.01,388.13 L461.51,388.35 L462.01,387.75 L462.51,388.28 L463.01,388.33 L463.51,387.69 L464.01,387.82 L464.51,388.11 L465.01,388.27 L465.51,387.66 L466.01,387.86 L466.51,387.92 L467,388.01 L467.5,386.49 L468,386.52 L468.5,386.29 L469,386.04 L469.5,386.52 L470,385.87 L470.5,386.16 L471,386.59 L471.5,386.07 L472,385.83 L472.5,388.07 L473,388.29 L473.5,388.24 L474,387.93 L474.5,387.69 L475,388.26 L475.5,387.68 L476,387.64 L476.5,388.05 L477,387.68 L477.5,388.07 L478,388.08 L478.5,388.05 L479,387.88 L479.5,387.94 L480,387.86 L480.5,387.66 L481,387.85 L481.5,387.82 L482,387.6 L482.5,388.29 L482.99,388.24 L483.49,388.24 L483.99,387.69 L484.49,387.92 L484.99,388.07 L485.49,387.69 L485.99,388.32 L486.49,388 L486.99,388.2 L487.49,388.28 L487.99,388.21 L488.49,387.76 L488.99,386 L489.49,386.5 L489.99,386.58 L490.49,386.21 L490.99,386.13 L491.49,385.96 L491.99,385.93 L492.49,386.41 L492.99,385.93 L493.49,385.94 L493.99,386.26 L494.49,386.44 L494.99,386.5 L495.49,387.7 L495.99,388.01 L496.49,388.04 L496.99,387.86 L497.49,387.96 L497.99,388.01 L498.48,387.61 L498.98,388.09 L499.48,388.2 L499.98,388.28 L500.48,388.11 L500.98,385.88 L501.48,386.19 L501.98,386.59 L502.48,386.39 L502.98,386.19 L503.48,386.44 L503.98,386.21 L504.48,386.52 L504.98,385.8 L505.48,386.15 L505.98,386.5 L506.48,386.25 L506.98,385.98 L507.48,388.13 L507.98,388.07 L508.48,387.68 L508.98,388.13 L509.48,387.89 L509.98,387.67 L510.48,387.62 L510.98,388.17 L511.48,388.05 L511.98,388.14 L512.48,387.61 L512.98,388.34 L513.48,387.84 L513.98,387.81 L514.47,387.82 L514.97,387.82 L515.47,388.15 L515.97,386.14 L516.47,385.89 L516.97,386.39 L517.47,386.51 L517.97,385.98 L518.47,386.21 L518.97,386.06 L519.47,388.01 L519.97,387.98 L520.47,388.22 L520.97,388.26 L521.47,388.11 L521.97,387.71 L522.47,388.34 L522.97,388.39 L523.47,387.68 L523.97,388.18 L524.47,388.28 L524.97,387.88 L525.47,387.98 L525.97,388.22 L526.47,386.31 L526.97,386.31 L527.47,386.41 L527.97,385.83 L528.47,385.9 L528.97,385.81 L529.47,386.13 L529.96,385.89 L530.46,386.37 L530.96,386.14 L531.46,385.86 L531.96,386.16 L532.46,386.53 L532.96,385.93 L533.46,386.4 L533.96,386.48 L534.46,388.04 L534.96,387.79 L535.46,387.95 L535.96,388.1 L536.46,388.13 L536.96,388.17 L537.46,388.31 L537.96,388.3 L538.46,388.37 L538.96,387.92 L539.46,388.26 L539.96,387.6 L540.46,388.22 L540.96,388.2 L541.46,388.26 L541.96,387.89 L542.46,388.02 L542.96,388.28 L543.46,387.79 L543.96,388.32 L544.46,387.81 L544.96,388.04 L545.46,387.96 L545.95,387.61 L546.45,388.39 L546.95,388.04 L547.45,387.7 L547.95,387.7 L548.45,387.61 L548.95,387.86 L549.45,387.76 L549.95,387.63 L550.45,387.84 L550.95,388.01 L551.45,387.89 L551.95,388.09 L552.45,386.47 L552.95,386.42 L553.45,385.99 L553.95,386.5 L554.45,386.37 L554.95,386.53 L555.45,386.24 L555.95,386.24 L556.45,386.28 L556.95,385.91 L557.45,386.38 L557.95,385.87 L558.45,386.08 L558.95,386.55 L559.45,386.06 L559.95,386 L560.45,386.23 L560.95,386.04 L561.44,386.47 L561.94,388.06 L562.44,387.65 L562.94,388.06 L563.44,388.33 L563.94,387.67 L564.44,388.27 L564.94,388.07 L565.44,388.06 L565.94,388.15 L566.44,387.76 L566.94,387.6 L567.44,387.8 L567.94,387.91 L568.44,387.62 L568.94,388.19 L569.44,387.77 L569.94,388.2 L570.44,387.81 L570.94,388.2 L571.44,388.37 L571.94,387.93 L572.44,387.86 L572.94,388.07 L573.44,387.95 L573.94,387.66 L574.44,388.01 L574.94,387.81 L575.44,387.68 L575.94,388.26 L576.44,388.11 L576.93,388.34 L577.43,388.05 L577.93,388.17 L578.43,387.78 L578.93,388.25 L579.43,386.08 L579.93,386.04 L580.43,385.83 L580.93,386.13 L581.43,386.46 L581.93,386.49 L582.43,385.96 L582.93,386.29 L583.43,386.08 L583.93,386.3 L584.43,386.39 L584.93,386.45 L585.43,386.5 L585.93,386.34 L586.43,388.33 L586.93,388.35 L587.43,388.39 L587.93,387.69 L588.43,388.38 L588.93,387.82 L589.43,387.7 L589.93,387.97 L590.43,387.75 L590.93,388.32 L591.43,387.8 L591.93,387.77 L592.43,388.26 L592.92,388.3 L593.42,387.93 L593.92,388.11 L594.42,387.68 L594.92,387.94 L595.42,387.71 L595.92,387.66 L596.42,387.82 L596.92,387.61 L597.42,387.66 L597.92,388.22 L598.42,388.2 L598.92,387.65 L599.42,387.81 L599.92,385.81 L600.42,386.46 L600.92,386.33 L601.42,385.95 L601.92,386.13 L602.42,386.38 L602.92,386.37 L603.42,386.22 L603.92,385.92 L604.42,385.88 L604.92,387.82 L605.42,388.14 L605.92,388.1 L606.42,387.87 L606.92,388.04 L607.42,387.76 L607.92,388.21 L608.41,387.62 L608.91,388.08 L609.41,387.83 L609.91,387.61 L610.41,388.18 L610.91,387.92 L611.41,388.13 L611.91,387.66 L612.41,388.15 L612.91,388.09 L613.41,387.83 L613.91,387.7 L614.41,387.94 L614.91,388.06 L615.41,387.65 L615.91,386.4 L616.41,386.48 L616.91,386.06 L617.41,386.24 L617.91,386.46 L618.41,386.2 L618.91,386.24 L619.41,386.49 L619.91,385.9 L620.41,386.35 L620.91,385.86 L621.41,386.44 L621.91,386.16 L622.41,388.17 L622.91,387.92 L623.41,388.11 L623.91,387.88 L624.4,387.81 L624.9,388.1 L625.4,387.93 L625.9,388.31 L626.4,388.3 L626.9,387.6 L627.4,387.88 L627.9,387.66 L628.4,387.65 L628.9,388.26 L629.4,388.09 L629.9,388.35 L630.4,387.6 L630.9,386.1 L631.4,385.94 L631.9,385.84 L632.4,386.17 L632.9,386.03 L633.4,386.31 L633.9,385.94 L634.4,386.58 L634.9,386.04 L635.4,387.75 L635.9,387.82 L636.4,387.96 L636.9,387.77 L637.4,388.35 L637.9,387.88 L638.4,388.27 L638.9,388.17 L639.4,387.98 L639.89,388.39 L640.39,387.66 L640.89,387.91 L641.39,388.07 L641.89,387.71 L642.39,388 L642.89,387.83 L643.39,387.65 L643.89,388.27 L644.39,388.34 L644.89,388.15 L645.39,387.97 L645.89,388.12 L646.39,388.03 L646.89,388.23 L647.39,385.95 L647.89,386.23 L648.39,386.56 L648.89,386.05 L649.39,386.32 L649.89,386.56 L650.39,386.21 L650.89,385.91 L651.39,386.24 L651.89,385.8 L652.39,386.57 L652.89,386.48 L653.39,385.93 L653.89,386.13 L654.39,387.65 L654.89,387.97 L655.39,387.74 L655.88,388.07 L656.38,388.11 L656.88,387.89 L657.38,387.87 L657.88,387.84 L658.38,387.96 L658.88,388.15 L659.38,387.99 L659.88,388.06 L660.38,388.3 L660.88,388.22 L661.38,388.1 L661.88,387.86 L662.38,386.52 L662.88,386.06 L663.38,386.41 L663.88,386.41 L664.38,386.17 L664.88,386.13 L665.38,386.26 L665.88,386.35 L666.38,386.43 L666.88,386.52 L667.38,386.5 L667.88,386.39 L668.38,386.24 L668.88,386.06 L669.38,386.22 L669.88,386.42 L670.38,386.29 L670.88,386.43 L671.37,386.2 L671.87,386.09 L672.37,385.94 L672.87,385.87 L673.37,387.63 L673.87,387.93 L674.37,387.68 L674.87,387.71 L675.37,387.69 L675.87,388.11 L676.37,388 L676.87,387.91 L677.37,388.1 L677.87,387.74 L678.37,387.88 L678.87,388.13 L679.37,388.31 L679.87,388.22 L680.37,387.68 L680.87,386.5 L681.37,386.22 L681.87,386.04 L682.37,385.89 L682.87,385.85 L683.37,386.43 L683.87,386.13 L684.37,386.14 L684.87,386.02 L685.37,386.49 L685.87,386.03 L686.37,388.1 L686.86,387.71 L687.36,388.04 L687.86,387.89 L688.36,387.62 L688.86,387.6 L689.36,388.25 L689.86,388.13 L690.36,387.77 L690.86,387.81 L691.36,388.16 L691.86,386.11 L692.36,386.15 L692.86,385.86 L693.36,385.98 L693.86,386.07 L694.36,386.1 L694.86,386.58 L695.36,386.13 L695.86,386.34 L696.36,386.23 L696.86,386.39 L697.36,386.42 L697.86,386.31 L698.36,386.37 L698.86,386.02 L699.36,386.13 L699.86,386.37 L700.36,388.31 L700.86,388.33 L701.36,388.06 L701.86,388.05 L702.36,387.63 L702.85,387.91 L703.35,388.19 L703.85,388.1 L704.35,388.35 L704.85,388.21 L705.35,387.66 L705.85,387.96 L706.35,387.69 L706.85,388.37 L707.35,387.79 L707.85,388.08 L708.35,387.68 L708.85,387.61 L709.35,387.8 L709.85,386.14" fill="none" stroke="#c83cc8" stroke-width="0.75"/>
<line x1="160.7" y1="303.8" x2="160.7" y2="403" stroke="#8686e8" stroke-width="1.25"/>
<line x1="710.35" y1="303.8" x2="710.35" y2="403" stroke="#7f82cf" stroke-width="1.3"/>
<line x1="160.7" y1="403" x2="710.35" y2="403" stroke="#9ca2e6" stroke-width="1"/>
<line x1="157.4" y1="403" x2="160.7" y2="403" stroke="#a4a8dc" stroke-width="0.6"/>
<text x="157.1" y="404.6" font-family="Liberation Mono" font-size="4.85" fill="#8d92c6" text-anchor="end" font-weight="normal" textLength="2.2" lengthAdjust="spacingAndGlyphs">0</text>
<line x1="160" y1="399.03" x2="161.4" y2="399.03" stroke="#5a5ec0" stroke-width="0.8"/>
<line x1="160" y1="395.06" x2="161.4" y2="395.06" stroke="#5a5ec0" stroke-width="0.8"/>
<line x1="160" y1="391.1" x2="161.4" y2="391.1" stroke="#5a5ec0" stroke-width="0.8"/>
<line x1="160" y1="387.13" x2="161.4" y2="387.13" stroke="#5a5ec0" stroke-width="0.8"/>
<line x1="157.4" y1="383.16" x2="160.7" y2="383.16" stroke="#a4a8dc" stroke-width="0.6"/>
<text x="157.1" y="384.76" font-family="Liberation Mono" font-size="4.85" fill="#8d92c6" text-anchor="end" font-weight="normal" textLength="8.8" lengthAdjust="spacingAndGlyphs">2500</text>
<line x1="160" y1="379.19" x2="161.4" y2="379.19" stroke="#5a5ec0" stroke-width="0.8"/>
<line x1="160" y1="375.22" x2="161.4" y2="375.22" stroke="#5a5ec0" stroke-width="0.8"/>
<line x1="160" y1="371.26" x2="161.4" y2="371.26" stroke="#5a5ec0" stroke-width="0.8"/>
<line x1="160" y1="367.29" x2="161.4" y2="367.29" stroke="#5a5ec0" stroke-width="0.8"/>
<line x1="157.4" y1="363.32" x2="160.7" y2="363.32" stroke="#a4a8dc" stroke-width="0.6"/>
<text x="157.1" y="364.92" font-family="Liberation Mono" font-size="4.85" fill="#8d92c6" text-anchor="end" font-weight="normal" textLength="8.8" lengthAdjust="spacingAndGlyphs">5000</text>
<line x1="160" y1="359.35" x2="161.4" y2="359.35" stroke="#5a5ec0" stroke-width="0.8"/>
<line x1="160" y1="355.38" x2="161.4" y2="355.38" stroke="#5a5ec0" stroke-width="0.8"/>
<line x1="160" y1="351.42" x2="161.4" y2="351.42" stroke="#5a5ec0" stroke-width="0.8"/>
<line x1="160" y1="347.45" x2="161.4" y2="347.45" stroke="#5a5ec0" stroke-width="0.8"/>
<line x1="157.4" y1="343.48" x2="160.7" y2="343.48" stroke="#a4a8dc" stroke-width="0.6"/>
<text x="157.1" y="345.08" font-family="Liberation Mono" font-size="4.85" fill="#8d92c6" text-anchor="end" font-weight="normal" textLength="8.8" lengthAdjust="spacingAndGlyphs">7500</text>
<line x1="160" y1="339.51" x2="161.4" y2="339.51" stroke="#5a5ec0" stroke-width="0.8"/>
<line x1="160" y1="335.54" x2="161.4" y2="335.54" stroke="#5a5ec0" stroke-width="0.8"/>
<line x1="160" y1="331.58" x2="161.4" y2="331.58" stroke="#5a5ec0" stroke-width="0.8"/>
<line x1="160" y1="327.61" x2="161.4" y2="327.61" stroke="#5a5ec0" stroke-width="0.8"/>
<line x1="157.4" y1="323.64" x2="160.7" y2="323.64" stroke="#a4a8dc" stroke-width="0.6"/>
<text x="157.1" y="325.24" font-family="Liberation Mono" font-size="4.85" fill="#8d92c6" text-anchor="end" font-weight="normal" textLength="11" lengthAdjust="spacingAndGlyphs">10000</text>
<line x1="160" y1="319.67" x2="161.4" y2="319.67" stroke="#5a5ec0" stroke-width="0.8"/>
<line x1="160" y1="315.7" x2="161.4" y2="315.7" stroke="#5a5ec0" stroke-width="0.8"/>
<line x1="160" y1="311.74" x2="161.4" y2="311.74" stroke="#5a5ec0" stroke-width="0.8"/>
<line x1="160" y1="307.77" x2="161.4" y2="307.77" stroke="#5a5ec0" stroke-width="0.8"/>
<line x1="157.4" y1="303.8" x2="160.7" y2="303.8" stroke="#a4a8dc" stroke-width="0.6"/>
<text x="157.1" y="305.4" font-family="Liberation Mono" font-size="4.85" fill="#8d92c6" text-anchor="end" font-weight="normal" textLength="11" lengthAdjust="spacingAndGlyphs">12500</text>
<line x1="160.7" y1="403" x2="160.7" y2="404.8" stroke="#a4a8dc" stroke-width="0.6"/>
<line x1="188.18" y1="403" x2="188.18" y2="404.5" stroke="#a4a8dc" stroke-width="0.6"/>
<text x="160.7" y="409.6" font-family="Liberation Mono" font-size="4.85" fill="#8d92c6" text-anchor="middle" font-weight="normal" textLength="11.4" lengthAdjust="spacingAndGlyphs">00:00</text>
<line x1="215.66" y1="403" x2="215.66" y2="404.8" stroke="#a4a8dc" stroke-width="0.6"/>
<line x1="243.15" y1="403" x2="243.15" y2="404.5" stroke="#a4a8dc" stroke-width="0.6"/>
<text x="215.66" y="409.6" font-family="Liberation Mono" font-size="4.85" fill="#8d92c6" text-anchor="middle" font-weight="normal" textLength="11.4" lengthAdjust="spacingAndGlyphs">03:17</text>
<line x1="270.63" y1="403" x2="270.63" y2="404.8" stroke="#a4a8dc" stroke-width="0.6"/>
<line x1="298.11" y1="403" x2="298.11" y2="404.5" stroke="#a4a8dc" stroke-width="0.6"/>
<text x="270.63" y="409.6" font-family="Liberation Mono" font-size="4.85" fill="#8d92c6" text-anchor="middle" font-weight="normal" textLength="11.4" lengthAdjust="spacingAndGlyphs">06:34</text>
<line x1="325.6" y1="403" x2="325.6" y2="404.8" stroke="#a4a8dc" stroke-width="0.6"/>
<line x1="353.08" y1="403" x2="353.08" y2="404.5" stroke="#a4a8dc" stroke-width="0.6"/>
<text x="325.6" y="409.6" font-family="Liberation Mono" font-size="4.85" fill="#8d92c6" text-anchor="middle" font-weight="normal" textLength="11.4" lengthAdjust="spacingAndGlyphs">09:52</text>
<line x1="380.56" y1="403" x2="380.56" y2="404.8" stroke="#a4a8dc" stroke-width="0.6"/>
<line x1="408.04" y1="403" x2="408.04" y2="404.5" stroke="#a4a8dc" stroke-width="0.6"/>
<text x="380.56" y="409.6" font-family="Liberation Mono" font-size="4.85" fill="#8d92c6" text-anchor="middle" font-weight="normal" textLength="11.4" lengthAdjust="spacingAndGlyphs">13:09</text>
<line x1="435.53" y1="403" x2="435.53" y2="404.8" stroke="#a4a8dc" stroke-width="0.6"/>
<line x1="463.01" y1="403" x2="463.01" y2="404.5" stroke="#a4a8dc" stroke-width="0.6"/>
<text x="435.53" y="409.6" font-family="Liberation Mono" font-size="4.85" fill="#8d92c6" text-anchor="middle" font-weight="normal" textLength="11.4" lengthAdjust="spacingAndGlyphs">16:26</text>
<line x1="490.49" y1="403" x2="490.49" y2="404.8" stroke="#a4a8dc" stroke-width="0.6"/>
<line x1="517.97" y1="403" x2="517.97" y2="404.5" stroke="#a4a8dc" stroke-width="0.6"/>
<text x="490.49" y="409.6" font-family="Liberation Mono" font-size="4.85" fill="#8d92c6" text-anchor="middle" font-weight="normal" textLength="11.4" lengthAdjust="spacingAndGlyphs">19:43</text>
<line x1="545.46" y1="403" x2="545.46" y2="404.8" stroke="#a4a8dc" stroke-width="0.6"/>
<line x1="572.94" y1="403" x2="572.94" y2="404.5" stroke="#a4a8dc" stroke-width="0.6"/>
<text x="545.46" y="409.6" font-family="Liberation Mono" font-size="4.85" fill="#8d92c6" text-anchor="middle" font-weight="normal" textLength="11.4" lengthAdjust="spacingAndGlyphs">23:00</text>
<line x1="600.42" y1="403" x2="600.42" y2="404.8" stroke="#a4a8dc" stroke-width="0.6"/>
<line x1="627.9" y1="403" x2="627.9" y2="404.5" stroke="#a4a8dc" stroke-width="0.6"/>
<text x="600.42" y="409.6" font-family="Liberation Mono" font-size="4.85" fill="#8d92c6" text-anchor="middle" font-weight="normal" textLength="11.4" lengthAdjust="spacingAndGlyphs">26:18</text>
<line x1="655.38" y1="403" x2="655.38" y2="404.8" stroke="#a4a8dc" stroke-width="0.6"/>
<line x1="682.87" y1="403" x2="682.87" y2="404.5" stroke="#a4a8dc" stroke-width="0.6"/>
<text x="655.38" y="409.6" font-family="Liberation Mono" font-size="4.85" fill="#8d92c6" text-anchor="middle" font-weight="normal" textLength="11.4" lengthAdjust="spacingAndGlyphs">29:35</text>
<line x1="710.35" y1="403" x2="710.35" y2="404.8" stroke="#a4a8dc" stroke-width="0.6"/>
<text x="710.35" y="409.6" font-family="Liberation Mono" font-size="4.85" fill="#8d92c6" text-anchor="middle" font-weight="normal" textLength="11.4" lengthAdjust="spacingAndGlyphs">32:52</text>
<text x="162.2" y="345.2" font-family="Liberation Mono" font-size="5" fill="#4a4af4" text-anchor="start" font-weight="normal" textLength="36.4" lengthAdjust="spacingAndGlyphs">Time:00:00-32:49</text>
<text x="162.2" y="349.5" font-family="Liberation Mono" font-size="5" fill="#4a4af4" text-anchor="start" font-weight="normal" textLength="49.6" lengthAdjust="spacingAndGlyphs">Avg(current):1901.59mA</text>
<text x="162.2" y="353.8" font-family="Liberation Mono" font-size="5" fill="#4a4af4" text-anchor="start" font-weight="normal" textLength="49.2" lengthAdjust="spacingAndGlyphs">Avg(voltage):3800.15mV</text>
<text x="162.2" y="358.1" font-family="Liberation Mono" font-size="5" fill="#4a4af4" text-anchor="start" font-weight="normal" textLength="45" lengthAdjust="spacingAndGlyphs">Avg(power):7243.43mW</text>
<text x="433.9" y="52.9" font-family="Liberation Serif" font-size="6.4" fill="#4e5492" text-anchor="start" font-weight="bold" textLength="10" lengthAdjust="spacingAndGlyphs">FPS</text>
<text x="424" y="176.7" font-family="Liberation Mono" font-size="6.1" fill="#4e5492" text-anchor="start" font-weight="bold" textLength="29.3" lengthAdjust="spacingAndGlyphs">CPU Clock</text>
<text x="427.5" y="300.6" font-family="Liberation Mono" font-size="6.1" fill="#4e5492" text-anchor="start" font-weight="bold" textLength="22.8" lengthAdjust="spacingAndGlyphs">Battery</text>
<g transform="translate(145.0,105.9) rotate(-90)"><text x="0" y="0" font-family="Liberation Mono" font-size="5.6" fill="#8d92c6" text-anchor="middle" font-weight="normal" textLength="8.2" lengthAdjust="spacingAndGlyphs">FPS</text></g>
<g transform="translate(145.0,229.9) rotate(-90)"><text x="0" y="0" font-family="Liberation Mono" font-size="5.6" fill="#8d92c6" text-anchor="middle" font-weight="normal" textLength="8.2" lengthAdjust="spacingAndGlyphs">MHz</text></g>
<rect x="718" y="57.2" width="3.8" height="3.6" fill="#f03c5a"/>
<text x="724.1" y="60.7" font-family="Liberation Mono" font-size="4.6" fill="#9a9ed0" text-anchor="start" font-weight="normal" textLength="6.4" lengthAdjust="spacingAndGlyphs">FPS</text>
<rect x="718" y="181" width="4.7" height="3.6" fill="#10c810"/>
<text x="724.1" y="184.5" font-family="Liberation Mono" font-size="4.6" fill="#9a9ed0" text-anchor="start" font-weight="normal" textLength="15.6" lengthAdjust="spacingAndGlyphs">cpu0-3</text>
<rect x="718" y="188" width="4.7" height="3.6" fill="#d89c20"/>
<text x="724.1" y="191.5" font-family="Liberation Mono" font-size="4.6" fill="#9a9ed0" text-anchor="start" font-weight="normal" textLength="15.6" lengthAdjust="spacingAndGlyphs">cpu4-6</text>
<rect x="718" y="195" width="4.7" height="3.6" fill="#b844f2"/>
<text x="724.1" y="198.5" font-family="Liberation Mono" font-size="4.6" fill="#9a9ed0" text-anchor="start" font-weight="normal" textLength="11" lengthAdjust="spacingAndGlyphs">cpu7</text>
<rect x="718" y="304.7" width="4.7" height="3.6" fill="#d014c8"/>
<text x="724.1" y="308.2" font-family="Liberation Mono" font-size="4.6" fill="#9a9ed0" text-anchor="start" font-weight="normal" textLength="15.6" lengthAdjust="spacingAndGlyphs">current</text>
<rect x="718" y="312" width="4.7" height="3.6" fill="#10c810"/>
<text x="724.1" y="315.5" font-family="Liberation Mono" font-size="4.6" fill="#9a9ed0" text-anchor="start" font-weight="normal" textLength="15.6" lengthAdjust="spacingAndGlyphs">voltage</text>
<rect x="718" y="318.8" width="4.7" height="3.6" fill="#d89c20"/>
<text x="724.1" y="322.3" font-family="Liberation Mono" font-size="4.6" fill="#9a9ed0" text-anchor="start" font-weight="normal" textLength="10.6" lengthAdjust="spacingAndGlyphs">power</text>
<!-- slider -->
<rect x="157" y="428.2" width="552" height="2.1" fill="#6f7bd6"/>
<rect x="154.6" y="425.9" width="12" height="6.8" rx="2.6" fill="#777"/>
<rect x="705.2" y="426.1" width="11.8" height="6.9" rx="2.6" fill="#5e5e5e"/>
<!-- watermark -->
<g fill="none" stroke="#a4a4a4" stroke-opacity="0.62" stroke-width="2.75" stroke-linecap="round">
<path d="M668,402.6 C659,402.8 652.6,409.5 652.6,417 C652.6,421 654,424.6 656,427"/>
<path d="M670.5,407.2 C663,407.4 658.6,411.5 658.6,416.6 C658.6,419.6 660,422.6 662,424.6"/>
<path d="M669,412.8 C666.4,413.6 664.6,415 664.6,417 C664.6,418.6 665.6,420 667,421"/>
<path d="M687.8,405.2 C686.8,402.6 684,401.6 681.4,401.8 C677.8,402.2 675.4,404.8 675.4,407.8 C675.4,411.4 678.4,413.6 682,413.6 C684.4,413.6 686.6,413 688,411.6 M676,408.4 H687.8"/>
<path d="M673.2,416.8 H689.4 C690.4,422 690.2,427.4 688.6,431.6 C687.8,433.4 686,433.6 684.6,432.8"/>
<path d="M681,419 C679.6,423 676.6,426.4 672.4,428.4 M686.4,419.4 C685,424.8 681.6,429 677.2,431.2"/>
<path d="M698.4,405.6 C697.6,409.6 696,412.8 694.4,415 M697.2,411 H715 M710,402.6 V430.4 M699,420.6 H715 M695.2,430.4 H720.6"/>
<path d="M723.4,405 L726.2,407.4 M721.6,413 L724.6,415 M722.2,432.2 L727.4,421.8 M746.4,403.4 C742.4,405.2 737.6,406.4 732.6,407 M729.6,415.6 H750 M740,407 V424.4 M733.6,424.6 H747.4 V434.4 H733.6 Z"/>
</g>
<rect x="651.3" y="436.3" width="98.7" height="10.7" fill="#9a9aa8" fill-opacity="0.55"/>
<text x="652.6" y="446.2" font-family="Liberation Mono" font-size="9.6" fill="#ffffff" fill-opacity="0.5" font-weight="bold" textLength="97" lengthAdjust="spacing">www.3elife.net</text>
</svg>
</body></html>
